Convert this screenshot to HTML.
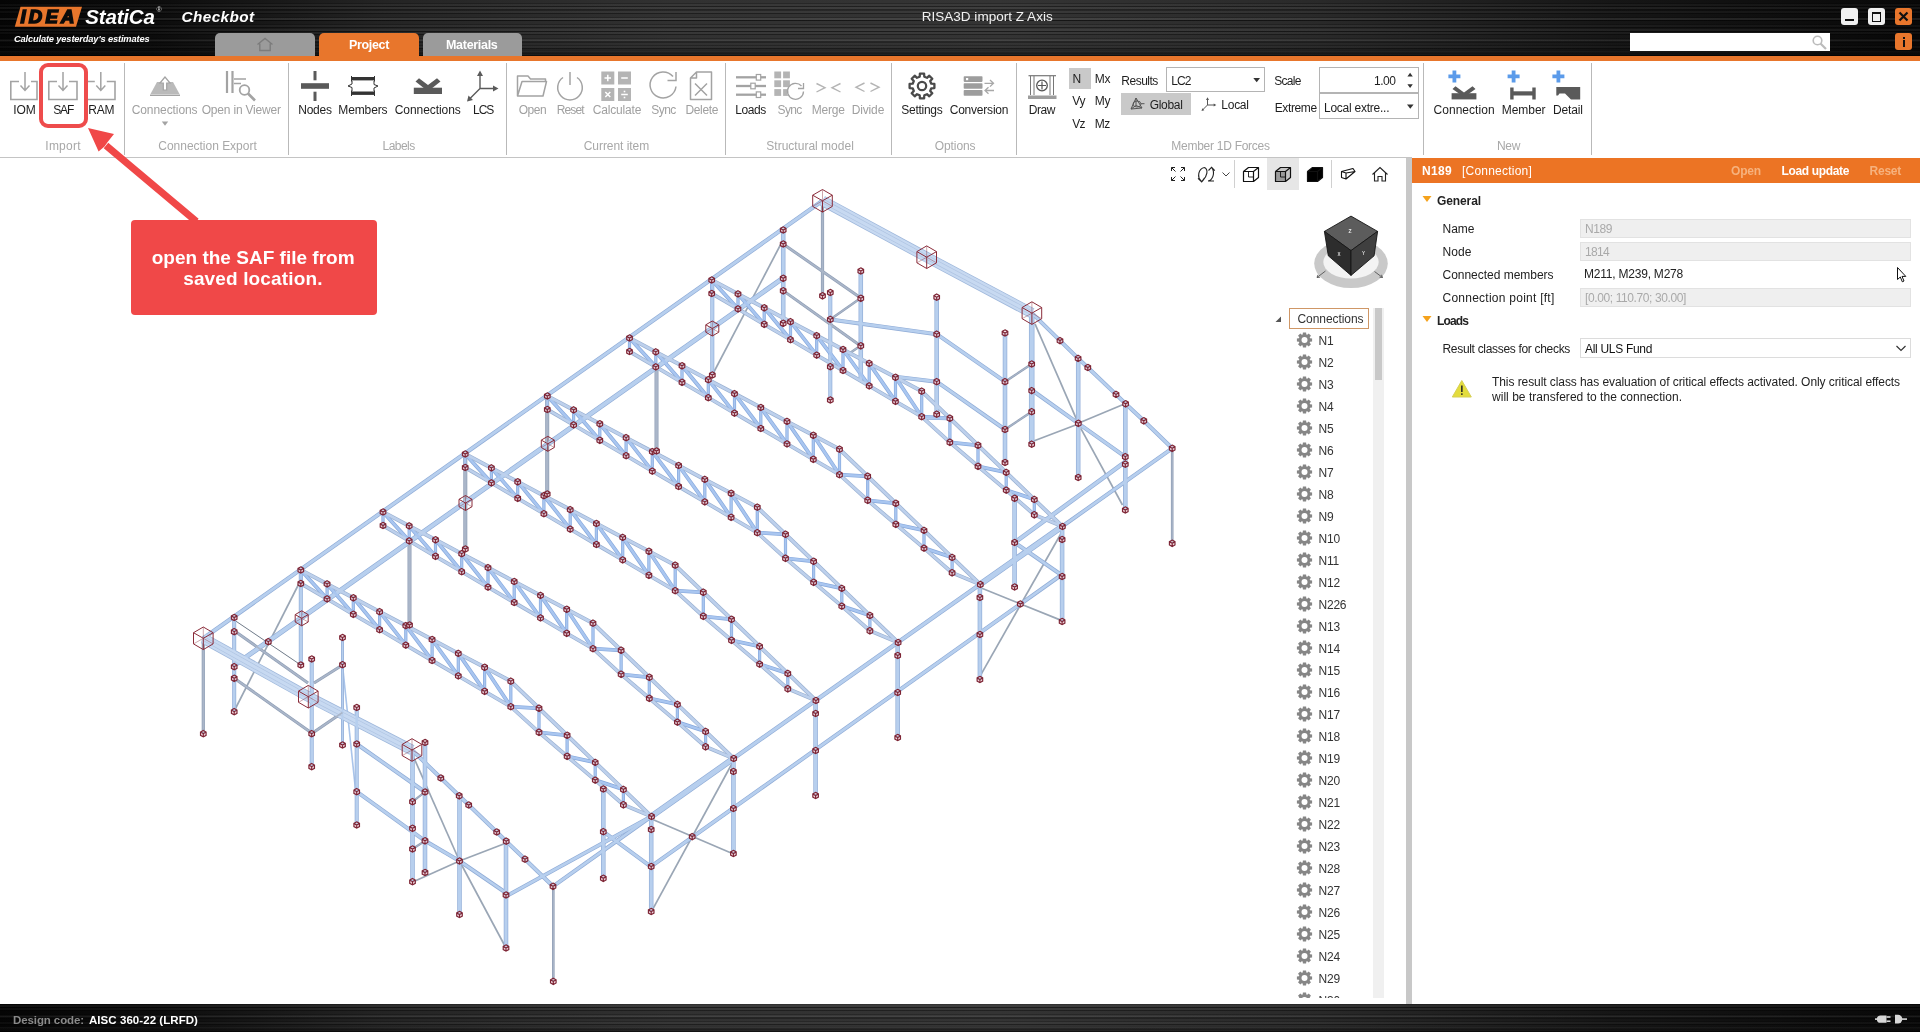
<!DOCTYPE html><html><head><meta charset="utf-8"><title>IDEA StatiCa Checkbot</title>
<style>
html,body{margin:0;padding:0;background:#fff;}
body{width:1920px;height:1032px;position:relative;overflow:hidden;font-family:"Liberation Sans",sans-serif;}
.t{position:absolute;white-space:nowrap;}
.a{position:absolute;}
.brushed{background:
 linear-gradient(180deg, rgba(0,0,0,0) 0%, rgba(0,0,0,0) 78%, rgba(0,0,0,0.45) 100%),
 repeating-linear-gradient(0deg, rgba(0,0,0,0.38) 0px, rgba(0,0,0,0.38) 1px, rgba(255,255,255,0.03) 1px, rgba(255,255,255,0.03) 3px, rgba(0,0,0,0.22) 3px, rgba(0,0,0,0.22) 4px, rgba(255,255,255,0.0) 4px, rgba(255,255,255,0.0) 7px),
 repeating-linear-gradient(0deg, rgba(0,0,0,0.0) 0px, rgba(0,0,0,0.0) 2px, rgba(0,0,0,0.3) 2px, rgba(0,0,0,0.3) 3px, rgba(255,255,255,0.05) 3px, rgba(255,255,255,0.05) 5px, rgba(0,0,0,0) 5px, rgba(0,0,0,0) 11px),
 linear-gradient(90deg,#050505 0%,#0c0c0c 8%,#242424 20%,#313131 35%,#343434 52%,#2a2a2a 68%,#161616 84%,#080808 100%);}
.sep{position:absolute;width:1px;background:#b9b9b9;top:63px;height:92px;}
svg{position:absolute;overflow:visible;}
</style>
</head><body><div id="app" style="position:absolute;left:0;top:0;width:1920px;height:1032px;will-change:transform;">
<svg style="left:0;top:0" width="1920" height="1032" viewBox="0 0 1920 1032"><g stroke-linecap="butt"><line x1="300.8" y1="580.0" x2="234.2" y2="711.0" stroke="#9aa6b5" stroke-width="1.7"/><line x1="234.2" y1="620.0" x2="300.8" y2="665.0" stroke="#6f7a88" stroke-width="1"/><line x1="783.0" y1="240.0" x2="712.3" y2="375.0" stroke="#9aa6b5" stroke-width="1.7"/><line x1="342.5" y1="665.0" x2="355.5" y2="790.0" stroke="#a9c4ea" stroke-width="1.6"/><line x1="414.0" y1="758.0" x2="459.5" y2="861.0" stroke="#9aa6b5" stroke-width="1.7"/><line x1="459.5" y1="861.0" x2="506.2" y2="843.0" stroke="#9aa6b5" stroke-width="1.7"/><line x1="413.3" y1="881.7" x2="459.5" y2="861.0" stroke="#9aa6b5" stroke-width="1.7"/><line x1="459.5" y1="861.0" x2="506.0" y2="948.0" stroke="#9aa6b5" stroke-width="1.7"/><line x1="651.0" y1="818.8" x2="732.3" y2="853.5" stroke="#9aa6b5" stroke-width="1.7"/><line x1="732.3" y1="763.0" x2="651.0" y2="912.4" stroke="#9aa6b5" stroke-width="1.7"/><line x1="978.8" y1="587.0" x2="1061.3" y2="620.4" stroke="#9aa6b5" stroke-width="1.7"/><line x1="1061.3" y1="533.0" x2="978.8" y2="678.3" stroke="#9aa6b5" stroke-width="1.7"/><line x1="1035.0" y1="323.8" x2="1078.3" y2="423.3" stroke="#9aa6b5" stroke-width="1.7"/><line x1="1078.3" y1="423.3" x2="1125.0" y2="403.8" stroke="#9aa6b5" stroke-width="1.7"/><line x1="1031.7" y1="441.7" x2="1078.3" y2="424.0" stroke="#9aa6b5" stroke-width="1.7"/><line x1="1080.8" y1="428.3" x2="1122.5" y2="505.0" stroke="#9aa6b5" stroke-width="1.7"/><line x1="300.8" y1="570.0" x2="300.8" y2="665.0" stroke="#8fabd6" stroke-width="4"/><line x1="465.3" y1="452.8" x2="465.3" y2="549.0" stroke="#8e9db4" stroke-width="4"/><line x1="547.2" y1="395.0" x2="547.2" y2="494.0" stroke="#8e9db4" stroke-width="4"/><line x1="712.3" y1="280.0" x2="712.3" y2="375.0" stroke="#8fabd6" stroke-width="4"/><line x1="409.5" y1="540.0" x2="409.5" y2="625.0" stroke="#8e9db4" stroke-width="4"/><line x1="656.5" y1="364.0" x2="656.5" y2="451.0" stroke="#8e9db4" stroke-width="4"/><line x1="234.2" y1="617.5" x2="234.2" y2="711.7" stroke="#8fabd6" stroke-width="4"/><line x1="783.2" y1="230.0" x2="783.2" y2="323.3" stroke="#8fabd6" stroke-width="4.5"/><line x1="203.3" y1="640.0" x2="203.3" y2="733.7" stroke="#8e9db4" stroke-width="3.2"/><line x1="822.5" y1="203.0" x2="822.5" y2="295.8" stroke="#8e9db4" stroke-width="3.2"/><line x1="1172.2" y1="449.0" x2="1172.2" y2="543.3" stroke="#8e9db4" stroke-width="2.6"/><line x1="553.3" y1="887.0" x2="553.3" y2="981.4" stroke="#8e9db4" stroke-width="2.6"/><line x1="234.7" y1="665.0" x2="783.1" y2="278.0" stroke="#8fabd6" stroke-width="5"/><line x1="203.3" y1="638.3" x2="822.5" y2="200.8" stroke="#8fabd6" stroke-width="4.2"/><line x1="203.3" y1="638.3" x2="308.3" y2="696.7" stroke="#9db6da" stroke-width="10.5"/><line x1="308.3" y1="696.7" x2="412.0" y2="750.0" stroke="#9db6da" stroke-width="10.5"/><line x1="311.7" y1="659.0" x2="311.7" y2="766.7" stroke="#8fabd6" stroke-width="4"/><line x1="342.5" y1="637.5" x2="342.5" y2="745.0" stroke="#8fabd6" stroke-width="3"/><line x1="356.7" y1="707.5" x2="356.7" y2="825.0" stroke="#8fabd6" stroke-width="4"/><line x1="412.5" y1="750.0" x2="412.5" y2="881.7" stroke="#8fabd6" stroke-width="4.5"/><line x1="425.0" y1="742.5" x2="425.0" y2="872.5" stroke="#8fabd6" stroke-width="4.5"/><line x1="459.5" y1="796.0" x2="459.5" y2="914.5" stroke="#8fabd6" stroke-width="4.5"/><line x1="506.0" y1="841.0" x2="506.0" y2="948.0" stroke="#8fabd6" stroke-width="4.5"/><line x1="412.0" y1="750.0" x2="440.8" y2="778.0" stroke="#8fabd6" stroke-width="4"/><line x1="440.8" y1="778.0" x2="459.2" y2="795.8" stroke="#8fabd6" stroke-width="4"/><line x1="459.2" y1="795.8" x2="468.7" y2="805.0" stroke="#8fabd6" stroke-width="4"/><line x1="468.7" y1="805.0" x2="496.7" y2="832.0" stroke="#8fabd6" stroke-width="4"/><line x1="496.7" y1="832.0" x2="506.2" y2="841.2" stroke="#8fabd6" stroke-width="4"/><line x1="506.2" y1="841.2" x2="525.0" y2="859.2" stroke="#8fabd6" stroke-width="4"/><line x1="525.0" y1="859.2" x2="553.0" y2="886.3" stroke="#8fabd6" stroke-width="4"/><line x1="236.0" y1="632.0" x2="308.0" y2="683.0" stroke="#8e9db4" stroke-width="3"/><line x1="236.0" y1="679.5" x2="311.7" y2="733.0" stroke="#8e9db4" stroke-width="3"/><line x1="342.5" y1="665.0" x2="314.0" y2="683.0" stroke="#8e9db4" stroke-width="3"/><line x1="342.5" y1="712.5" x2="314.0" y2="732.0" stroke="#8e9db4" stroke-width="3"/><line x1="356.7" y1="744.0" x2="425.0" y2="792.0" stroke="#8fabd6" stroke-width="4"/><line x1="356.7" y1="791.7" x2="425.0" y2="840.8" stroke="#8fabd6" stroke-width="4"/><line x1="425.0" y1="840.8" x2="459.5" y2="861.0" stroke="#8fabd6" stroke-width="4"/><line x1="459.5" y1="861.0" x2="506.2" y2="893.0" stroke="#8fabd6" stroke-width="4"/><line x1="412.5" y1="801.7" x2="425.0" y2="792.0" stroke="#8e9db4" stroke-width="2.2"/><line x1="412.5" y1="849.0" x2="425.0" y2="840.8" stroke="#8e9db4" stroke-width="2.2"/><line x1="553.0" y1="886.3" x2="651.2" y2="816.5" stroke="#8fabd6" stroke-width="4"/><line x1="505.3" y1="896.7" x2="651.2" y2="816.5" stroke="#8fabd6" stroke-width="4"/><line x1="651.2" y1="816.5" x2="733.4" y2="758.5" stroke="#8fabd6" stroke-width="6"/><line x1="733.4" y1="758.5" x2="815.6" y2="700.5" stroke="#8fabd6" stroke-width="4.4"/><line x1="815.6" y1="700.5" x2="897.7" y2="642.5" stroke="#8fabd6" stroke-width="4.4"/><line x1="897.7" y1="642.5" x2="979.9" y2="584.5" stroke="#8fabd6" stroke-width="4.4"/><line x1="979.9" y1="584.5" x2="1062.1" y2="526.5" stroke="#8fabd6" stroke-width="6"/><line x1="1062.1" y1="526.5" x2="1172.2" y2="448.3" stroke="#8fabd6" stroke-width="4"/><line x1="651.2" y1="816.5" x2="651.2" y2="911.5" stroke="#8fabd6" stroke-width="4.5"/><line x1="733.4" y1="758.5" x2="733.4" y2="853.5" stroke="#8fabd6" stroke-width="4.5"/><line x1="815.6" y1="700.5" x2="815.6" y2="795.5" stroke="#8fabd6" stroke-width="4.5"/><line x1="897.7" y1="642.5" x2="897.7" y2="737.5" stroke="#8fabd6" stroke-width="4.5"/><line x1="979.9" y1="584.5" x2="979.9" y2="679.5" stroke="#8fabd6" stroke-width="4.5"/><line x1="1062.1" y1="526.5" x2="1062.1" y2="621.5" stroke="#8fabd6" stroke-width="4.5"/><line x1="603.3" y1="831.7" x2="650.8" y2="866.7" stroke="#8fabd6" stroke-width="4"/><line x1="650.8" y1="866.7" x2="1061.3" y2="575.0" stroke="#8fabd6" stroke-width="4"/><line x1="603.3" y1="789.0" x2="603.3" y2="878.3" stroke="#8fabd6" stroke-width="4.5"/><line x1="1014.6" y1="498.3" x2="1014.6" y2="587.0" stroke="#8fabd6" stroke-width="4.5"/><line x1="1014.7" y1="542.5" x2="1125.0" y2="462.0" stroke="#8fabd6" stroke-width="4.5"/><line x1="1014.6" y1="542.5" x2="1061.5" y2="575.0" stroke="#8fabd6" stroke-width="4"/><line x1="822.5" y1="200.8" x2="926.7" y2="257.2" stroke="#9db6da" stroke-width="10.5"/><line x1="926.7" y1="257.2" x2="1031.9" y2="313.1" stroke="#9db6da" stroke-width="10.5"/><line x1="1031.9" y1="313.1" x2="1060.0" y2="340.6" stroke="#8fabd6" stroke-width="4"/><line x1="1060.0" y1="340.6" x2="1078.1" y2="358.4" stroke="#8fabd6" stroke-width="4"/><line x1="1078.1" y1="358.4" x2="1087.8" y2="367.5" stroke="#8fabd6" stroke-width="4"/><line x1="1087.8" y1="367.5" x2="1116.0" y2="394.4" stroke="#8fabd6" stroke-width="4"/><line x1="1116.0" y1="394.4" x2="1125.6" y2="403.8" stroke="#8fabd6" stroke-width="4"/><line x1="1125.6" y1="403.8" x2="1143.8" y2="420.8" stroke="#8fabd6" stroke-width="4"/><line x1="1143.8" y1="420.8" x2="1172.2" y2="448.3" stroke="#8fabd6" stroke-width="4"/><line x1="1031.7" y1="313.0" x2="1031.7" y2="444.2" stroke="#8fabd6" stroke-width="5.5"/><line x1="1078.2" y1="358.4" x2="1078.2" y2="477.5" stroke="#8fabd6" stroke-width="4.5"/><line x1="1125.3" y1="403.8" x2="1125.3" y2="510.0" stroke="#8fabd6" stroke-width="4.5"/><line x1="830.3" y1="292.5" x2="830.3" y2="400.0" stroke="#8fabd6" stroke-width="4"/><line x1="860.8" y1="271.0" x2="860.8" y2="380.0" stroke="#8fabd6" stroke-width="4.5"/><line x1="936.7" y1="297.2" x2="936.7" y2="414.2" stroke="#8fabd6" stroke-width="4.5"/><line x1="1005.0" y1="333.0" x2="1005.0" y2="462.5" stroke="#8fabd6" stroke-width="4.5"/><line x1="783.1" y1="244.0" x2="860.8" y2="298.0" stroke="#8e9db4" stroke-width="3"/><line x1="783.1" y1="290.6" x2="860.8" y2="346.0" stroke="#8e9db4" stroke-width="3"/><line x1="830.3" y1="319.4" x2="936.7" y2="334.2" stroke="#8fabd6" stroke-width="4"/><line x1="936.7" y1="334.2" x2="1005.0" y2="381.7" stroke="#8fabd6" stroke-width="4"/><line x1="895.0" y1="376.7" x2="936.7" y2="381.7" stroke="#8fabd6" stroke-width="4"/><line x1="936.7" y1="381.7" x2="1005.0" y2="429.5" stroke="#8fabd6" stroke-width="4"/><line x1="1031.7" y1="390.0" x2="1078.3" y2="423.3" stroke="#8fabd6" stroke-width="4"/><line x1="1078.3" y1="423.3" x2="1125.0" y2="456.7" stroke="#8fabd6" stroke-width="4"/><line x1="920.0" y1="417.5" x2="948.3" y2="418.3" stroke="#8fabd6" stroke-width="4"/><line x1="833.0" y1="317.5" x2="858.0" y2="300.0" stroke="#8e9db4" stroke-width="2.4"/><line x1="848.8" y1="353.8" x2="858.0" y2="347.5" stroke="#8e9db4" stroke-width="2.4"/><line x1="1005.0" y1="381.7" x2="1031.7" y2="364.0" stroke="#8e9db4" stroke-width="2.4"/><line x1="1005.0" y1="429.5" x2="1031.7" y2="411.7" stroke="#8e9db4" stroke-width="2.4"/><line x1="300.8" y1="570.0" x2="300.8" y2="583.5" stroke="#86a8dc" stroke-width="3.2"/><line x1="327.1" y1="583.9" x2="327.1" y2="598.9" stroke="#86a8dc" stroke-width="3.2"/><line x1="353.3" y1="597.8" x2="353.3" y2="614.3" stroke="#86a8dc" stroke-width="3.2"/><line x1="379.6" y1="611.7" x2="379.6" y2="629.7" stroke="#86a8dc" stroke-width="3.2"/><line x1="405.8" y1="625.6" x2="405.8" y2="645.1" stroke="#86a8dc" stroke-width="3.2"/><line x1="432.1" y1="639.5" x2="432.1" y2="660.5" stroke="#86a8dc" stroke-width="3.2"/><line x1="458.3" y1="653.4" x2="458.3" y2="675.9" stroke="#86a8dc" stroke-width="3.2"/><line x1="484.6" y1="667.3" x2="484.6" y2="691.3" stroke="#86a8dc" stroke-width="3.2"/><line x1="510.8" y1="681.2" x2="510.8" y2="706.7" stroke="#86a8dc" stroke-width="3.2"/><line x1="539.0" y1="708.3" x2="539.0" y2="732.3" stroke="#86a8dc" stroke-width="3.2"/><line x1="567.1" y1="735.3" x2="567.1" y2="756.3" stroke="#86a8dc" stroke-width="3.2"/><line x1="595.2" y1="762.4" x2="595.2" y2="780.1" stroke="#86a8dc" stroke-width="3.2"/><line x1="623.4" y1="789.4" x2="623.4" y2="804.7" stroke="#86a8dc" stroke-width="3.2"/><line x1="300.8" y1="570.0" x2="327.1" y2="598.9" stroke="#86a8dc" stroke-width="3.8"/><line x1="327.1" y1="583.9" x2="353.3" y2="614.3" stroke="#86a8dc" stroke-width="3.8"/><line x1="353.3" y1="597.8" x2="379.6" y2="629.7" stroke="#86a8dc" stroke-width="3.8"/><line x1="379.6" y1="611.7" x2="405.8" y2="645.1" stroke="#86a8dc" stroke-width="3.8"/><line x1="405.8" y1="625.6" x2="432.1" y2="660.5" stroke="#86a8dc" stroke-width="3.8"/><line x1="432.1" y1="639.5" x2="458.3" y2="675.9" stroke="#86a8dc" stroke-width="3.8"/><line x1="458.3" y1="653.4" x2="484.6" y2="691.3" stroke="#86a8dc" stroke-width="3.8"/><line x1="484.6" y1="667.3" x2="510.8" y2="706.7" stroke="#86a8dc" stroke-width="3.8"/><line x1="510.8" y1="706.7" x2="539.0" y2="708.3" stroke="#86a8dc" stroke-width="3.8"/><line x1="539.0" y1="732.3" x2="567.1" y2="735.3" stroke="#86a8dc" stroke-width="3.8"/><line x1="567.1" y1="756.3" x2="595.2" y2="762.4" stroke="#86a8dc" stroke-width="3.8"/><line x1="595.2" y1="780.1" x2="623.4" y2="789.4" stroke="#86a8dc" stroke-width="3.8"/><line x1="300.8" y1="570.0" x2="327.1" y2="583.9" stroke="#98afd0" stroke-width="4.0"/><line x1="327.1" y1="583.9" x2="353.3" y2="597.8" stroke="#98afd0" stroke-width="4.0"/><line x1="353.3" y1="597.8" x2="379.6" y2="611.7" stroke="#98afd0" stroke-width="4.0"/><line x1="379.6" y1="611.7" x2="405.8" y2="625.6" stroke="#98afd0" stroke-width="4.0"/><line x1="405.8" y1="625.6" x2="432.1" y2="639.5" stroke="#98afd0" stroke-width="4.0"/><line x1="432.1" y1="639.5" x2="458.3" y2="653.4" stroke="#98afd0" stroke-width="4.0"/><line x1="458.3" y1="653.4" x2="484.6" y2="667.3" stroke="#98afd0" stroke-width="4.0"/><line x1="484.6" y1="667.3" x2="510.8" y2="681.2" stroke="#98afd0" stroke-width="4.0"/><line x1="510.8" y1="681.2" x2="539.0" y2="708.3" stroke="#98afd0" stroke-width="4.0"/><line x1="539.0" y1="708.3" x2="567.1" y2="735.3" stroke="#98afd0" stroke-width="4.0"/><line x1="567.1" y1="735.3" x2="595.2" y2="762.4" stroke="#98afd0" stroke-width="4.0"/><line x1="595.2" y1="762.4" x2="623.4" y2="789.4" stroke="#98afd0" stroke-width="4.0"/><line x1="623.4" y1="789.4" x2="651.5" y2="816.5" stroke="#98afd0" stroke-width="4.0"/><line x1="300.8" y1="583.5" x2="327.1" y2="598.9" stroke="#98afd0" stroke-width="3.8"/><line x1="327.1" y1="598.9" x2="353.3" y2="614.3" stroke="#98afd0" stroke-width="3.8"/><line x1="353.3" y1="614.3" x2="379.6" y2="629.7" stroke="#98afd0" stroke-width="3.8"/><line x1="379.6" y1="629.7" x2="405.8" y2="645.1" stroke="#98afd0" stroke-width="3.8"/><line x1="405.8" y1="645.1" x2="432.1" y2="660.5" stroke="#98afd0" stroke-width="3.8"/><line x1="432.1" y1="660.5" x2="458.3" y2="675.9" stroke="#98afd0" stroke-width="3.8"/><line x1="458.3" y1="675.9" x2="484.6" y2="691.3" stroke="#98afd0" stroke-width="3.8"/><line x1="484.6" y1="691.3" x2="510.8" y2="706.7" stroke="#98afd0" stroke-width="3.8"/><line x1="510.8" y1="706.7" x2="539.0" y2="732.3" stroke="#98afd0" stroke-width="3.8"/><line x1="539.0" y1="732.3" x2="567.1" y2="756.3" stroke="#98afd0" stroke-width="3.8"/><line x1="567.1" y1="756.3" x2="595.2" y2="780.1" stroke="#98afd0" stroke-width="3.8"/><line x1="595.2" y1="780.1" x2="623.4" y2="804.7" stroke="#98afd0" stroke-width="3.8"/><line x1="623.4" y1="804.7" x2="651.5" y2="816.5" stroke="#98afd0" stroke-width="3.8"/><line x1="383.0" y1="512.0" x2="383.0" y2="525.5" stroke="#86a8dc" stroke-width="3.2"/><line x1="409.2" y1="525.9" x2="409.2" y2="540.9" stroke="#86a8dc" stroke-width="3.2"/><line x1="435.5" y1="539.8" x2="435.5" y2="556.3" stroke="#86a8dc" stroke-width="3.2"/><line x1="461.7" y1="553.7" x2="461.7" y2="571.7" stroke="#86a8dc" stroke-width="3.2"/><line x1="488.0" y1="567.6" x2="488.0" y2="587.1" stroke="#86a8dc" stroke-width="3.2"/><line x1="514.2" y1="581.5" x2="514.2" y2="602.5" stroke="#86a8dc" stroke-width="3.2"/><line x1="540.5" y1="595.4" x2="540.5" y2="617.9" stroke="#86a8dc" stroke-width="3.2"/><line x1="566.7" y1="609.3" x2="566.7" y2="633.3" stroke="#86a8dc" stroke-width="3.2"/><line x1="593.0" y1="623.2" x2="593.0" y2="648.7" stroke="#86a8dc" stroke-width="3.2"/><line x1="621.1" y1="650.3" x2="621.1" y2="674.3" stroke="#86a8dc" stroke-width="3.2"/><line x1="649.3" y1="677.3" x2="649.3" y2="698.3" stroke="#86a8dc" stroke-width="3.2"/><line x1="677.4" y1="704.4" x2="677.4" y2="722.1" stroke="#86a8dc" stroke-width="3.2"/><line x1="705.6" y1="731.4" x2="705.6" y2="746.7" stroke="#86a8dc" stroke-width="3.2"/><line x1="383.0" y1="512.0" x2="409.2" y2="540.9" stroke="#86a8dc" stroke-width="3.8"/><line x1="409.2" y1="525.9" x2="435.5" y2="556.3" stroke="#86a8dc" stroke-width="3.8"/><line x1="435.5" y1="539.8" x2="461.7" y2="571.7" stroke="#86a8dc" stroke-width="3.8"/><line x1="461.7" y1="553.7" x2="488.0" y2="587.1" stroke="#86a8dc" stroke-width="3.8"/><line x1="488.0" y1="567.6" x2="514.2" y2="602.5" stroke="#86a8dc" stroke-width="3.8"/><line x1="514.2" y1="581.5" x2="540.5" y2="617.9" stroke="#86a8dc" stroke-width="3.8"/><line x1="540.5" y1="595.4" x2="566.7" y2="633.3" stroke="#86a8dc" stroke-width="3.8"/><line x1="566.7" y1="609.3" x2="593.0" y2="648.7" stroke="#86a8dc" stroke-width="3.8"/><line x1="593.0" y1="648.7" x2="621.1" y2="650.3" stroke="#86a8dc" stroke-width="3.8"/><line x1="621.1" y1="674.3" x2="649.3" y2="677.3" stroke="#86a8dc" stroke-width="3.8"/><line x1="649.3" y1="698.3" x2="677.4" y2="704.4" stroke="#86a8dc" stroke-width="3.8"/><line x1="677.4" y1="722.1" x2="705.6" y2="731.4" stroke="#86a8dc" stroke-width="3.8"/><line x1="383.0" y1="512.0" x2="409.2" y2="525.9" stroke="#98afd0" stroke-width="4.0"/><line x1="409.2" y1="525.9" x2="435.5" y2="539.8" stroke="#98afd0" stroke-width="4.0"/><line x1="435.5" y1="539.8" x2="461.7" y2="553.7" stroke="#98afd0" stroke-width="4.0"/><line x1="461.7" y1="553.7" x2="488.0" y2="567.6" stroke="#98afd0" stroke-width="4.0"/><line x1="488.0" y1="567.6" x2="514.2" y2="581.5" stroke="#98afd0" stroke-width="4.0"/><line x1="514.2" y1="581.5" x2="540.5" y2="595.4" stroke="#98afd0" stroke-width="4.0"/><line x1="540.5" y1="595.4" x2="566.7" y2="609.3" stroke="#98afd0" stroke-width="4.0"/><line x1="566.7" y1="609.3" x2="593.0" y2="623.2" stroke="#98afd0" stroke-width="4.0"/><line x1="593.0" y1="623.2" x2="621.1" y2="650.3" stroke="#98afd0" stroke-width="4.0"/><line x1="621.1" y1="650.3" x2="649.3" y2="677.3" stroke="#98afd0" stroke-width="4.0"/><line x1="649.3" y1="677.3" x2="677.4" y2="704.4" stroke="#98afd0" stroke-width="4.0"/><line x1="677.4" y1="704.4" x2="705.6" y2="731.4" stroke="#98afd0" stroke-width="4.0"/><line x1="705.6" y1="731.4" x2="733.7" y2="758.5" stroke="#98afd0" stroke-width="4.0"/><line x1="383.0" y1="525.5" x2="409.2" y2="540.9" stroke="#98afd0" stroke-width="3.8"/><line x1="409.2" y1="540.9" x2="435.5" y2="556.3" stroke="#98afd0" stroke-width="3.8"/><line x1="435.5" y1="556.3" x2="461.7" y2="571.7" stroke="#98afd0" stroke-width="3.8"/><line x1="461.7" y1="571.7" x2="488.0" y2="587.1" stroke="#98afd0" stroke-width="3.8"/><line x1="488.0" y1="587.1" x2="514.2" y2="602.5" stroke="#98afd0" stroke-width="3.8"/><line x1="514.2" y1="602.5" x2="540.5" y2="617.9" stroke="#98afd0" stroke-width="3.8"/><line x1="540.5" y1="617.9" x2="566.7" y2="633.3" stroke="#98afd0" stroke-width="3.8"/><line x1="566.7" y1="633.3" x2="593.0" y2="648.7" stroke="#98afd0" stroke-width="3.8"/><line x1="593.0" y1="648.7" x2="621.1" y2="674.3" stroke="#98afd0" stroke-width="3.8"/><line x1="621.1" y1="674.3" x2="649.3" y2="698.3" stroke="#98afd0" stroke-width="3.8"/><line x1="649.3" y1="698.3" x2="677.4" y2="722.1" stroke="#98afd0" stroke-width="3.8"/><line x1="677.4" y1="722.1" x2="705.6" y2="746.7" stroke="#98afd0" stroke-width="3.8"/><line x1="705.6" y1="746.7" x2="733.7" y2="758.5" stroke="#98afd0" stroke-width="3.8"/><line x1="465.2" y1="454.0" x2="465.2" y2="467.5" stroke="#86a8dc" stroke-width="3.2"/><line x1="491.4" y1="467.9" x2="491.4" y2="482.9" stroke="#86a8dc" stroke-width="3.2"/><line x1="517.7" y1="481.8" x2="517.7" y2="498.3" stroke="#86a8dc" stroke-width="3.2"/><line x1="543.9" y1="495.7" x2="543.9" y2="513.7" stroke="#86a8dc" stroke-width="3.2"/><line x1="570.2" y1="509.6" x2="570.2" y2="529.1" stroke="#86a8dc" stroke-width="3.2"/><line x1="596.4" y1="523.5" x2="596.4" y2="544.5" stroke="#86a8dc" stroke-width="3.2"/><line x1="622.7" y1="537.4" x2="622.7" y2="559.9" stroke="#86a8dc" stroke-width="3.2"/><line x1="648.9" y1="551.3" x2="648.9" y2="575.3" stroke="#86a8dc" stroke-width="3.2"/><line x1="675.2" y1="565.2" x2="675.2" y2="590.7" stroke="#86a8dc" stroke-width="3.2"/><line x1="703.3" y1="592.3" x2="703.3" y2="616.3" stroke="#86a8dc" stroke-width="3.2"/><line x1="731.5" y1="619.3" x2="731.5" y2="640.3" stroke="#86a8dc" stroke-width="3.2"/><line x1="759.6" y1="646.4" x2="759.6" y2="664.1" stroke="#86a8dc" stroke-width="3.2"/><line x1="787.8" y1="673.4" x2="787.8" y2="688.7" stroke="#86a8dc" stroke-width="3.2"/><line x1="465.2" y1="454.0" x2="491.4" y2="482.9" stroke="#86a8dc" stroke-width="3.8"/><line x1="491.4" y1="467.9" x2="517.7" y2="498.3" stroke="#86a8dc" stroke-width="3.8"/><line x1="517.7" y1="481.8" x2="543.9" y2="513.7" stroke="#86a8dc" stroke-width="3.8"/><line x1="543.9" y1="495.7" x2="570.2" y2="529.1" stroke="#86a8dc" stroke-width="3.8"/><line x1="570.2" y1="509.6" x2="596.4" y2="544.5" stroke="#86a8dc" stroke-width="3.8"/><line x1="596.4" y1="523.5" x2="622.7" y2="559.9" stroke="#86a8dc" stroke-width="3.8"/><line x1="622.7" y1="537.4" x2="648.9" y2="575.3" stroke="#86a8dc" stroke-width="3.8"/><line x1="648.9" y1="551.3" x2="675.2" y2="590.7" stroke="#86a8dc" stroke-width="3.8"/><line x1="675.2" y1="590.7" x2="703.3" y2="592.3" stroke="#86a8dc" stroke-width="3.8"/><line x1="703.3" y1="616.3" x2="731.5" y2="619.3" stroke="#86a8dc" stroke-width="3.8"/><line x1="731.5" y1="640.3" x2="759.6" y2="646.4" stroke="#86a8dc" stroke-width="3.8"/><line x1="759.6" y1="664.1" x2="787.8" y2="673.4" stroke="#86a8dc" stroke-width="3.8"/><line x1="465.2" y1="454.0" x2="491.4" y2="467.9" stroke="#98afd0" stroke-width="4.0"/><line x1="491.4" y1="467.9" x2="517.7" y2="481.8" stroke="#98afd0" stroke-width="4.0"/><line x1="517.7" y1="481.8" x2="543.9" y2="495.7" stroke="#98afd0" stroke-width="4.0"/><line x1="543.9" y1="495.7" x2="570.2" y2="509.6" stroke="#98afd0" stroke-width="4.0"/><line x1="570.2" y1="509.6" x2="596.4" y2="523.5" stroke="#98afd0" stroke-width="4.0"/><line x1="596.4" y1="523.5" x2="622.7" y2="537.4" stroke="#98afd0" stroke-width="4.0"/><line x1="622.7" y1="537.4" x2="648.9" y2="551.3" stroke="#98afd0" stroke-width="4.0"/><line x1="648.9" y1="551.3" x2="675.2" y2="565.2" stroke="#98afd0" stroke-width="4.0"/><line x1="675.2" y1="565.2" x2="703.3" y2="592.3" stroke="#98afd0" stroke-width="4.0"/><line x1="703.3" y1="592.3" x2="731.5" y2="619.3" stroke="#98afd0" stroke-width="4.0"/><line x1="731.5" y1="619.3" x2="759.6" y2="646.4" stroke="#98afd0" stroke-width="4.0"/><line x1="759.6" y1="646.4" x2="787.8" y2="673.4" stroke="#98afd0" stroke-width="4.0"/><line x1="787.8" y1="673.4" x2="815.9" y2="700.5" stroke="#98afd0" stroke-width="4.0"/><line x1="465.2" y1="467.5" x2="491.4" y2="482.9" stroke="#98afd0" stroke-width="3.8"/><line x1="491.4" y1="482.9" x2="517.7" y2="498.3" stroke="#98afd0" stroke-width="3.8"/><line x1="517.7" y1="498.3" x2="543.9" y2="513.7" stroke="#98afd0" stroke-width="3.8"/><line x1="543.9" y1="513.7" x2="570.2" y2="529.1" stroke="#98afd0" stroke-width="3.8"/><line x1="570.2" y1="529.1" x2="596.4" y2="544.5" stroke="#98afd0" stroke-width="3.8"/><line x1="596.4" y1="544.5" x2="622.7" y2="559.9" stroke="#98afd0" stroke-width="3.8"/><line x1="622.7" y1="559.9" x2="648.9" y2="575.3" stroke="#98afd0" stroke-width="3.8"/><line x1="648.9" y1="575.3" x2="675.2" y2="590.7" stroke="#98afd0" stroke-width="3.8"/><line x1="675.2" y1="590.7" x2="703.3" y2="616.3" stroke="#98afd0" stroke-width="3.8"/><line x1="703.3" y1="616.3" x2="731.5" y2="640.3" stroke="#98afd0" stroke-width="3.8"/><line x1="731.5" y1="640.3" x2="759.6" y2="664.1" stroke="#98afd0" stroke-width="3.8"/><line x1="759.6" y1="664.1" x2="787.8" y2="688.7" stroke="#98afd0" stroke-width="3.8"/><line x1="787.8" y1="688.7" x2="815.9" y2="700.5" stroke="#98afd0" stroke-width="3.8"/><line x1="547.3" y1="396.0" x2="547.3" y2="409.5" stroke="#86a8dc" stroke-width="3.2"/><line x1="573.6" y1="409.9" x2="573.6" y2="424.9" stroke="#86a8dc" stroke-width="3.2"/><line x1="599.8" y1="423.8" x2="599.8" y2="440.3" stroke="#86a8dc" stroke-width="3.2"/><line x1="626.1" y1="437.7" x2="626.1" y2="455.7" stroke="#86a8dc" stroke-width="3.2"/><line x1="652.3" y1="451.6" x2="652.3" y2="471.1" stroke="#86a8dc" stroke-width="3.2"/><line x1="678.6" y1="465.5" x2="678.6" y2="486.5" stroke="#86a8dc" stroke-width="3.2"/><line x1="704.8" y1="479.4" x2="704.8" y2="501.9" stroke="#86a8dc" stroke-width="3.2"/><line x1="731.1" y1="493.3" x2="731.1" y2="517.3" stroke="#86a8dc" stroke-width="3.2"/><line x1="757.3" y1="507.2" x2="757.3" y2="532.7" stroke="#86a8dc" stroke-width="3.2"/><line x1="785.5" y1="534.3" x2="785.5" y2="558.3" stroke="#86a8dc" stroke-width="3.2"/><line x1="813.6" y1="561.3" x2="813.6" y2="582.3" stroke="#86a8dc" stroke-width="3.2"/><line x1="841.8" y1="588.4" x2="841.8" y2="606.1" stroke="#86a8dc" stroke-width="3.2"/><line x1="869.9" y1="615.4" x2="869.9" y2="630.7" stroke="#86a8dc" stroke-width="3.2"/><line x1="547.3" y1="396.0" x2="573.6" y2="424.9" stroke="#86a8dc" stroke-width="3.8"/><line x1="573.6" y1="409.9" x2="599.8" y2="440.3" stroke="#86a8dc" stroke-width="3.8"/><line x1="599.8" y1="423.8" x2="626.1" y2="455.7" stroke="#86a8dc" stroke-width="3.8"/><line x1="626.1" y1="437.7" x2="652.3" y2="471.1" stroke="#86a8dc" stroke-width="3.8"/><line x1="652.3" y1="451.6" x2="678.6" y2="486.5" stroke="#86a8dc" stroke-width="3.8"/><line x1="678.6" y1="465.5" x2="704.8" y2="501.9" stroke="#86a8dc" stroke-width="3.8"/><line x1="704.8" y1="479.4" x2="731.1" y2="517.3" stroke="#86a8dc" stroke-width="3.8"/><line x1="731.1" y1="493.3" x2="757.3" y2="532.7" stroke="#86a8dc" stroke-width="3.8"/><line x1="757.3" y1="532.7" x2="785.5" y2="534.3" stroke="#86a8dc" stroke-width="3.8"/><line x1="785.5" y1="558.3" x2="813.6" y2="561.3" stroke="#86a8dc" stroke-width="3.8"/><line x1="813.6" y1="582.3" x2="841.8" y2="588.4" stroke="#86a8dc" stroke-width="3.8"/><line x1="841.8" y1="606.1" x2="869.9" y2="615.4" stroke="#86a8dc" stroke-width="3.8"/><line x1="547.3" y1="396.0" x2="573.6" y2="409.9" stroke="#98afd0" stroke-width="4.0"/><line x1="573.6" y1="409.9" x2="599.8" y2="423.8" stroke="#98afd0" stroke-width="4.0"/><line x1="599.8" y1="423.8" x2="626.1" y2="437.7" stroke="#98afd0" stroke-width="4.0"/><line x1="626.1" y1="437.7" x2="652.3" y2="451.6" stroke="#98afd0" stroke-width="4.0"/><line x1="652.3" y1="451.6" x2="678.6" y2="465.5" stroke="#98afd0" stroke-width="4.0"/><line x1="678.6" y1="465.5" x2="704.8" y2="479.4" stroke="#98afd0" stroke-width="4.0"/><line x1="704.8" y1="479.4" x2="731.1" y2="493.3" stroke="#98afd0" stroke-width="4.0"/><line x1="731.1" y1="493.3" x2="757.3" y2="507.2" stroke="#98afd0" stroke-width="4.0"/><line x1="757.3" y1="507.2" x2="785.5" y2="534.3" stroke="#98afd0" stroke-width="4.0"/><line x1="785.5" y1="534.3" x2="813.6" y2="561.3" stroke="#98afd0" stroke-width="4.0"/><line x1="813.6" y1="561.3" x2="841.8" y2="588.4" stroke="#98afd0" stroke-width="4.0"/><line x1="841.8" y1="588.4" x2="869.9" y2="615.4" stroke="#98afd0" stroke-width="4.0"/><line x1="869.9" y1="615.4" x2="898.1" y2="642.5" stroke="#98afd0" stroke-width="4.0"/><line x1="547.3" y1="409.5" x2="573.6" y2="424.9" stroke="#98afd0" stroke-width="3.8"/><line x1="573.6" y1="424.9" x2="599.8" y2="440.3" stroke="#98afd0" stroke-width="3.8"/><line x1="599.8" y1="440.3" x2="626.1" y2="455.7" stroke="#98afd0" stroke-width="3.8"/><line x1="626.1" y1="455.7" x2="652.3" y2="471.1" stroke="#98afd0" stroke-width="3.8"/><line x1="652.3" y1="471.1" x2="678.6" y2="486.5" stroke="#98afd0" stroke-width="3.8"/><line x1="678.6" y1="486.5" x2="704.8" y2="501.9" stroke="#98afd0" stroke-width="3.8"/><line x1="704.8" y1="501.9" x2="731.1" y2="517.3" stroke="#98afd0" stroke-width="3.8"/><line x1="731.1" y1="517.3" x2="757.3" y2="532.7" stroke="#98afd0" stroke-width="3.8"/><line x1="757.3" y1="532.7" x2="785.5" y2="558.3" stroke="#98afd0" stroke-width="3.8"/><line x1="785.5" y1="558.3" x2="813.6" y2="582.3" stroke="#98afd0" stroke-width="3.8"/><line x1="813.6" y1="582.3" x2="841.8" y2="606.1" stroke="#98afd0" stroke-width="3.8"/><line x1="841.8" y1="606.1" x2="869.9" y2="630.7" stroke="#98afd0" stroke-width="3.8"/><line x1="869.9" y1="630.7" x2="898.1" y2="642.5" stroke="#98afd0" stroke-width="3.8"/><line x1="629.5" y1="338.0" x2="629.5" y2="351.5" stroke="#86a8dc" stroke-width="3.2"/><line x1="655.8" y1="351.9" x2="655.8" y2="366.9" stroke="#86a8dc" stroke-width="3.2"/><line x1="682.0" y1="365.8" x2="682.0" y2="382.3" stroke="#86a8dc" stroke-width="3.2"/><line x1="708.3" y1="379.7" x2="708.3" y2="397.7" stroke="#86a8dc" stroke-width="3.2"/><line x1="734.5" y1="393.6" x2="734.5" y2="413.1" stroke="#86a8dc" stroke-width="3.2"/><line x1="760.8" y1="407.5" x2="760.8" y2="428.5" stroke="#86a8dc" stroke-width="3.2"/><line x1="787.0" y1="421.4" x2="787.0" y2="443.9" stroke="#86a8dc" stroke-width="3.2"/><line x1="813.3" y1="435.3" x2="813.3" y2="459.3" stroke="#86a8dc" stroke-width="3.2"/><line x1="839.5" y1="449.2" x2="839.5" y2="474.7" stroke="#86a8dc" stroke-width="3.2"/><line x1="867.7" y1="476.3" x2="867.7" y2="500.3" stroke="#86a8dc" stroke-width="3.2"/><line x1="895.8" y1="503.3" x2="895.8" y2="524.3" stroke="#86a8dc" stroke-width="3.2"/><line x1="924.0" y1="530.4" x2="924.0" y2="548.1" stroke="#86a8dc" stroke-width="3.2"/><line x1="952.1" y1="557.4" x2="952.1" y2="572.7" stroke="#86a8dc" stroke-width="3.2"/><line x1="629.5" y1="338.0" x2="655.8" y2="366.9" stroke="#86a8dc" stroke-width="3.8"/><line x1="655.8" y1="351.9" x2="682.0" y2="382.3" stroke="#86a8dc" stroke-width="3.8"/><line x1="682.0" y1="365.8" x2="708.3" y2="397.7" stroke="#86a8dc" stroke-width="3.8"/><line x1="708.3" y1="379.7" x2="734.5" y2="413.1" stroke="#86a8dc" stroke-width="3.8"/><line x1="734.5" y1="393.6" x2="760.8" y2="428.5" stroke="#86a8dc" stroke-width="3.8"/><line x1="760.8" y1="407.5" x2="787.0" y2="443.9" stroke="#86a8dc" stroke-width="3.8"/><line x1="787.0" y1="421.4" x2="813.3" y2="459.3" stroke="#86a8dc" stroke-width="3.8"/><line x1="813.3" y1="435.3" x2="839.5" y2="474.7" stroke="#86a8dc" stroke-width="3.8"/><line x1="839.5" y1="474.7" x2="867.7" y2="476.3" stroke="#86a8dc" stroke-width="3.8"/><line x1="867.7" y1="500.3" x2="895.8" y2="503.3" stroke="#86a8dc" stroke-width="3.8"/><line x1="895.8" y1="524.3" x2="924.0" y2="530.4" stroke="#86a8dc" stroke-width="3.8"/><line x1="924.0" y1="548.1" x2="952.1" y2="557.4" stroke="#86a8dc" stroke-width="3.8"/><line x1="629.5" y1="338.0" x2="655.8" y2="351.9" stroke="#98afd0" stroke-width="4.0"/><line x1="655.8" y1="351.9" x2="682.0" y2="365.8" stroke="#98afd0" stroke-width="4.0"/><line x1="682.0" y1="365.8" x2="708.3" y2="379.7" stroke="#98afd0" stroke-width="4.0"/><line x1="708.3" y1="379.7" x2="734.5" y2="393.6" stroke="#98afd0" stroke-width="4.0"/><line x1="734.5" y1="393.6" x2="760.8" y2="407.5" stroke="#98afd0" stroke-width="4.0"/><line x1="760.8" y1="407.5" x2="787.0" y2="421.4" stroke="#98afd0" stroke-width="4.0"/><line x1="787.0" y1="421.4" x2="813.3" y2="435.3" stroke="#98afd0" stroke-width="4.0"/><line x1="813.3" y1="435.3" x2="839.5" y2="449.2" stroke="#98afd0" stroke-width="4.0"/><line x1="839.5" y1="449.2" x2="867.7" y2="476.3" stroke="#98afd0" stroke-width="4.0"/><line x1="867.7" y1="476.3" x2="895.8" y2="503.3" stroke="#98afd0" stroke-width="4.0"/><line x1="895.8" y1="503.3" x2="924.0" y2="530.4" stroke="#98afd0" stroke-width="4.0"/><line x1="924.0" y1="530.4" x2="952.1" y2="557.4" stroke="#98afd0" stroke-width="4.0"/><line x1="952.1" y1="557.4" x2="980.3" y2="584.5" stroke="#98afd0" stroke-width="4.0"/><line x1="629.5" y1="351.5" x2="655.8" y2="366.9" stroke="#98afd0" stroke-width="3.8"/><line x1="655.8" y1="366.9" x2="682.0" y2="382.3" stroke="#98afd0" stroke-width="3.8"/><line x1="682.0" y1="382.3" x2="708.3" y2="397.7" stroke="#98afd0" stroke-width="3.8"/><line x1="708.3" y1="397.7" x2="734.5" y2="413.1" stroke="#98afd0" stroke-width="3.8"/><line x1="734.5" y1="413.1" x2="760.8" y2="428.5" stroke="#98afd0" stroke-width="3.8"/><line x1="760.8" y1="428.5" x2="787.0" y2="443.9" stroke="#98afd0" stroke-width="3.8"/><line x1="787.0" y1="443.9" x2="813.3" y2="459.3" stroke="#98afd0" stroke-width="3.8"/><line x1="813.3" y1="459.3" x2="839.5" y2="474.7" stroke="#98afd0" stroke-width="3.8"/><line x1="839.5" y1="474.7" x2="867.7" y2="500.3" stroke="#98afd0" stroke-width="3.8"/><line x1="867.7" y1="500.3" x2="895.8" y2="524.3" stroke="#98afd0" stroke-width="3.8"/><line x1="895.8" y1="524.3" x2="924.0" y2="548.1" stroke="#98afd0" stroke-width="3.8"/><line x1="924.0" y1="548.1" x2="952.1" y2="572.7" stroke="#98afd0" stroke-width="3.8"/><line x1="952.1" y1="572.7" x2="980.3" y2="584.5" stroke="#98afd0" stroke-width="3.8"/><line x1="711.7" y1="280.0" x2="711.7" y2="293.5" stroke="#86a8dc" stroke-width="3.2"/><line x1="738.0" y1="293.9" x2="738.0" y2="308.9" stroke="#86a8dc" stroke-width="3.2"/><line x1="764.2" y1="307.8" x2="764.2" y2="324.3" stroke="#86a8dc" stroke-width="3.2"/><line x1="790.5" y1="321.7" x2="790.5" y2="339.7" stroke="#86a8dc" stroke-width="3.2"/><line x1="816.7" y1="335.6" x2="816.7" y2="355.1" stroke="#86a8dc" stroke-width="3.2"/><line x1="843.0" y1="349.5" x2="843.0" y2="370.5" stroke="#86a8dc" stroke-width="3.2"/><line x1="869.2" y1="363.4" x2="869.2" y2="385.9" stroke="#86a8dc" stroke-width="3.2"/><line x1="895.5" y1="377.3" x2="895.5" y2="401.3" stroke="#86a8dc" stroke-width="3.2"/><line x1="921.7" y1="391.2" x2="921.7" y2="416.7" stroke="#86a8dc" stroke-width="3.2"/><line x1="949.9" y1="418.3" x2="949.9" y2="442.3" stroke="#86a8dc" stroke-width="3.2"/><line x1="978.0" y1="445.3" x2="978.0" y2="466.3" stroke="#86a8dc" stroke-width="3.2"/><line x1="1006.2" y1="472.4" x2="1006.2" y2="490.1" stroke="#86a8dc" stroke-width="3.2"/><line x1="1034.3" y1="499.4" x2="1034.3" y2="514.7" stroke="#86a8dc" stroke-width="3.2"/><line x1="711.7" y1="280.0" x2="738.0" y2="308.9" stroke="#86a8dc" stroke-width="3.8"/><line x1="738.0" y1="293.9" x2="764.2" y2="324.3" stroke="#86a8dc" stroke-width="3.8"/><line x1="764.2" y1="307.8" x2="790.5" y2="339.7" stroke="#86a8dc" stroke-width="3.8"/><line x1="790.5" y1="321.7" x2="816.7" y2="355.1" stroke="#86a8dc" stroke-width="3.8"/><line x1="816.7" y1="335.6" x2="843.0" y2="370.5" stroke="#86a8dc" stroke-width="3.8"/><line x1="843.0" y1="349.5" x2="869.2" y2="385.9" stroke="#86a8dc" stroke-width="3.8"/><line x1="869.2" y1="363.4" x2="895.5" y2="401.3" stroke="#86a8dc" stroke-width="3.8"/><line x1="895.5" y1="377.3" x2="921.7" y2="416.7" stroke="#86a8dc" stroke-width="3.8"/><line x1="921.7" y1="416.7" x2="949.9" y2="418.3" stroke="#86a8dc" stroke-width="3.8"/><line x1="949.9" y1="442.3" x2="978.0" y2="445.3" stroke="#86a8dc" stroke-width="3.8"/><line x1="978.0" y1="466.3" x2="1006.2" y2="472.4" stroke="#86a8dc" stroke-width="3.8"/><line x1="1006.2" y1="490.1" x2="1034.3" y2="499.4" stroke="#86a8dc" stroke-width="3.8"/><line x1="711.7" y1="280.0" x2="738.0" y2="293.9" stroke="#98afd0" stroke-width="4.0"/><line x1="738.0" y1="293.9" x2="764.2" y2="307.8" stroke="#98afd0" stroke-width="4.0"/><line x1="764.2" y1="307.8" x2="790.5" y2="321.7" stroke="#98afd0" stroke-width="4.0"/><line x1="790.5" y1="321.7" x2="816.7" y2="335.6" stroke="#98afd0" stroke-width="4.0"/><line x1="816.7" y1="335.6" x2="843.0" y2="349.5" stroke="#98afd0" stroke-width="4.0"/><line x1="843.0" y1="349.5" x2="869.2" y2="363.4" stroke="#98afd0" stroke-width="4.0"/><line x1="869.2" y1="363.4" x2="895.5" y2="377.3" stroke="#98afd0" stroke-width="4.0"/><line x1="895.5" y1="377.3" x2="921.7" y2="391.2" stroke="#98afd0" stroke-width="4.0"/><line x1="921.7" y1="391.2" x2="949.9" y2="418.3" stroke="#98afd0" stroke-width="4.0"/><line x1="949.9" y1="418.3" x2="978.0" y2="445.3" stroke="#98afd0" stroke-width="4.0"/><line x1="978.0" y1="445.3" x2="1006.2" y2="472.4" stroke="#98afd0" stroke-width="4.0"/><line x1="1006.2" y1="472.4" x2="1034.3" y2="499.4" stroke="#98afd0" stroke-width="4.0"/><line x1="1034.3" y1="499.4" x2="1062.5" y2="526.5" stroke="#98afd0" stroke-width="4.0"/><line x1="711.7" y1="293.5" x2="738.0" y2="308.9" stroke="#98afd0" stroke-width="3.8"/><line x1="738.0" y1="308.9" x2="764.2" y2="324.3" stroke="#98afd0" stroke-width="3.8"/><line x1="764.2" y1="324.3" x2="790.5" y2="339.7" stroke="#98afd0" stroke-width="3.8"/><line x1="790.5" y1="339.7" x2="816.7" y2="355.1" stroke="#98afd0" stroke-width="3.8"/><line x1="816.7" y1="355.1" x2="843.0" y2="370.5" stroke="#98afd0" stroke-width="3.8"/><line x1="843.0" y1="370.5" x2="869.2" y2="385.9" stroke="#98afd0" stroke-width="3.8"/><line x1="869.2" y1="385.9" x2="895.5" y2="401.3" stroke="#98afd0" stroke-width="3.8"/><line x1="895.5" y1="401.3" x2="921.7" y2="416.7" stroke="#98afd0" stroke-width="3.8"/><line x1="921.7" y1="416.7" x2="949.9" y2="442.3" stroke="#98afd0" stroke-width="3.8"/><line x1="949.9" y1="442.3" x2="978.0" y2="466.3" stroke="#98afd0" stroke-width="3.8"/><line x1="978.0" y1="466.3" x2="1006.2" y2="490.1" stroke="#98afd0" stroke-width="3.8"/><line x1="1006.2" y1="490.1" x2="1034.3" y2="514.7" stroke="#98afd0" stroke-width="3.8"/><line x1="1034.3" y1="514.7" x2="1062.5" y2="526.5" stroke="#98afd0" stroke-width="3.8"/><line x1="300.8" y1="570.0" x2="300.8" y2="665.0" stroke="#b7cfee" stroke-width="2.7"/><line x1="465.3" y1="452.8" x2="465.3" y2="549.0" stroke="#aab6c9" stroke-width="2.7"/><line x1="547.2" y1="395.0" x2="547.2" y2="494.0" stroke="#aab6c9" stroke-width="2.7"/><line x1="712.3" y1="280.0" x2="712.3" y2="375.0" stroke="#b7cfee" stroke-width="2.7"/><line x1="409.5" y1="540.0" x2="409.5" y2="625.0" stroke="#aab6c9" stroke-width="2.7"/><line x1="656.5" y1="364.0" x2="656.5" y2="451.0" stroke="#aab6c9" stroke-width="2.7"/><line x1="234.2" y1="617.5" x2="234.2" y2="711.7" stroke="#b7cfee" stroke-width="2.7"/><line x1="783.2" y1="230.0" x2="783.2" y2="323.3" stroke="#b7cfee" stroke-width="3.2"/><line x1="203.3" y1="640.0" x2="203.3" y2="733.7" stroke="#aab6c9" stroke-width="1.9"/><line x1="822.5" y1="203.0" x2="822.5" y2="295.8" stroke="#aab6c9" stroke-width="1.9"/><line x1="1172.2" y1="449.0" x2="1172.2" y2="543.3" stroke="#aab6c9" stroke-width="1.3"/><line x1="553.3" y1="887.0" x2="553.3" y2="981.4" stroke="#aab6c9" stroke-width="1.3"/><line x1="234.7" y1="665.0" x2="783.1" y2="278.0" stroke="#b7cfee" stroke-width="3.7"/><line x1="203.3" y1="638.3" x2="822.5" y2="200.8" stroke="#b7cfee" stroke-width="2.9"/><line x1="203.3" y1="638.3" x2="308.3" y2="696.7" stroke="#c7d9f1" stroke-width="9.1"/><line x1="203.3" y1="638.3" x2="308.3" y2="696.7" stroke="#afc4e2" stroke-width="4.4"/><line x1="203.3" y1="638.3" x2="308.3" y2="696.7" stroke="#c7d9f1" stroke-width="3.2"/><line x1="308.3" y1="696.7" x2="412.0" y2="750.0" stroke="#c7d9f1" stroke-width="9.1"/><line x1="308.3" y1="696.7" x2="412.0" y2="750.0" stroke="#afc4e2" stroke-width="4.4"/><line x1="308.3" y1="696.7" x2="412.0" y2="750.0" stroke="#c7d9f1" stroke-width="3.2"/><line x1="311.7" y1="659.0" x2="311.7" y2="766.7" stroke="#b7cfee" stroke-width="2.7"/><line x1="342.5" y1="637.5" x2="342.5" y2="745.0" stroke="#b7cfee" stroke-width="1.7"/><line x1="356.7" y1="707.5" x2="356.7" y2="825.0" stroke="#b7cfee" stroke-width="2.7"/><line x1="412.5" y1="750.0" x2="412.5" y2="881.7" stroke="#b7cfee" stroke-width="3.2"/><line x1="425.0" y1="742.5" x2="425.0" y2="872.5" stroke="#b7cfee" stroke-width="3.2"/><line x1="459.5" y1="796.0" x2="459.5" y2="914.5" stroke="#b7cfee" stroke-width="3.2"/><line x1="506.0" y1="841.0" x2="506.0" y2="948.0" stroke="#b7cfee" stroke-width="3.2"/><line x1="412.0" y1="750.0" x2="440.8" y2="778.0" stroke="#b7cfee" stroke-width="2.7"/><line x1="440.8" y1="778.0" x2="459.2" y2="795.8" stroke="#b7cfee" stroke-width="2.7"/><line x1="459.2" y1="795.8" x2="468.7" y2="805.0" stroke="#b7cfee" stroke-width="2.7"/><line x1="468.7" y1="805.0" x2="496.7" y2="832.0" stroke="#b7cfee" stroke-width="2.7"/><line x1="496.7" y1="832.0" x2="506.2" y2="841.2" stroke="#b7cfee" stroke-width="2.7"/><line x1="506.2" y1="841.2" x2="525.0" y2="859.2" stroke="#b7cfee" stroke-width="2.7"/><line x1="525.0" y1="859.2" x2="553.0" y2="886.3" stroke="#b7cfee" stroke-width="2.7"/><line x1="236.0" y1="632.0" x2="308.0" y2="683.0" stroke="#aab6c9" stroke-width="1.7"/><line x1="236.0" y1="679.5" x2="311.7" y2="733.0" stroke="#aab6c9" stroke-width="1.7"/><line x1="342.5" y1="665.0" x2="314.0" y2="683.0" stroke="#aab6c9" stroke-width="1.7"/><line x1="342.5" y1="712.5" x2="314.0" y2="732.0" stroke="#aab6c9" stroke-width="1.7"/><line x1="356.7" y1="744.0" x2="425.0" y2="792.0" stroke="#b7cfee" stroke-width="2.7"/><line x1="356.7" y1="791.7" x2="425.0" y2="840.8" stroke="#b7cfee" stroke-width="2.7"/><line x1="425.0" y1="840.8" x2="459.5" y2="861.0" stroke="#b7cfee" stroke-width="2.7"/><line x1="459.5" y1="861.0" x2="506.2" y2="893.0" stroke="#b7cfee" stroke-width="2.7"/><line x1="412.5" y1="801.7" x2="425.0" y2="792.0" stroke="#aab6c9" stroke-width="0.9"/><line x1="412.5" y1="849.0" x2="425.0" y2="840.8" stroke="#aab6c9" stroke-width="0.9"/><line x1="553.0" y1="886.3" x2="651.2" y2="816.5" stroke="#b7cfee" stroke-width="2.7"/><line x1="505.3" y1="896.7" x2="651.2" y2="816.5" stroke="#b7cfee" stroke-width="2.7"/><line x1="651.2" y1="816.5" x2="733.4" y2="758.5" stroke="#b7cfee" stroke-width="4.7"/><line x1="733.4" y1="758.5" x2="815.6" y2="700.5" stroke="#b7cfee" stroke-width="3.1"/><line x1="815.6" y1="700.5" x2="897.7" y2="642.5" stroke="#b7cfee" stroke-width="3.1"/><line x1="897.7" y1="642.5" x2="979.9" y2="584.5" stroke="#b7cfee" stroke-width="3.1"/><line x1="979.9" y1="584.5" x2="1062.1" y2="526.5" stroke="#b7cfee" stroke-width="4.7"/><line x1="1062.1" y1="526.5" x2="1172.2" y2="448.3" stroke="#b7cfee" stroke-width="2.7"/><line x1="651.2" y1="816.5" x2="651.2" y2="911.5" stroke="#b7cfee" stroke-width="3.2"/><line x1="733.4" y1="758.5" x2="733.4" y2="853.5" stroke="#b7cfee" stroke-width="3.2"/><line x1="815.6" y1="700.5" x2="815.6" y2="795.5" stroke="#b7cfee" stroke-width="3.2"/><line x1="897.7" y1="642.5" x2="897.7" y2="737.5" stroke="#b7cfee" stroke-width="3.2"/><line x1="979.9" y1="584.5" x2="979.9" y2="679.5" stroke="#b7cfee" stroke-width="3.2"/><line x1="1062.1" y1="526.5" x2="1062.1" y2="621.5" stroke="#b7cfee" stroke-width="3.2"/><line x1="603.3" y1="831.7" x2="650.8" y2="866.7" stroke="#b7cfee" stroke-width="2.7"/><line x1="650.8" y1="866.7" x2="1061.3" y2="575.0" stroke="#b7cfee" stroke-width="2.7"/><line x1="603.3" y1="789.0" x2="603.3" y2="878.3" stroke="#b7cfee" stroke-width="3.2"/><line x1="1014.6" y1="498.3" x2="1014.6" y2="587.0" stroke="#b7cfee" stroke-width="3.2"/><line x1="1014.7" y1="542.5" x2="1125.0" y2="462.0" stroke="#b7cfee" stroke-width="3.2"/><line x1="1014.6" y1="542.5" x2="1061.5" y2="575.0" stroke="#b7cfee" stroke-width="2.7"/><line x1="822.5" y1="200.8" x2="926.7" y2="257.2" stroke="#c7d9f1" stroke-width="9.1"/><line x1="822.5" y1="200.8" x2="926.7" y2="257.2" stroke="#afc4e2" stroke-width="4.4"/><line x1="822.5" y1="200.8" x2="926.7" y2="257.2" stroke="#c7d9f1" stroke-width="3.2"/><line x1="926.7" y1="257.2" x2="1031.9" y2="313.1" stroke="#c7d9f1" stroke-width="9.1"/><line x1="926.7" y1="257.2" x2="1031.9" y2="313.1" stroke="#afc4e2" stroke-width="4.4"/><line x1="926.7" y1="257.2" x2="1031.9" y2="313.1" stroke="#c7d9f1" stroke-width="3.2"/><line x1="1031.9" y1="313.1" x2="1060.0" y2="340.6" stroke="#b7cfee" stroke-width="2.7"/><line x1="1060.0" y1="340.6" x2="1078.1" y2="358.4" stroke="#b7cfee" stroke-width="2.7"/><line x1="1078.1" y1="358.4" x2="1087.8" y2="367.5" stroke="#b7cfee" stroke-width="2.7"/><line x1="1087.8" y1="367.5" x2="1116.0" y2="394.4" stroke="#b7cfee" stroke-width="2.7"/><line x1="1116.0" y1="394.4" x2="1125.6" y2="403.8" stroke="#b7cfee" stroke-width="2.7"/><line x1="1125.6" y1="403.8" x2="1143.8" y2="420.8" stroke="#b7cfee" stroke-width="2.7"/><line x1="1143.8" y1="420.8" x2="1172.2" y2="448.3" stroke="#b7cfee" stroke-width="2.7"/><line x1="1031.7" y1="313.0" x2="1031.7" y2="444.2" stroke="#b7cfee" stroke-width="4.2"/><line x1="1078.2" y1="358.4" x2="1078.2" y2="477.5" stroke="#b7cfee" stroke-width="3.2"/><line x1="1125.3" y1="403.8" x2="1125.3" y2="510.0" stroke="#b7cfee" stroke-width="3.2"/><line x1="830.3" y1="292.5" x2="830.3" y2="400.0" stroke="#b7cfee" stroke-width="2.7"/><line x1="860.8" y1="271.0" x2="860.8" y2="380.0" stroke="#b7cfee" stroke-width="3.2"/><line x1="936.7" y1="297.2" x2="936.7" y2="414.2" stroke="#b7cfee" stroke-width="3.2"/><line x1="1005.0" y1="333.0" x2="1005.0" y2="462.5" stroke="#b7cfee" stroke-width="3.2"/><line x1="783.1" y1="244.0" x2="860.8" y2="298.0" stroke="#aab6c9" stroke-width="1.7"/><line x1="783.1" y1="290.6" x2="860.8" y2="346.0" stroke="#aab6c9" stroke-width="1.7"/><line x1="830.3" y1="319.4" x2="936.7" y2="334.2" stroke="#b7cfee" stroke-width="2.7"/><line x1="936.7" y1="334.2" x2="1005.0" y2="381.7" stroke="#b7cfee" stroke-width="2.7"/><line x1="895.0" y1="376.7" x2="936.7" y2="381.7" stroke="#b7cfee" stroke-width="2.7"/><line x1="936.7" y1="381.7" x2="1005.0" y2="429.5" stroke="#b7cfee" stroke-width="2.7"/><line x1="1031.7" y1="390.0" x2="1078.3" y2="423.3" stroke="#b7cfee" stroke-width="2.7"/><line x1="1078.3" y1="423.3" x2="1125.0" y2="456.7" stroke="#b7cfee" stroke-width="2.7"/><line x1="920.0" y1="417.5" x2="948.3" y2="418.3" stroke="#b7cfee" stroke-width="2.7"/><line x1="833.0" y1="317.5" x2="858.0" y2="300.0" stroke="#aab6c9" stroke-width="1.1"/><line x1="848.8" y1="353.8" x2="858.0" y2="347.5" stroke="#aab6c9" stroke-width="1.1"/><line x1="1005.0" y1="381.7" x2="1031.7" y2="364.0" stroke="#aab6c9" stroke-width="1.1"/><line x1="1005.0" y1="429.5" x2="1031.7" y2="411.7" stroke="#aab6c9" stroke-width="1.1"/><line x1="300.8" y1="570.0" x2="300.8" y2="583.5" stroke="#a9c6f0" stroke-width="1.9"/><line x1="327.1" y1="583.9" x2="327.1" y2="598.9" stroke="#a9c6f0" stroke-width="1.9"/><line x1="353.3" y1="597.8" x2="353.3" y2="614.3" stroke="#a9c6f0" stroke-width="1.9"/><line x1="379.6" y1="611.7" x2="379.6" y2="629.7" stroke="#a9c6f0" stroke-width="1.9"/><line x1="405.8" y1="625.6" x2="405.8" y2="645.1" stroke="#a9c6f0" stroke-width="1.9"/><line x1="432.1" y1="639.5" x2="432.1" y2="660.5" stroke="#a9c6f0" stroke-width="1.9"/><line x1="458.3" y1="653.4" x2="458.3" y2="675.9" stroke="#a9c6f0" stroke-width="1.9"/><line x1="484.6" y1="667.3" x2="484.6" y2="691.3" stroke="#a9c6f0" stroke-width="1.9"/><line x1="510.8" y1="681.2" x2="510.8" y2="706.7" stroke="#a9c6f0" stroke-width="1.9"/><line x1="539.0" y1="708.3" x2="539.0" y2="732.3" stroke="#a9c6f0" stroke-width="1.9"/><line x1="567.1" y1="735.3" x2="567.1" y2="756.3" stroke="#a9c6f0" stroke-width="1.9"/><line x1="595.2" y1="762.4" x2="595.2" y2="780.1" stroke="#a9c6f0" stroke-width="1.9"/><line x1="623.4" y1="789.4" x2="623.4" y2="804.7" stroke="#a9c6f0" stroke-width="1.9"/><line x1="300.8" y1="570.0" x2="327.1" y2="598.9" stroke="#a9c6f0" stroke-width="2.5"/><line x1="327.1" y1="583.9" x2="353.3" y2="614.3" stroke="#a9c6f0" stroke-width="2.5"/><line x1="353.3" y1="597.8" x2="379.6" y2="629.7" stroke="#a9c6f0" stroke-width="2.5"/><line x1="379.6" y1="611.7" x2="405.8" y2="645.1" stroke="#a9c6f0" stroke-width="2.5"/><line x1="405.8" y1="625.6" x2="432.1" y2="660.5" stroke="#a9c6f0" stroke-width="2.5"/><line x1="432.1" y1="639.5" x2="458.3" y2="675.9" stroke="#a9c6f0" stroke-width="2.5"/><line x1="458.3" y1="653.4" x2="484.6" y2="691.3" stroke="#a9c6f0" stroke-width="2.5"/><line x1="484.6" y1="667.3" x2="510.8" y2="706.7" stroke="#a9c6f0" stroke-width="2.5"/><line x1="510.8" y1="706.7" x2="539.0" y2="708.3" stroke="#a9c6f0" stroke-width="2.5"/><line x1="539.0" y1="732.3" x2="567.1" y2="735.3" stroke="#a9c6f0" stroke-width="2.5"/><line x1="567.1" y1="756.3" x2="595.2" y2="762.4" stroke="#a9c6f0" stroke-width="2.5"/><line x1="595.2" y1="780.1" x2="623.4" y2="789.4" stroke="#a9c6f0" stroke-width="2.5"/><line x1="300.8" y1="570.0" x2="327.1" y2="583.9" stroke="#bdd0ec" stroke-width="2.7"/><line x1="327.1" y1="583.9" x2="353.3" y2="597.8" stroke="#bdd0ec" stroke-width="2.7"/><line x1="353.3" y1="597.8" x2="379.6" y2="611.7" stroke="#bdd0ec" stroke-width="2.7"/><line x1="379.6" y1="611.7" x2="405.8" y2="625.6" stroke="#bdd0ec" stroke-width="2.7"/><line x1="405.8" y1="625.6" x2="432.1" y2="639.5" stroke="#bdd0ec" stroke-width="2.7"/><line x1="432.1" y1="639.5" x2="458.3" y2="653.4" stroke="#bdd0ec" stroke-width="2.7"/><line x1="458.3" y1="653.4" x2="484.6" y2="667.3" stroke="#bdd0ec" stroke-width="2.7"/><line x1="484.6" y1="667.3" x2="510.8" y2="681.2" stroke="#bdd0ec" stroke-width="2.7"/><line x1="510.8" y1="681.2" x2="539.0" y2="708.3" stroke="#bdd0ec" stroke-width="2.7"/><line x1="539.0" y1="708.3" x2="567.1" y2="735.3" stroke="#bdd0ec" stroke-width="2.7"/><line x1="567.1" y1="735.3" x2="595.2" y2="762.4" stroke="#bdd0ec" stroke-width="2.7"/><line x1="595.2" y1="762.4" x2="623.4" y2="789.4" stroke="#bdd0ec" stroke-width="2.7"/><line x1="623.4" y1="789.4" x2="651.5" y2="816.5" stroke="#bdd0ec" stroke-width="2.7"/><line x1="300.8" y1="583.5" x2="327.1" y2="598.9" stroke="#bdd0ec" stroke-width="2.5"/><line x1="327.1" y1="598.9" x2="353.3" y2="614.3" stroke="#bdd0ec" stroke-width="2.5"/><line x1="353.3" y1="614.3" x2="379.6" y2="629.7" stroke="#bdd0ec" stroke-width="2.5"/><line x1="379.6" y1="629.7" x2="405.8" y2="645.1" stroke="#bdd0ec" stroke-width="2.5"/><line x1="405.8" y1="645.1" x2="432.1" y2="660.5" stroke="#bdd0ec" stroke-width="2.5"/><line x1="432.1" y1="660.5" x2="458.3" y2="675.9" stroke="#bdd0ec" stroke-width="2.5"/><line x1="458.3" y1="675.9" x2="484.6" y2="691.3" stroke="#bdd0ec" stroke-width="2.5"/><line x1="484.6" y1="691.3" x2="510.8" y2="706.7" stroke="#bdd0ec" stroke-width="2.5"/><line x1="510.8" y1="706.7" x2="539.0" y2="732.3" stroke="#bdd0ec" stroke-width="2.5"/><line x1="539.0" y1="732.3" x2="567.1" y2="756.3" stroke="#bdd0ec" stroke-width="2.5"/><line x1="567.1" y1="756.3" x2="595.2" y2="780.1" stroke="#bdd0ec" stroke-width="2.5"/><line x1="595.2" y1="780.1" x2="623.4" y2="804.7" stroke="#bdd0ec" stroke-width="2.5"/><line x1="623.4" y1="804.7" x2="651.5" y2="816.5" stroke="#bdd0ec" stroke-width="2.5"/><line x1="383.0" y1="512.0" x2="383.0" y2="525.5" stroke="#a9c6f0" stroke-width="1.9"/><line x1="409.2" y1="525.9" x2="409.2" y2="540.9" stroke="#a9c6f0" stroke-width="1.9"/><line x1="435.5" y1="539.8" x2="435.5" y2="556.3" stroke="#a9c6f0" stroke-width="1.9"/><line x1="461.7" y1="553.7" x2="461.7" y2="571.7" stroke="#a9c6f0" stroke-width="1.9"/><line x1="488.0" y1="567.6" x2="488.0" y2="587.1" stroke="#a9c6f0" stroke-width="1.9"/><line x1="514.2" y1="581.5" x2="514.2" y2="602.5" stroke="#a9c6f0" stroke-width="1.9"/><line x1="540.5" y1="595.4" x2="540.5" y2="617.9" stroke="#a9c6f0" stroke-width="1.9"/><line x1="566.7" y1="609.3" x2="566.7" y2="633.3" stroke="#a9c6f0" stroke-width="1.9"/><line x1="593.0" y1="623.2" x2="593.0" y2="648.7" stroke="#a9c6f0" stroke-width="1.9"/><line x1="621.1" y1="650.3" x2="621.1" y2="674.3" stroke="#a9c6f0" stroke-width="1.9"/><line x1="649.3" y1="677.3" x2="649.3" y2="698.3" stroke="#a9c6f0" stroke-width="1.9"/><line x1="677.4" y1="704.4" x2="677.4" y2="722.1" stroke="#a9c6f0" stroke-width="1.9"/><line x1="705.6" y1="731.4" x2="705.6" y2="746.7" stroke="#a9c6f0" stroke-width="1.9"/><line x1="383.0" y1="512.0" x2="409.2" y2="540.9" stroke="#a9c6f0" stroke-width="2.5"/><line x1="409.2" y1="525.9" x2="435.5" y2="556.3" stroke="#a9c6f0" stroke-width="2.5"/><line x1="435.5" y1="539.8" x2="461.7" y2="571.7" stroke="#a9c6f0" stroke-width="2.5"/><line x1="461.7" y1="553.7" x2="488.0" y2="587.1" stroke="#a9c6f0" stroke-width="2.5"/><line x1="488.0" y1="567.6" x2="514.2" y2="602.5" stroke="#a9c6f0" stroke-width="2.5"/><line x1="514.2" y1="581.5" x2="540.5" y2="617.9" stroke="#a9c6f0" stroke-width="2.5"/><line x1="540.5" y1="595.4" x2="566.7" y2="633.3" stroke="#a9c6f0" stroke-width="2.5"/><line x1="566.7" y1="609.3" x2="593.0" y2="648.7" stroke="#a9c6f0" stroke-width="2.5"/><line x1="593.0" y1="648.7" x2="621.1" y2="650.3" stroke="#a9c6f0" stroke-width="2.5"/><line x1="621.1" y1="674.3" x2="649.3" y2="677.3" stroke="#a9c6f0" stroke-width="2.5"/><line x1="649.3" y1="698.3" x2="677.4" y2="704.4" stroke="#a9c6f0" stroke-width="2.5"/><line x1="677.4" y1="722.1" x2="705.6" y2="731.4" stroke="#a9c6f0" stroke-width="2.5"/><line x1="383.0" y1="512.0" x2="409.2" y2="525.9" stroke="#bdd0ec" stroke-width="2.7"/><line x1="409.2" y1="525.9" x2="435.5" y2="539.8" stroke="#bdd0ec" stroke-width="2.7"/><line x1="435.5" y1="539.8" x2="461.7" y2="553.7" stroke="#bdd0ec" stroke-width="2.7"/><line x1="461.7" y1="553.7" x2="488.0" y2="567.6" stroke="#bdd0ec" stroke-width="2.7"/><line x1="488.0" y1="567.6" x2="514.2" y2="581.5" stroke="#bdd0ec" stroke-width="2.7"/><line x1="514.2" y1="581.5" x2="540.5" y2="595.4" stroke="#bdd0ec" stroke-width="2.7"/><line x1="540.5" y1="595.4" x2="566.7" y2="609.3" stroke="#bdd0ec" stroke-width="2.7"/><line x1="566.7" y1="609.3" x2="593.0" y2="623.2" stroke="#bdd0ec" stroke-width="2.7"/><line x1="593.0" y1="623.2" x2="621.1" y2="650.3" stroke="#bdd0ec" stroke-width="2.7"/><line x1="621.1" y1="650.3" x2="649.3" y2="677.3" stroke="#bdd0ec" stroke-width="2.7"/><line x1="649.3" y1="677.3" x2="677.4" y2="704.4" stroke="#bdd0ec" stroke-width="2.7"/><line x1="677.4" y1="704.4" x2="705.6" y2="731.4" stroke="#bdd0ec" stroke-width="2.7"/><line x1="705.6" y1="731.4" x2="733.7" y2="758.5" stroke="#bdd0ec" stroke-width="2.7"/><line x1="383.0" y1="525.5" x2="409.2" y2="540.9" stroke="#bdd0ec" stroke-width="2.5"/><line x1="409.2" y1="540.9" x2="435.5" y2="556.3" stroke="#bdd0ec" stroke-width="2.5"/><line x1="435.5" y1="556.3" x2="461.7" y2="571.7" stroke="#bdd0ec" stroke-width="2.5"/><line x1="461.7" y1="571.7" x2="488.0" y2="587.1" stroke="#bdd0ec" stroke-width="2.5"/><line x1="488.0" y1="587.1" x2="514.2" y2="602.5" stroke="#bdd0ec" stroke-width="2.5"/><line x1="514.2" y1="602.5" x2="540.5" y2="617.9" stroke="#bdd0ec" stroke-width="2.5"/><line x1="540.5" y1="617.9" x2="566.7" y2="633.3" stroke="#bdd0ec" stroke-width="2.5"/><line x1="566.7" y1="633.3" x2="593.0" y2="648.7" stroke="#bdd0ec" stroke-width="2.5"/><line x1="593.0" y1="648.7" x2="621.1" y2="674.3" stroke="#bdd0ec" stroke-width="2.5"/><line x1="621.1" y1="674.3" x2="649.3" y2="698.3" stroke="#bdd0ec" stroke-width="2.5"/><line x1="649.3" y1="698.3" x2="677.4" y2="722.1" stroke="#bdd0ec" stroke-width="2.5"/><line x1="677.4" y1="722.1" x2="705.6" y2="746.7" stroke="#bdd0ec" stroke-width="2.5"/><line x1="705.6" y1="746.7" x2="733.7" y2="758.5" stroke="#bdd0ec" stroke-width="2.5"/><line x1="465.2" y1="454.0" x2="465.2" y2="467.5" stroke="#a9c6f0" stroke-width="1.9"/><line x1="491.4" y1="467.9" x2="491.4" y2="482.9" stroke="#a9c6f0" stroke-width="1.9"/><line x1="517.7" y1="481.8" x2="517.7" y2="498.3" stroke="#a9c6f0" stroke-width="1.9"/><line x1="543.9" y1="495.7" x2="543.9" y2="513.7" stroke="#a9c6f0" stroke-width="1.9"/><line x1="570.2" y1="509.6" x2="570.2" y2="529.1" stroke="#a9c6f0" stroke-width="1.9"/><line x1="596.4" y1="523.5" x2="596.4" y2="544.5" stroke="#a9c6f0" stroke-width="1.9"/><line x1="622.7" y1="537.4" x2="622.7" y2="559.9" stroke="#a9c6f0" stroke-width="1.9"/><line x1="648.9" y1="551.3" x2="648.9" y2="575.3" stroke="#a9c6f0" stroke-width="1.9"/><line x1="675.2" y1="565.2" x2="675.2" y2="590.7" stroke="#a9c6f0" stroke-width="1.9"/><line x1="703.3" y1="592.3" x2="703.3" y2="616.3" stroke="#a9c6f0" stroke-width="1.9"/><line x1="731.5" y1="619.3" x2="731.5" y2="640.3" stroke="#a9c6f0" stroke-width="1.9"/><line x1="759.6" y1="646.4" x2="759.6" y2="664.1" stroke="#a9c6f0" stroke-width="1.9"/><line x1="787.8" y1="673.4" x2="787.8" y2="688.7" stroke="#a9c6f0" stroke-width="1.9"/><line x1="465.2" y1="454.0" x2="491.4" y2="482.9" stroke="#a9c6f0" stroke-width="2.5"/><line x1="491.4" y1="467.9" x2="517.7" y2="498.3" stroke="#a9c6f0" stroke-width="2.5"/><line x1="517.7" y1="481.8" x2="543.9" y2="513.7" stroke="#a9c6f0" stroke-width="2.5"/><line x1="543.9" y1="495.7" x2="570.2" y2="529.1" stroke="#a9c6f0" stroke-width="2.5"/><line x1="570.2" y1="509.6" x2="596.4" y2="544.5" stroke="#a9c6f0" stroke-width="2.5"/><line x1="596.4" y1="523.5" x2="622.7" y2="559.9" stroke="#a9c6f0" stroke-width="2.5"/><line x1="622.7" y1="537.4" x2="648.9" y2="575.3" stroke="#a9c6f0" stroke-width="2.5"/><line x1="648.9" y1="551.3" x2="675.2" y2="590.7" stroke="#a9c6f0" stroke-width="2.5"/><line x1="675.2" y1="590.7" x2="703.3" y2="592.3" stroke="#a9c6f0" stroke-width="2.5"/><line x1="703.3" y1="616.3" x2="731.5" y2="619.3" stroke="#a9c6f0" stroke-width="2.5"/><line x1="731.5" y1="640.3" x2="759.6" y2="646.4" stroke="#a9c6f0" stroke-width="2.5"/><line x1="759.6" y1="664.1" x2="787.8" y2="673.4" stroke="#a9c6f0" stroke-width="2.5"/><line x1="465.2" y1="454.0" x2="491.4" y2="467.9" stroke="#bdd0ec" stroke-width="2.7"/><line x1="491.4" y1="467.9" x2="517.7" y2="481.8" stroke="#bdd0ec" stroke-width="2.7"/><line x1="517.7" y1="481.8" x2="543.9" y2="495.7" stroke="#bdd0ec" stroke-width="2.7"/><line x1="543.9" y1="495.7" x2="570.2" y2="509.6" stroke="#bdd0ec" stroke-width="2.7"/><line x1="570.2" y1="509.6" x2="596.4" y2="523.5" stroke="#bdd0ec" stroke-width="2.7"/><line x1="596.4" y1="523.5" x2="622.7" y2="537.4" stroke="#bdd0ec" stroke-width="2.7"/><line x1="622.7" y1="537.4" x2="648.9" y2="551.3" stroke="#bdd0ec" stroke-width="2.7"/><line x1="648.9" y1="551.3" x2="675.2" y2="565.2" stroke="#bdd0ec" stroke-width="2.7"/><line x1="675.2" y1="565.2" x2="703.3" y2="592.3" stroke="#bdd0ec" stroke-width="2.7"/><line x1="703.3" y1="592.3" x2="731.5" y2="619.3" stroke="#bdd0ec" stroke-width="2.7"/><line x1="731.5" y1="619.3" x2="759.6" y2="646.4" stroke="#bdd0ec" stroke-width="2.7"/><line x1="759.6" y1="646.4" x2="787.8" y2="673.4" stroke="#bdd0ec" stroke-width="2.7"/><line x1="787.8" y1="673.4" x2="815.9" y2="700.5" stroke="#bdd0ec" stroke-width="2.7"/><line x1="465.2" y1="467.5" x2="491.4" y2="482.9" stroke="#bdd0ec" stroke-width="2.5"/><line x1="491.4" y1="482.9" x2="517.7" y2="498.3" stroke="#bdd0ec" stroke-width="2.5"/><line x1="517.7" y1="498.3" x2="543.9" y2="513.7" stroke="#bdd0ec" stroke-width="2.5"/><line x1="543.9" y1="513.7" x2="570.2" y2="529.1" stroke="#bdd0ec" stroke-width="2.5"/><line x1="570.2" y1="529.1" x2="596.4" y2="544.5" stroke="#bdd0ec" stroke-width="2.5"/><line x1="596.4" y1="544.5" x2="622.7" y2="559.9" stroke="#bdd0ec" stroke-width="2.5"/><line x1="622.7" y1="559.9" x2="648.9" y2="575.3" stroke="#bdd0ec" stroke-width="2.5"/><line x1="648.9" y1="575.3" x2="675.2" y2="590.7" stroke="#bdd0ec" stroke-width="2.5"/><line x1="675.2" y1="590.7" x2="703.3" y2="616.3" stroke="#bdd0ec" stroke-width="2.5"/><line x1="703.3" y1="616.3" x2="731.5" y2="640.3" stroke="#bdd0ec" stroke-width="2.5"/><line x1="731.5" y1="640.3" x2="759.6" y2="664.1" stroke="#bdd0ec" stroke-width="2.5"/><line x1="759.6" y1="664.1" x2="787.8" y2="688.7" stroke="#bdd0ec" stroke-width="2.5"/><line x1="787.8" y1="688.7" x2="815.9" y2="700.5" stroke="#bdd0ec" stroke-width="2.5"/><line x1="547.3" y1="396.0" x2="547.3" y2="409.5" stroke="#a9c6f0" stroke-width="1.9"/><line x1="573.6" y1="409.9" x2="573.6" y2="424.9" stroke="#a9c6f0" stroke-width="1.9"/><line x1="599.8" y1="423.8" x2="599.8" y2="440.3" stroke="#a9c6f0" stroke-width="1.9"/><line x1="626.1" y1="437.7" x2="626.1" y2="455.7" stroke="#a9c6f0" stroke-width="1.9"/><line x1="652.3" y1="451.6" x2="652.3" y2="471.1" stroke="#a9c6f0" stroke-width="1.9"/><line x1="678.6" y1="465.5" x2="678.6" y2="486.5" stroke="#a9c6f0" stroke-width="1.9"/><line x1="704.8" y1="479.4" x2="704.8" y2="501.9" stroke="#a9c6f0" stroke-width="1.9"/><line x1="731.1" y1="493.3" x2="731.1" y2="517.3" stroke="#a9c6f0" stroke-width="1.9"/><line x1="757.3" y1="507.2" x2="757.3" y2="532.7" stroke="#a9c6f0" stroke-width="1.9"/><line x1="785.5" y1="534.3" x2="785.5" y2="558.3" stroke="#a9c6f0" stroke-width="1.9"/><line x1="813.6" y1="561.3" x2="813.6" y2="582.3" stroke="#a9c6f0" stroke-width="1.9"/><line x1="841.8" y1="588.4" x2="841.8" y2="606.1" stroke="#a9c6f0" stroke-width="1.9"/><line x1="869.9" y1="615.4" x2="869.9" y2="630.7" stroke="#a9c6f0" stroke-width="1.9"/><line x1="547.3" y1="396.0" x2="573.6" y2="424.9" stroke="#a9c6f0" stroke-width="2.5"/><line x1="573.6" y1="409.9" x2="599.8" y2="440.3" stroke="#a9c6f0" stroke-width="2.5"/><line x1="599.8" y1="423.8" x2="626.1" y2="455.7" stroke="#a9c6f0" stroke-width="2.5"/><line x1="626.1" y1="437.7" x2="652.3" y2="471.1" stroke="#a9c6f0" stroke-width="2.5"/><line x1="652.3" y1="451.6" x2="678.6" y2="486.5" stroke="#a9c6f0" stroke-width="2.5"/><line x1="678.6" y1="465.5" x2="704.8" y2="501.9" stroke="#a9c6f0" stroke-width="2.5"/><line x1="704.8" y1="479.4" x2="731.1" y2="517.3" stroke="#a9c6f0" stroke-width="2.5"/><line x1="731.1" y1="493.3" x2="757.3" y2="532.7" stroke="#a9c6f0" stroke-width="2.5"/><line x1="757.3" y1="532.7" x2="785.5" y2="534.3" stroke="#a9c6f0" stroke-width="2.5"/><line x1="785.5" y1="558.3" x2="813.6" y2="561.3" stroke="#a9c6f0" stroke-width="2.5"/><line x1="813.6" y1="582.3" x2="841.8" y2="588.4" stroke="#a9c6f0" stroke-width="2.5"/><line x1="841.8" y1="606.1" x2="869.9" y2="615.4" stroke="#a9c6f0" stroke-width="2.5"/><line x1="547.3" y1="396.0" x2="573.6" y2="409.9" stroke="#bdd0ec" stroke-width="2.7"/><line x1="573.6" y1="409.9" x2="599.8" y2="423.8" stroke="#bdd0ec" stroke-width="2.7"/><line x1="599.8" y1="423.8" x2="626.1" y2="437.7" stroke="#bdd0ec" stroke-width="2.7"/><line x1="626.1" y1="437.7" x2="652.3" y2="451.6" stroke="#bdd0ec" stroke-width="2.7"/><line x1="652.3" y1="451.6" x2="678.6" y2="465.5" stroke="#bdd0ec" stroke-width="2.7"/><line x1="678.6" y1="465.5" x2="704.8" y2="479.4" stroke="#bdd0ec" stroke-width="2.7"/><line x1="704.8" y1="479.4" x2="731.1" y2="493.3" stroke="#bdd0ec" stroke-width="2.7"/><line x1="731.1" y1="493.3" x2="757.3" y2="507.2" stroke="#bdd0ec" stroke-width="2.7"/><line x1="757.3" y1="507.2" x2="785.5" y2="534.3" stroke="#bdd0ec" stroke-width="2.7"/><line x1="785.5" y1="534.3" x2="813.6" y2="561.3" stroke="#bdd0ec" stroke-width="2.7"/><line x1="813.6" y1="561.3" x2="841.8" y2="588.4" stroke="#bdd0ec" stroke-width="2.7"/><line x1="841.8" y1="588.4" x2="869.9" y2="615.4" stroke="#bdd0ec" stroke-width="2.7"/><line x1="869.9" y1="615.4" x2="898.1" y2="642.5" stroke="#bdd0ec" stroke-width="2.7"/><line x1="547.3" y1="409.5" x2="573.6" y2="424.9" stroke="#bdd0ec" stroke-width="2.5"/><line x1="573.6" y1="424.9" x2="599.8" y2="440.3" stroke="#bdd0ec" stroke-width="2.5"/><line x1="599.8" y1="440.3" x2="626.1" y2="455.7" stroke="#bdd0ec" stroke-width="2.5"/><line x1="626.1" y1="455.7" x2="652.3" y2="471.1" stroke="#bdd0ec" stroke-width="2.5"/><line x1="652.3" y1="471.1" x2="678.6" y2="486.5" stroke="#bdd0ec" stroke-width="2.5"/><line x1="678.6" y1="486.5" x2="704.8" y2="501.9" stroke="#bdd0ec" stroke-width="2.5"/><line x1="704.8" y1="501.9" x2="731.1" y2="517.3" stroke="#bdd0ec" stroke-width="2.5"/><line x1="731.1" y1="517.3" x2="757.3" y2="532.7" stroke="#bdd0ec" stroke-width="2.5"/><line x1="757.3" y1="532.7" x2="785.5" y2="558.3" stroke="#bdd0ec" stroke-width="2.5"/><line x1="785.5" y1="558.3" x2="813.6" y2="582.3" stroke="#bdd0ec" stroke-width="2.5"/><line x1="813.6" y1="582.3" x2="841.8" y2="606.1" stroke="#bdd0ec" stroke-width="2.5"/><line x1="841.8" y1="606.1" x2="869.9" y2="630.7" stroke="#bdd0ec" stroke-width="2.5"/><line x1="869.9" y1="630.7" x2="898.1" y2="642.5" stroke="#bdd0ec" stroke-width="2.5"/><line x1="629.5" y1="338.0" x2="629.5" y2="351.5" stroke="#a9c6f0" stroke-width="1.9"/><line x1="655.8" y1="351.9" x2="655.8" y2="366.9" stroke="#a9c6f0" stroke-width="1.9"/><line x1="682.0" y1="365.8" x2="682.0" y2="382.3" stroke="#a9c6f0" stroke-width="1.9"/><line x1="708.3" y1="379.7" x2="708.3" y2="397.7" stroke="#a9c6f0" stroke-width="1.9"/><line x1="734.5" y1="393.6" x2="734.5" y2="413.1" stroke="#a9c6f0" stroke-width="1.9"/><line x1="760.8" y1="407.5" x2="760.8" y2="428.5" stroke="#a9c6f0" stroke-width="1.9"/><line x1="787.0" y1="421.4" x2="787.0" y2="443.9" stroke="#a9c6f0" stroke-width="1.9"/><line x1="813.3" y1="435.3" x2="813.3" y2="459.3" stroke="#a9c6f0" stroke-width="1.9"/><line x1="839.5" y1="449.2" x2="839.5" y2="474.7" stroke="#a9c6f0" stroke-width="1.9"/><line x1="867.7" y1="476.3" x2="867.7" y2="500.3" stroke="#a9c6f0" stroke-width="1.9"/><line x1="895.8" y1="503.3" x2="895.8" y2="524.3" stroke="#a9c6f0" stroke-width="1.9"/><line x1="924.0" y1="530.4" x2="924.0" y2="548.1" stroke="#a9c6f0" stroke-width="1.9"/><line x1="952.1" y1="557.4" x2="952.1" y2="572.7" stroke="#a9c6f0" stroke-width="1.9"/><line x1="629.5" y1="338.0" x2="655.8" y2="366.9" stroke="#a9c6f0" stroke-width="2.5"/><line x1="655.8" y1="351.9" x2="682.0" y2="382.3" stroke="#a9c6f0" stroke-width="2.5"/><line x1="682.0" y1="365.8" x2="708.3" y2="397.7" stroke="#a9c6f0" stroke-width="2.5"/><line x1="708.3" y1="379.7" x2="734.5" y2="413.1" stroke="#a9c6f0" stroke-width="2.5"/><line x1="734.5" y1="393.6" x2="760.8" y2="428.5" stroke="#a9c6f0" stroke-width="2.5"/><line x1="760.8" y1="407.5" x2="787.0" y2="443.9" stroke="#a9c6f0" stroke-width="2.5"/><line x1="787.0" y1="421.4" x2="813.3" y2="459.3" stroke="#a9c6f0" stroke-width="2.5"/><line x1="813.3" y1="435.3" x2="839.5" y2="474.7" stroke="#a9c6f0" stroke-width="2.5"/><line x1="839.5" y1="474.7" x2="867.7" y2="476.3" stroke="#a9c6f0" stroke-width="2.5"/><line x1="867.7" y1="500.3" x2="895.8" y2="503.3" stroke="#a9c6f0" stroke-width="2.5"/><line x1="895.8" y1="524.3" x2="924.0" y2="530.4" stroke="#a9c6f0" stroke-width="2.5"/><line x1="924.0" y1="548.1" x2="952.1" y2="557.4" stroke="#a9c6f0" stroke-width="2.5"/><line x1="629.5" y1="338.0" x2="655.8" y2="351.9" stroke="#bdd0ec" stroke-width="2.7"/><line x1="655.8" y1="351.9" x2="682.0" y2="365.8" stroke="#bdd0ec" stroke-width="2.7"/><line x1="682.0" y1="365.8" x2="708.3" y2="379.7" stroke="#bdd0ec" stroke-width="2.7"/><line x1="708.3" y1="379.7" x2="734.5" y2="393.6" stroke="#bdd0ec" stroke-width="2.7"/><line x1="734.5" y1="393.6" x2="760.8" y2="407.5" stroke="#bdd0ec" stroke-width="2.7"/><line x1="760.8" y1="407.5" x2="787.0" y2="421.4" stroke="#bdd0ec" stroke-width="2.7"/><line x1="787.0" y1="421.4" x2="813.3" y2="435.3" stroke="#bdd0ec" stroke-width="2.7"/><line x1="813.3" y1="435.3" x2="839.5" y2="449.2" stroke="#bdd0ec" stroke-width="2.7"/><line x1="839.5" y1="449.2" x2="867.7" y2="476.3" stroke="#bdd0ec" stroke-width="2.7"/><line x1="867.7" y1="476.3" x2="895.8" y2="503.3" stroke="#bdd0ec" stroke-width="2.7"/><line x1="895.8" y1="503.3" x2="924.0" y2="530.4" stroke="#bdd0ec" stroke-width="2.7"/><line x1="924.0" y1="530.4" x2="952.1" y2="557.4" stroke="#bdd0ec" stroke-width="2.7"/><line x1="952.1" y1="557.4" x2="980.3" y2="584.5" stroke="#bdd0ec" stroke-width="2.7"/><line x1="629.5" y1="351.5" x2="655.8" y2="366.9" stroke="#bdd0ec" stroke-width="2.5"/><line x1="655.8" y1="366.9" x2="682.0" y2="382.3" stroke="#bdd0ec" stroke-width="2.5"/><line x1="682.0" y1="382.3" x2="708.3" y2="397.7" stroke="#bdd0ec" stroke-width="2.5"/><line x1="708.3" y1="397.7" x2="734.5" y2="413.1" stroke="#bdd0ec" stroke-width="2.5"/><line x1="734.5" y1="413.1" x2="760.8" y2="428.5" stroke="#bdd0ec" stroke-width="2.5"/><line x1="760.8" y1="428.5" x2="787.0" y2="443.9" stroke="#bdd0ec" stroke-width="2.5"/><line x1="787.0" y1="443.9" x2="813.3" y2="459.3" stroke="#bdd0ec" stroke-width="2.5"/><line x1="813.3" y1="459.3" x2="839.5" y2="474.7" stroke="#bdd0ec" stroke-width="2.5"/><line x1="839.5" y1="474.7" x2="867.7" y2="500.3" stroke="#bdd0ec" stroke-width="2.5"/><line x1="867.7" y1="500.3" x2="895.8" y2="524.3" stroke="#bdd0ec" stroke-width="2.5"/><line x1="895.8" y1="524.3" x2="924.0" y2="548.1" stroke="#bdd0ec" stroke-width="2.5"/><line x1="924.0" y1="548.1" x2="952.1" y2="572.7" stroke="#bdd0ec" stroke-width="2.5"/><line x1="952.1" y1="572.7" x2="980.3" y2="584.5" stroke="#bdd0ec" stroke-width="2.5"/><line x1="711.7" y1="280.0" x2="711.7" y2="293.5" stroke="#a9c6f0" stroke-width="1.9"/><line x1="738.0" y1="293.9" x2="738.0" y2="308.9" stroke="#a9c6f0" stroke-width="1.9"/><line x1="764.2" y1="307.8" x2="764.2" y2="324.3" stroke="#a9c6f0" stroke-width="1.9"/><line x1="790.5" y1="321.7" x2="790.5" y2="339.7" stroke="#a9c6f0" stroke-width="1.9"/><line x1="816.7" y1="335.6" x2="816.7" y2="355.1" stroke="#a9c6f0" stroke-width="1.9"/><line x1="843.0" y1="349.5" x2="843.0" y2="370.5" stroke="#a9c6f0" stroke-width="1.9"/><line x1="869.2" y1="363.4" x2="869.2" y2="385.9" stroke="#a9c6f0" stroke-width="1.9"/><line x1="895.5" y1="377.3" x2="895.5" y2="401.3" stroke="#a9c6f0" stroke-width="1.9"/><line x1="921.7" y1="391.2" x2="921.7" y2="416.7" stroke="#a9c6f0" stroke-width="1.9"/><line x1="949.9" y1="418.3" x2="949.9" y2="442.3" stroke="#a9c6f0" stroke-width="1.9"/><line x1="978.0" y1="445.3" x2="978.0" y2="466.3" stroke="#a9c6f0" stroke-width="1.9"/><line x1="1006.2" y1="472.4" x2="1006.2" y2="490.1" stroke="#a9c6f0" stroke-width="1.9"/><line x1="1034.3" y1="499.4" x2="1034.3" y2="514.7" stroke="#a9c6f0" stroke-width="1.9"/><line x1="711.7" y1="280.0" x2="738.0" y2="308.9" stroke="#a9c6f0" stroke-width="2.5"/><line x1="738.0" y1="293.9" x2="764.2" y2="324.3" stroke="#a9c6f0" stroke-width="2.5"/><line x1="764.2" y1="307.8" x2="790.5" y2="339.7" stroke="#a9c6f0" stroke-width="2.5"/><line x1="790.5" y1="321.7" x2="816.7" y2="355.1" stroke="#a9c6f0" stroke-width="2.5"/><line x1="816.7" y1="335.6" x2="843.0" y2="370.5" stroke="#a9c6f0" stroke-width="2.5"/><line x1="843.0" y1="349.5" x2="869.2" y2="385.9" stroke="#a9c6f0" stroke-width="2.5"/><line x1="869.2" y1="363.4" x2="895.5" y2="401.3" stroke="#a9c6f0" stroke-width="2.5"/><line x1="895.5" y1="377.3" x2="921.7" y2="416.7" stroke="#a9c6f0" stroke-width="2.5"/><line x1="921.7" y1="416.7" x2="949.9" y2="418.3" stroke="#a9c6f0" stroke-width="2.5"/><line x1="949.9" y1="442.3" x2="978.0" y2="445.3" stroke="#a9c6f0" stroke-width="2.5"/><line x1="978.0" y1="466.3" x2="1006.2" y2="472.4" stroke="#a9c6f0" stroke-width="2.5"/><line x1="1006.2" y1="490.1" x2="1034.3" y2="499.4" stroke="#a9c6f0" stroke-width="2.5"/><line x1="711.7" y1="280.0" x2="738.0" y2="293.9" stroke="#bdd0ec" stroke-width="2.7"/><line x1="738.0" y1="293.9" x2="764.2" y2="307.8" stroke="#bdd0ec" stroke-width="2.7"/><line x1="764.2" y1="307.8" x2="790.5" y2="321.7" stroke="#bdd0ec" stroke-width="2.7"/><line x1="790.5" y1="321.7" x2="816.7" y2="335.6" stroke="#bdd0ec" stroke-width="2.7"/><line x1="816.7" y1="335.6" x2="843.0" y2="349.5" stroke="#bdd0ec" stroke-width="2.7"/><line x1="843.0" y1="349.5" x2="869.2" y2="363.4" stroke="#bdd0ec" stroke-width="2.7"/><line x1="869.2" y1="363.4" x2="895.5" y2="377.3" stroke="#bdd0ec" stroke-width="2.7"/><line x1="895.5" y1="377.3" x2="921.7" y2="391.2" stroke="#bdd0ec" stroke-width="2.7"/><line x1="921.7" y1="391.2" x2="949.9" y2="418.3" stroke="#bdd0ec" stroke-width="2.7"/><line x1="949.9" y1="418.3" x2="978.0" y2="445.3" stroke="#bdd0ec" stroke-width="2.7"/><line x1="978.0" y1="445.3" x2="1006.2" y2="472.4" stroke="#bdd0ec" stroke-width="2.7"/><line x1="1006.2" y1="472.4" x2="1034.3" y2="499.4" stroke="#bdd0ec" stroke-width="2.7"/><line x1="1034.3" y1="499.4" x2="1062.5" y2="526.5" stroke="#bdd0ec" stroke-width="2.7"/><line x1="711.7" y1="293.5" x2="738.0" y2="308.9" stroke="#bdd0ec" stroke-width="2.5"/><line x1="738.0" y1="308.9" x2="764.2" y2="324.3" stroke="#bdd0ec" stroke-width="2.5"/><line x1="764.2" y1="324.3" x2="790.5" y2="339.7" stroke="#bdd0ec" stroke-width="2.5"/><line x1="790.5" y1="339.7" x2="816.7" y2="355.1" stroke="#bdd0ec" stroke-width="2.5"/><line x1="816.7" y1="355.1" x2="843.0" y2="370.5" stroke="#bdd0ec" stroke-width="2.5"/><line x1="843.0" y1="370.5" x2="869.2" y2="385.9" stroke="#bdd0ec" stroke-width="2.5"/><line x1="869.2" y1="385.9" x2="895.5" y2="401.3" stroke="#bdd0ec" stroke-width="2.5"/><line x1="895.5" y1="401.3" x2="921.7" y2="416.7" stroke="#bdd0ec" stroke-width="2.5"/><line x1="921.7" y1="416.7" x2="949.9" y2="442.3" stroke="#bdd0ec" stroke-width="2.5"/><line x1="949.9" y1="442.3" x2="978.0" y2="466.3" stroke="#bdd0ec" stroke-width="2.5"/><line x1="978.0" y1="466.3" x2="1006.2" y2="490.1" stroke="#bdd0ec" stroke-width="2.5"/><line x1="1006.2" y1="490.1" x2="1034.3" y2="514.7" stroke="#bdd0ec" stroke-width="2.5"/><line x1="1034.3" y1="514.7" x2="1062.5" y2="526.5" stroke="#bdd0ec" stroke-width="2.5"/></g><g><path d="M300.8 566.8 L303.6 568.4 V571.6 L300.8 573.2 L298.0 571.6 V568.4 Z M298.0 568.4 L300.8 570.0 L303.6 568.4 M300.8 570.0 V573.2" fill="#ecc9d2" fill-opacity="0.8" stroke="#7d2434" stroke-width="1.15"/><path d="M300.8 580.3 L303.6 581.9 V585.1 L300.8 586.7 L298.0 585.1 V581.9 Z M298.0 581.9 L300.8 583.5 L303.6 581.9 M300.8 583.5 V586.7" fill="#ecc9d2" fill-opacity="0.8" stroke="#7d2434" stroke-width="1.15"/><path d="M327.1 580.7 L329.9 582.3 V585.5 L327.1 587.1 L324.2 585.5 V582.3 Z M324.2 582.3 L327.1 583.9 L329.9 582.3 M327.1 583.9 V587.1" fill="#ecc9d2" fill-opacity="0.8" stroke="#7d2434" stroke-width="1.15"/><path d="M327.1 595.7 L329.9 597.3 V600.5 L327.1 602.1 L324.2 600.5 V597.3 Z M324.2 597.3 L327.1 598.9 L329.9 597.3 M327.1 598.9 V602.1" fill="#ecc9d2" fill-opacity="0.8" stroke="#7d2434" stroke-width="1.15"/><path d="M353.3 594.6 L356.1 596.2 V599.4 L353.3 601.0 L350.5 599.4 V596.2 Z M350.5 596.2 L353.3 597.8 L356.1 596.2 M353.3 597.8 V601.0" fill="#ecc9d2" fill-opacity="0.8" stroke="#7d2434" stroke-width="1.15"/><path d="M353.3 611.1 L356.1 612.7 V615.9 L353.3 617.5 L350.5 615.9 V612.7 Z M350.5 612.7 L353.3 614.3 L356.1 612.7 M353.3 614.3 V617.5" fill="#ecc9d2" fill-opacity="0.8" stroke="#7d2434" stroke-width="1.15"/><path d="M379.6 608.5 L382.4 610.1 V613.3 L379.6 614.9 L376.8 613.3 V610.1 Z M376.8 610.1 L379.6 611.7 L382.4 610.1 M379.6 611.7 V614.9" fill="#ecc9d2" fill-opacity="0.8" stroke="#7d2434" stroke-width="1.15"/><path d="M379.6 626.5 L382.4 628.1 V631.3 L379.6 632.9 L376.8 631.3 V628.1 Z M376.8 628.1 L379.6 629.7 L382.4 628.1 M379.6 629.7 V632.9" fill="#ecc9d2" fill-opacity="0.8" stroke="#7d2434" stroke-width="1.15"/><path d="M405.8 622.4 L408.6 624.0 V627.2 L405.8 628.8 L403.0 627.2 V624.0 Z M403.0 624.0 L405.8 625.6 L408.6 624.0 M405.8 625.6 V628.8" fill="#ecc9d2" fill-opacity="0.8" stroke="#7d2434" stroke-width="1.15"/><path d="M405.8 641.9 L408.6 643.5 V646.7 L405.8 648.3 L403.0 646.7 V643.5 Z M403.0 643.5 L405.8 645.1 L408.6 643.5 M405.8 645.1 V648.3" fill="#ecc9d2" fill-opacity="0.8" stroke="#7d2434" stroke-width="1.15"/><path d="M432.1 636.3 L434.9 637.9 V641.1 L432.1 642.7 L429.2 641.1 V637.9 Z M429.2 637.9 L432.1 639.5 L434.9 637.9 M432.1 639.5 V642.7" fill="#ecc9d2" fill-opacity="0.8" stroke="#7d2434" stroke-width="1.15"/><path d="M432.1 657.3 L434.9 658.9 V662.1 L432.1 663.7 L429.2 662.1 V658.9 Z M429.2 658.9 L432.1 660.5 L434.9 658.9 M432.1 660.5 V663.7" fill="#ecc9d2" fill-opacity="0.8" stroke="#7d2434" stroke-width="1.15"/><path d="M458.3 650.2 L461.1 651.8 V655.0 L458.3 656.6 L455.5 655.0 V651.8 Z M455.5 651.8 L458.3 653.4 L461.1 651.8 M458.3 653.4 V656.6" fill="#ecc9d2" fill-opacity="0.8" stroke="#7d2434" stroke-width="1.15"/><path d="M458.3 672.7 L461.1 674.3 V677.5 L458.3 679.1 L455.5 677.5 V674.3 Z M455.5 674.3 L458.3 675.9 L461.1 674.3 M458.3 675.9 V679.1" fill="#ecc9d2" fill-opacity="0.8" stroke="#7d2434" stroke-width="1.15"/><path d="M484.6 664.1 L487.4 665.7 V668.9 L484.6 670.5 L481.8 668.9 V665.7 Z M481.8 665.7 L484.6 667.3 L487.4 665.7 M484.6 667.3 V670.5" fill="#ecc9d2" fill-opacity="0.8" stroke="#7d2434" stroke-width="1.15"/><path d="M484.6 688.1 L487.4 689.7 V692.9 L484.6 694.5 L481.8 692.9 V689.7 Z M481.8 689.7 L484.6 691.3 L487.4 689.7 M484.6 691.3 V694.5" fill="#ecc9d2" fill-opacity="0.8" stroke="#7d2434" stroke-width="1.15"/><path d="M510.8 678.0 L513.6 679.6 V682.8 L510.8 684.4 L508.0 682.8 V679.6 Z M508.0 679.6 L510.8 681.2 L513.6 679.6 M510.8 681.2 V684.4" fill="#ecc9d2" fill-opacity="0.8" stroke="#7d2434" stroke-width="1.15"/><path d="M510.8 703.5 L513.6 705.1 V708.3 L510.8 709.9 L508.0 708.3 V705.1 Z M508.0 705.1 L510.8 706.7 L513.6 705.1 M510.8 706.7 V709.9" fill="#ecc9d2" fill-opacity="0.8" stroke="#7d2434" stroke-width="1.15"/><path d="M539.0 705.0 L541.8 706.6 V709.9 L539.0 711.5 L536.2 709.9 V706.6 Z M536.2 706.6 L539.0 708.3 L541.8 706.6 M539.0 708.3 V711.5" fill="#ecc9d2" fill-opacity="0.8" stroke="#7d2434" stroke-width="1.15"/><path d="M539.0 729.0 L541.8 730.6 V733.9 L539.0 735.5 L536.2 733.9 V730.6 Z M536.2 730.6 L539.0 732.3 L541.8 730.6 M539.0 732.3 V735.5" fill="#ecc9d2" fill-opacity="0.8" stroke="#7d2434" stroke-width="1.15"/><path d="M567.1 732.1 L569.9 733.7 V736.9 L567.1 738.5 L564.3 736.9 V733.7 Z M564.3 733.7 L567.1 735.3 L569.9 733.7 M567.1 735.3 V738.5" fill="#ecc9d2" fill-opacity="0.8" stroke="#7d2434" stroke-width="1.15"/><path d="M567.1 753.1 L569.9 754.7 V757.9 L567.1 759.5 L564.3 757.9 V754.7 Z M564.3 754.7 L567.1 756.3 L569.9 754.7 M567.1 756.3 V759.5" fill="#ecc9d2" fill-opacity="0.8" stroke="#7d2434" stroke-width="1.15"/><path d="M595.2 759.2 L598.0 760.8 V764.0 L595.2 765.6 L592.5 764.0 V760.8 Z M592.5 760.8 L595.2 762.4 L598.0 760.8 M595.2 762.4 V765.6" fill="#ecc9d2" fill-opacity="0.8" stroke="#7d2434" stroke-width="1.15"/><path d="M595.2 776.9 L598.0 778.5 V781.7 L595.2 783.3 L592.5 781.7 V778.5 Z M592.5 778.5 L595.2 780.1 L598.0 778.5 M595.2 780.1 V783.3" fill="#ecc9d2" fill-opacity="0.8" stroke="#7d2434" stroke-width="1.15"/><path d="M623.4 786.2 L626.2 787.8 V791.1 L623.4 792.7 L620.6 791.1 V787.8 Z M620.6 787.8 L623.4 789.4 L626.2 787.8 M623.4 789.4 V792.7" fill="#ecc9d2" fill-opacity="0.8" stroke="#7d2434" stroke-width="1.15"/><path d="M623.4 801.5 L626.2 803.1 V806.4 L623.4 808.0 L620.6 806.4 V803.1 Z M620.6 803.1 L623.4 804.7 L626.2 803.1 M623.4 804.7 V808.0" fill="#ecc9d2" fill-opacity="0.8" stroke="#7d2434" stroke-width="1.15"/><path d="M651.5 813.3 L654.3 814.9 V818.1 L651.5 819.7 L648.8 818.1 V814.9 Z M648.8 814.9 L651.5 816.5 L654.3 814.9 M651.5 816.5 V819.7" fill="#ecc9d2" fill-opacity="0.8" stroke="#7d2434" stroke-width="1.15"/><path d="M383.0 508.8 L385.8 510.4 V513.6 L383.0 515.2 L380.2 513.6 V510.4 Z M380.2 510.4 L383.0 512.0 L385.8 510.4 M383.0 512.0 V515.2" fill="#ecc9d2" fill-opacity="0.8" stroke="#7d2434" stroke-width="1.15"/><path d="M383.0 522.3 L385.8 523.9 V527.1 L383.0 528.7 L380.2 527.1 V523.9 Z M380.2 523.9 L383.0 525.5 L385.8 523.9 M383.0 525.5 V528.7" fill="#ecc9d2" fill-opacity="0.8" stroke="#7d2434" stroke-width="1.15"/><path d="M409.2 522.7 L412.0 524.3 V527.5 L409.2 529.1 L406.4 527.5 V524.3 Z M406.4 524.3 L409.2 525.9 L412.0 524.3 M409.2 525.9 V529.1" fill="#ecc9d2" fill-opacity="0.8" stroke="#7d2434" stroke-width="1.15"/><path d="M409.2 537.7 L412.0 539.3 V542.5 L409.2 544.1 L406.4 542.5 V539.3 Z M406.4 539.3 L409.2 540.9 L412.0 539.3 M409.2 540.9 V544.1" fill="#ecc9d2" fill-opacity="0.8" stroke="#7d2434" stroke-width="1.15"/><path d="M435.5 536.6 L438.3 538.2 V541.4 L435.5 543.0 L432.7 541.4 V538.2 Z M432.7 538.2 L435.5 539.8 L438.3 538.2 M435.5 539.8 V543.0" fill="#ecc9d2" fill-opacity="0.8" stroke="#7d2434" stroke-width="1.15"/><path d="M435.5 553.1 L438.3 554.7 V557.9 L435.5 559.5 L432.7 557.9 V554.7 Z M432.7 554.7 L435.5 556.3 L438.3 554.7 M435.5 556.3 V559.5" fill="#ecc9d2" fill-opacity="0.8" stroke="#7d2434" stroke-width="1.15"/><path d="M461.7 550.5 L464.5 552.1 V555.3 L461.7 556.9 L458.9 555.3 V552.1 Z M458.9 552.1 L461.7 553.7 L464.5 552.1 M461.7 553.7 V556.9" fill="#ecc9d2" fill-opacity="0.8" stroke="#7d2434" stroke-width="1.15"/><path d="M461.7 568.5 L464.5 570.1 V573.3 L461.7 574.9 L458.9 573.3 V570.1 Z M458.9 570.1 L461.7 571.7 L464.5 570.1 M461.7 571.7 V574.9" fill="#ecc9d2" fill-opacity="0.8" stroke="#7d2434" stroke-width="1.15"/><path d="M488.0 564.4 L490.8 566.0 V569.2 L488.0 570.8 L485.2 569.2 V566.0 Z M485.2 566.0 L488.0 567.6 L490.8 566.0 M488.0 567.6 V570.8" fill="#ecc9d2" fill-opacity="0.8" stroke="#7d2434" stroke-width="1.15"/><path d="M488.0 583.9 L490.8 585.5 V588.7 L488.0 590.3 L485.2 588.7 V585.5 Z M485.2 585.5 L488.0 587.1 L490.8 585.5 M488.0 587.1 V590.3" fill="#ecc9d2" fill-opacity="0.8" stroke="#7d2434" stroke-width="1.15"/><path d="M514.2 578.3 L517.0 579.9 V583.1 L514.2 584.7 L511.4 583.1 V579.9 Z M511.4 579.9 L514.2 581.5 L517.0 579.9 M514.2 581.5 V584.7" fill="#ecc9d2" fill-opacity="0.8" stroke="#7d2434" stroke-width="1.15"/><path d="M514.2 599.3 L517.0 600.9 V604.1 L514.2 605.7 L511.4 604.1 V600.9 Z M511.4 600.9 L514.2 602.5 L517.0 600.9 M514.2 602.5 V605.7" fill="#ecc9d2" fill-opacity="0.8" stroke="#7d2434" stroke-width="1.15"/><path d="M540.5 592.2 L543.3 593.8 V597.0 L540.5 598.6 L537.7 597.0 V593.8 Z M537.7 593.8 L540.5 595.4 L543.3 593.8 M540.5 595.4 V598.6" fill="#ecc9d2" fill-opacity="0.8" stroke="#7d2434" stroke-width="1.15"/><path d="M540.5 614.7 L543.3 616.3 V619.5 L540.5 621.1 L537.7 619.5 V616.3 Z M537.7 616.3 L540.5 617.9 L543.3 616.3 M540.5 617.9 V621.1" fill="#ecc9d2" fill-opacity="0.8" stroke="#7d2434" stroke-width="1.15"/><path d="M566.7 606.1 L569.5 607.7 V610.9 L566.7 612.5 L563.9 610.9 V607.7 Z M563.9 607.7 L566.7 609.3 L569.5 607.7 M566.7 609.3 V612.5" fill="#ecc9d2" fill-opacity="0.8" stroke="#7d2434" stroke-width="1.15"/><path d="M566.7 630.1 L569.5 631.7 V634.9 L566.7 636.5 L563.9 634.9 V631.7 Z M563.9 631.7 L566.7 633.3 L569.5 631.7 M566.7 633.3 V636.5" fill="#ecc9d2" fill-opacity="0.8" stroke="#7d2434" stroke-width="1.15"/><path d="M593.0 620.0 L595.8 621.6 V624.8 L593.0 626.4 L590.2 624.8 V621.6 Z M590.2 621.6 L593.0 623.2 L595.8 621.6 M593.0 623.2 V626.4" fill="#ecc9d2" fill-opacity="0.8" stroke="#7d2434" stroke-width="1.15"/><path d="M593.0 645.5 L595.8 647.1 V650.3 L593.0 651.9 L590.2 650.3 V647.1 Z M590.2 647.1 L593.0 648.7 L595.8 647.1 M593.0 648.7 V651.9" fill="#ecc9d2" fill-opacity="0.8" stroke="#7d2434" stroke-width="1.15"/><path d="M621.1 647.0 L623.9 648.6 V651.9 L621.1 653.5 L618.3 651.9 V648.6 Z M618.3 648.6 L621.1 650.3 L623.9 648.6 M621.1 650.3 V653.5" fill="#ecc9d2" fill-opacity="0.8" stroke="#7d2434" stroke-width="1.15"/><path d="M621.1 671.0 L623.9 672.6 V675.9 L621.1 677.5 L618.3 675.9 V672.6 Z M618.3 672.6 L621.1 674.3 L623.9 672.6 M621.1 674.3 V677.5" fill="#ecc9d2" fill-opacity="0.8" stroke="#7d2434" stroke-width="1.15"/><path d="M649.3 674.1 L652.1 675.7 V678.9 L649.3 680.5 L646.5 678.9 V675.7 Z M646.5 675.7 L649.3 677.3 L652.1 675.7 M649.3 677.3 V680.5" fill="#ecc9d2" fill-opacity="0.8" stroke="#7d2434" stroke-width="1.15"/><path d="M649.3 695.1 L652.1 696.7 V699.9 L649.3 701.5 L646.5 699.9 V696.7 Z M646.5 696.7 L649.3 698.3 L652.1 696.7 M649.3 698.3 V701.5" fill="#ecc9d2" fill-opacity="0.8" stroke="#7d2434" stroke-width="1.15"/><path d="M677.4 701.2 L680.2 702.8 V706.0 L677.4 707.6 L674.6 706.0 V702.8 Z M674.6 702.8 L677.4 704.4 L680.2 702.8 M677.4 704.4 V707.6" fill="#ecc9d2" fill-opacity="0.8" stroke="#7d2434" stroke-width="1.15"/><path d="M677.4 718.9 L680.2 720.5 V723.7 L677.4 725.3 L674.6 723.7 V720.5 Z M674.6 720.5 L677.4 722.1 L680.2 720.5 M677.4 722.1 V725.3" fill="#ecc9d2" fill-opacity="0.8" stroke="#7d2434" stroke-width="1.15"/><path d="M705.6 728.2 L708.4 729.8 V733.1 L705.6 734.7 L702.8 733.1 V729.8 Z M702.8 729.8 L705.6 731.4 L708.4 729.8 M705.6 731.4 V734.7" fill="#ecc9d2" fill-opacity="0.8" stroke="#7d2434" stroke-width="1.15"/><path d="M705.6 743.5 L708.4 745.1 V748.4 L705.6 750.0 L702.8 748.4 V745.1 Z M702.8 745.1 L705.6 746.7 L708.4 745.1 M705.6 746.7 V750.0" fill="#ecc9d2" fill-opacity="0.8" stroke="#7d2434" stroke-width="1.15"/><path d="M733.7 755.3 L736.5 756.9 V760.1 L733.7 761.7 L730.9 760.1 V756.9 Z M730.9 756.9 L733.7 758.5 L736.5 756.9 M733.7 758.5 V761.7" fill="#ecc9d2" fill-opacity="0.8" stroke="#7d2434" stroke-width="1.15"/><path d="M465.2 450.8 L468.0 452.4 V455.6 L465.2 457.2 L462.4 455.6 V452.4 Z M462.4 452.4 L465.2 454.0 L468.0 452.4 M465.2 454.0 V457.2" fill="#ecc9d2" fill-opacity="0.8" stroke="#7d2434" stroke-width="1.15"/><path d="M465.2 464.3 L468.0 465.9 V469.1 L465.2 470.7 L462.4 469.1 V465.9 Z M462.4 465.9 L465.2 467.5 L468.0 465.9 M465.2 467.5 V470.7" fill="#ecc9d2" fill-opacity="0.8" stroke="#7d2434" stroke-width="1.15"/><path d="M491.4 464.7 L494.2 466.3 V469.5 L491.4 471.1 L488.6 469.5 V466.3 Z M488.6 466.3 L491.4 467.9 L494.2 466.3 M491.4 467.9 V471.1" fill="#ecc9d2" fill-opacity="0.8" stroke="#7d2434" stroke-width="1.15"/><path d="M491.4 479.7 L494.2 481.3 V484.5 L491.4 486.1 L488.6 484.5 V481.3 Z M488.6 481.3 L491.4 482.9 L494.2 481.3 M491.4 482.9 V486.1" fill="#ecc9d2" fill-opacity="0.8" stroke="#7d2434" stroke-width="1.15"/><path d="M517.7 478.6 L520.5 480.2 V483.4 L517.7 485.0 L514.9 483.4 V480.2 Z M514.9 480.2 L517.7 481.8 L520.5 480.2 M517.7 481.8 V485.0" fill="#ecc9d2" fill-opacity="0.8" stroke="#7d2434" stroke-width="1.15"/><path d="M517.7 495.1 L520.5 496.7 V499.9 L517.7 501.5 L514.9 499.9 V496.7 Z M514.9 496.7 L517.7 498.3 L520.5 496.7 M517.7 498.3 V501.5" fill="#ecc9d2" fill-opacity="0.8" stroke="#7d2434" stroke-width="1.15"/><path d="M543.9 492.5 L546.7 494.1 V497.3 L543.9 498.9 L541.1 497.3 V494.1 Z M541.1 494.1 L543.9 495.7 L546.7 494.1 M543.9 495.7 V498.9" fill="#ecc9d2" fill-opacity="0.8" stroke="#7d2434" stroke-width="1.15"/><path d="M543.9 510.5 L546.7 512.1 V515.3 L543.9 516.9 L541.1 515.3 V512.1 Z M541.1 512.1 L543.9 513.7 L546.7 512.1 M543.9 513.7 V516.9" fill="#ecc9d2" fill-opacity="0.8" stroke="#7d2434" stroke-width="1.15"/><path d="M570.2 506.4 L573.0 508.0 V511.2 L570.2 512.8 L567.4 511.2 V508.0 Z M567.4 508.0 L570.2 509.6 L573.0 508.0 M570.2 509.6 V512.8" fill="#ecc9d2" fill-opacity="0.8" stroke="#7d2434" stroke-width="1.15"/><path d="M570.2 525.9 L573.0 527.5 V530.7 L570.2 532.3 L567.4 530.7 V527.5 Z M567.4 527.5 L570.2 529.1 L573.0 527.5 M570.2 529.1 V532.3" fill="#ecc9d2" fill-opacity="0.8" stroke="#7d2434" stroke-width="1.15"/><path d="M596.4 520.3 L599.2 521.9 V525.1 L596.4 526.7 L593.6 525.1 V521.9 Z M593.6 521.9 L596.4 523.5 L599.2 521.9 M596.4 523.5 V526.7" fill="#ecc9d2" fill-opacity="0.8" stroke="#7d2434" stroke-width="1.15"/><path d="M596.4 541.3 L599.2 542.9 V546.1 L596.4 547.7 L593.6 546.1 V542.9 Z M593.6 542.9 L596.4 544.5 L599.2 542.9 M596.4 544.5 V547.7" fill="#ecc9d2" fill-opacity="0.8" stroke="#7d2434" stroke-width="1.15"/><path d="M622.7 534.2 L625.5 535.8 V539.0 L622.7 540.6 L619.9 539.0 V535.8 Z M619.9 535.8 L622.7 537.4 L625.5 535.8 M622.7 537.4 V540.6" fill="#ecc9d2" fill-opacity="0.8" stroke="#7d2434" stroke-width="1.15"/><path d="M622.7 556.7 L625.5 558.3 V561.5 L622.7 563.1 L619.9 561.5 V558.3 Z M619.9 558.3 L622.7 559.9 L625.5 558.3 M622.7 559.9 V563.1" fill="#ecc9d2" fill-opacity="0.8" stroke="#7d2434" stroke-width="1.15"/><path d="M648.9 548.1 L651.7 549.7 V552.9 L648.9 554.5 L646.1 552.9 V549.7 Z M646.1 549.7 L648.9 551.3 L651.7 549.7 M648.9 551.3 V554.5" fill="#ecc9d2" fill-opacity="0.8" stroke="#7d2434" stroke-width="1.15"/><path d="M648.9 572.1 L651.7 573.7 V576.9 L648.9 578.5 L646.1 576.9 V573.7 Z M646.1 573.7 L648.9 575.3 L651.7 573.7 M648.9 575.3 V578.5" fill="#ecc9d2" fill-opacity="0.8" stroke="#7d2434" stroke-width="1.15"/><path d="M675.2 562.0 L678.0 563.6 V566.8 L675.2 568.4 L672.4 566.8 V563.6 Z M672.4 563.6 L675.2 565.2 L678.0 563.6 M675.2 565.2 V568.4" fill="#ecc9d2" fill-opacity="0.8" stroke="#7d2434" stroke-width="1.15"/><path d="M675.2 587.5 L678.0 589.1 V592.3 L675.2 593.9 L672.4 592.3 V589.1 Z M672.4 589.1 L675.2 590.7 L678.0 589.1 M675.2 590.7 V593.9" fill="#ecc9d2" fill-opacity="0.8" stroke="#7d2434" stroke-width="1.15"/><path d="M703.3 589.0 L706.1 590.6 V593.9 L703.3 595.5 L700.5 593.9 V590.6 Z M700.5 590.6 L703.3 592.3 L706.1 590.6 M703.3 592.3 V595.5" fill="#ecc9d2" fill-opacity="0.8" stroke="#7d2434" stroke-width="1.15"/><path d="M703.3 613.0 L706.1 614.6 V617.9 L703.3 619.5 L700.5 617.9 V614.6 Z M700.5 614.6 L703.3 616.3 L706.1 614.6 M703.3 616.3 V619.5" fill="#ecc9d2" fill-opacity="0.8" stroke="#7d2434" stroke-width="1.15"/><path d="M731.5 616.1 L734.3 617.7 V620.9 L731.5 622.5 L728.7 620.9 V617.7 Z M728.7 617.7 L731.5 619.3 L734.3 617.7 M731.5 619.3 V622.5" fill="#ecc9d2" fill-opacity="0.8" stroke="#7d2434" stroke-width="1.15"/><path d="M731.5 637.1 L734.3 638.7 V641.9 L731.5 643.5 L728.7 641.9 V638.7 Z M728.7 638.7 L731.5 640.3 L734.3 638.7 M731.5 640.3 V643.5" fill="#ecc9d2" fill-opacity="0.8" stroke="#7d2434" stroke-width="1.15"/><path d="M759.6 643.2 L762.4 644.8 V648.0 L759.6 649.6 L756.8 648.0 V644.8 Z M756.8 644.8 L759.6 646.4 L762.4 644.8 M759.6 646.4 V649.6" fill="#ecc9d2" fill-opacity="0.8" stroke="#7d2434" stroke-width="1.15"/><path d="M759.6 660.9 L762.4 662.5 V665.7 L759.6 667.3 L756.8 665.7 V662.5 Z M756.8 662.5 L759.6 664.1 L762.4 662.5 M759.6 664.1 V667.3" fill="#ecc9d2" fill-opacity="0.8" stroke="#7d2434" stroke-width="1.15"/><path d="M787.8 670.2 L790.6 671.8 V675.1 L787.8 676.7 L785.0 675.1 V671.8 Z M785.0 671.8 L787.8 673.4 L790.6 671.8 M787.8 673.4 V676.7" fill="#ecc9d2" fill-opacity="0.8" stroke="#7d2434" stroke-width="1.15"/><path d="M787.8 685.5 L790.6 687.1 V690.4 L787.8 692.0 L785.0 690.4 V687.1 Z M785.0 687.1 L787.8 688.7 L790.6 687.1 M787.8 688.7 V692.0" fill="#ecc9d2" fill-opacity="0.8" stroke="#7d2434" stroke-width="1.15"/><path d="M815.9 697.3 L818.7 698.9 V702.1 L815.9 703.7 L813.1 702.1 V698.9 Z M813.1 698.9 L815.9 700.5 L818.7 698.9 M815.9 700.5 V703.7" fill="#ecc9d2" fill-opacity="0.8" stroke="#7d2434" stroke-width="1.15"/><path d="M547.3 392.8 L550.1 394.4 V397.6 L547.3 399.2 L544.5 397.6 V394.4 Z M544.5 394.4 L547.3 396.0 L550.1 394.4 M547.3 396.0 V399.2" fill="#ecc9d2" fill-opacity="0.8" stroke="#7d2434" stroke-width="1.15"/><path d="M547.3 406.3 L550.1 407.9 V411.1 L547.3 412.7 L544.5 411.1 V407.9 Z M544.5 407.9 L547.3 409.5 L550.1 407.9 M547.3 409.5 V412.7" fill="#ecc9d2" fill-opacity="0.8" stroke="#7d2434" stroke-width="1.15"/><path d="M573.6 406.7 L576.4 408.3 V411.5 L573.6 413.1 L570.8 411.5 V408.3 Z M570.8 408.3 L573.6 409.9 L576.4 408.3 M573.6 409.9 V413.1" fill="#ecc9d2" fill-opacity="0.8" stroke="#7d2434" stroke-width="1.15"/><path d="M573.6 421.7 L576.4 423.3 V426.5 L573.6 428.1 L570.8 426.5 V423.3 Z M570.8 423.3 L573.6 424.9 L576.4 423.3 M573.6 424.9 V428.1" fill="#ecc9d2" fill-opacity="0.8" stroke="#7d2434" stroke-width="1.15"/><path d="M599.8 420.6 L602.6 422.2 V425.4 L599.8 427.0 L597.0 425.4 V422.2 Z M597.0 422.2 L599.8 423.8 L602.6 422.2 M599.8 423.8 V427.0" fill="#ecc9d2" fill-opacity="0.8" stroke="#7d2434" stroke-width="1.15"/><path d="M599.8 437.1 L602.6 438.7 V441.9 L599.8 443.5 L597.0 441.9 V438.7 Z M597.0 438.7 L599.8 440.3 L602.6 438.7 M599.8 440.3 V443.5" fill="#ecc9d2" fill-opacity="0.8" stroke="#7d2434" stroke-width="1.15"/><path d="M626.1 434.5 L628.9 436.1 V439.3 L626.1 440.9 L623.3 439.3 V436.1 Z M623.3 436.1 L626.1 437.7 L628.9 436.1 M626.1 437.7 V440.9" fill="#ecc9d2" fill-opacity="0.8" stroke="#7d2434" stroke-width="1.15"/><path d="M626.1 452.5 L628.9 454.1 V457.3 L626.1 458.9 L623.3 457.3 V454.1 Z M623.3 454.1 L626.1 455.7 L628.9 454.1 M626.1 455.7 V458.9" fill="#ecc9d2" fill-opacity="0.8" stroke="#7d2434" stroke-width="1.15"/><path d="M652.3 448.4 L655.1 450.0 V453.2 L652.3 454.8 L649.5 453.2 V450.0 Z M649.5 450.0 L652.3 451.6 L655.1 450.0 M652.3 451.6 V454.8" fill="#ecc9d2" fill-opacity="0.8" stroke="#7d2434" stroke-width="1.15"/><path d="M652.3 467.9 L655.1 469.5 V472.7 L652.3 474.3 L649.5 472.7 V469.5 Z M649.5 469.5 L652.3 471.1 L655.1 469.5 M652.3 471.1 V474.3" fill="#ecc9d2" fill-opacity="0.8" stroke="#7d2434" stroke-width="1.15"/><path d="M678.6 462.3 L681.4 463.9 V467.1 L678.6 468.7 L675.8 467.1 V463.9 Z M675.8 463.9 L678.6 465.5 L681.4 463.9 M678.6 465.5 V468.7" fill="#ecc9d2" fill-opacity="0.8" stroke="#7d2434" stroke-width="1.15"/><path d="M678.6 483.3 L681.4 484.9 V488.1 L678.6 489.7 L675.8 488.1 V484.9 Z M675.8 484.9 L678.6 486.5 L681.4 484.9 M678.6 486.5 V489.7" fill="#ecc9d2" fill-opacity="0.8" stroke="#7d2434" stroke-width="1.15"/><path d="M704.8 476.2 L707.6 477.8 V481.0 L704.8 482.6 L702.0 481.0 V477.8 Z M702.0 477.8 L704.8 479.4 L707.6 477.8 M704.8 479.4 V482.6" fill="#ecc9d2" fill-opacity="0.8" stroke="#7d2434" stroke-width="1.15"/><path d="M704.8 498.7 L707.6 500.3 V503.5 L704.8 505.1 L702.0 503.5 V500.3 Z M702.0 500.3 L704.8 501.9 L707.6 500.3 M704.8 501.9 V505.1" fill="#ecc9d2" fill-opacity="0.8" stroke="#7d2434" stroke-width="1.15"/><path d="M731.1 490.1 L733.9 491.7 V494.9 L731.1 496.5 L728.3 494.9 V491.7 Z M728.3 491.7 L731.1 493.3 L733.9 491.7 M731.1 493.3 V496.5" fill="#ecc9d2" fill-opacity="0.8" stroke="#7d2434" stroke-width="1.15"/><path d="M731.1 514.1 L733.9 515.7 V518.9 L731.1 520.5 L728.3 518.9 V515.7 Z M728.3 515.7 L731.1 517.3 L733.9 515.7 M731.1 517.3 V520.5" fill="#ecc9d2" fill-opacity="0.8" stroke="#7d2434" stroke-width="1.15"/><path d="M757.3 504.0 L760.1 505.6 V508.8 L757.3 510.4 L754.5 508.8 V505.6 Z M754.5 505.6 L757.3 507.2 L760.1 505.6 M757.3 507.2 V510.4" fill="#ecc9d2" fill-opacity="0.8" stroke="#7d2434" stroke-width="1.15"/><path d="M757.3 529.5 L760.1 531.1 V534.3 L757.3 535.9 L754.5 534.3 V531.1 Z M754.5 531.1 L757.3 532.7 L760.1 531.1 M757.3 532.7 V535.9" fill="#ecc9d2" fill-opacity="0.8" stroke="#7d2434" stroke-width="1.15"/><path d="M785.5 531.0 L788.3 532.6 V535.9 L785.5 537.5 L782.7 535.9 V532.6 Z M782.7 532.6 L785.5 534.3 L788.3 532.6 M785.5 534.3 V537.5" fill="#ecc9d2" fill-opacity="0.8" stroke="#7d2434" stroke-width="1.15"/><path d="M785.5 555.0 L788.3 556.6 V559.9 L785.5 561.5 L782.7 559.9 V556.6 Z M782.7 556.6 L785.5 558.3 L788.3 556.6 M785.5 558.3 V561.5" fill="#ecc9d2" fill-opacity="0.8" stroke="#7d2434" stroke-width="1.15"/><path d="M813.6 558.1 L816.4 559.7 V562.9 L813.6 564.5 L810.8 562.9 V559.7 Z M810.8 559.7 L813.6 561.3 L816.4 559.7 M813.6 561.3 V564.5" fill="#ecc9d2" fill-opacity="0.8" stroke="#7d2434" stroke-width="1.15"/><path d="M813.6 579.1 L816.4 580.7 V583.9 L813.6 585.5 L810.8 583.9 V580.7 Z M810.8 580.7 L813.6 582.3 L816.4 580.7 M813.6 582.3 V585.5" fill="#ecc9d2" fill-opacity="0.8" stroke="#7d2434" stroke-width="1.15"/><path d="M841.8 585.2 L844.6 586.8 V590.0 L841.8 591.6 L839.0 590.0 V586.8 Z M839.0 586.8 L841.8 588.4 L844.6 586.8 M841.8 588.4 V591.6" fill="#ecc9d2" fill-opacity="0.8" stroke="#7d2434" stroke-width="1.15"/><path d="M841.8 602.9 L844.6 604.5 V607.7 L841.8 609.3 L839.0 607.7 V604.5 Z M839.0 604.5 L841.8 606.1 L844.6 604.5 M841.8 606.1 V609.3" fill="#ecc9d2" fill-opacity="0.8" stroke="#7d2434" stroke-width="1.15"/><path d="M869.9 612.2 L872.7 613.8 V617.1 L869.9 618.7 L867.1 617.1 V613.8 Z M867.1 613.8 L869.9 615.4 L872.7 613.8 M869.9 615.4 V618.7" fill="#ecc9d2" fill-opacity="0.8" stroke="#7d2434" stroke-width="1.15"/><path d="M869.9 627.5 L872.7 629.1 V632.4 L869.9 634.0 L867.1 632.4 V629.1 Z M867.1 629.1 L869.9 630.7 L872.7 629.1 M869.9 630.7 V634.0" fill="#ecc9d2" fill-opacity="0.8" stroke="#7d2434" stroke-width="1.15"/><path d="M898.1 639.3 L900.9 640.9 V644.1 L898.1 645.7 L895.3 644.1 V640.9 Z M895.3 640.9 L898.1 642.5 L900.9 640.9 M898.1 642.5 V645.7" fill="#ecc9d2" fill-opacity="0.8" stroke="#7d2434" stroke-width="1.15"/><path d="M629.5 334.8 L632.3 336.4 V339.6 L629.5 341.2 L626.7 339.6 V336.4 Z M626.7 336.4 L629.5 338.0 L632.3 336.4 M629.5 338.0 V341.2" fill="#ecc9d2" fill-opacity="0.8" stroke="#7d2434" stroke-width="1.15"/><path d="M629.5 348.3 L632.3 349.9 V353.1 L629.5 354.7 L626.7 353.1 V349.9 Z M626.7 349.9 L629.5 351.5 L632.3 349.9 M629.5 351.5 V354.7" fill="#ecc9d2" fill-opacity="0.8" stroke="#7d2434" stroke-width="1.15"/><path d="M655.8 348.7 L658.6 350.3 V353.5 L655.8 355.1 L653.0 353.5 V350.3 Z M653.0 350.3 L655.8 351.9 L658.6 350.3 M655.8 351.9 V355.1" fill="#ecc9d2" fill-opacity="0.8" stroke="#7d2434" stroke-width="1.15"/><path d="M655.8 363.7 L658.6 365.3 V368.5 L655.8 370.1 L653.0 368.5 V365.3 Z M653.0 365.3 L655.8 366.9 L658.6 365.3 M655.8 366.9 V370.1" fill="#ecc9d2" fill-opacity="0.8" stroke="#7d2434" stroke-width="1.15"/><path d="M682.0 362.6 L684.8 364.2 V367.4 L682.0 369.0 L679.2 367.4 V364.2 Z M679.2 364.2 L682.0 365.8 L684.8 364.2 M682.0 365.8 V369.0" fill="#ecc9d2" fill-opacity="0.8" stroke="#7d2434" stroke-width="1.15"/><path d="M682.0 379.1 L684.8 380.7 V383.9 L682.0 385.5 L679.2 383.9 V380.7 Z M679.2 380.7 L682.0 382.3 L684.8 380.7 M682.0 382.3 V385.5" fill="#ecc9d2" fill-opacity="0.8" stroke="#7d2434" stroke-width="1.15"/><path d="M708.3 376.5 L711.1 378.1 V381.3 L708.3 382.9 L705.5 381.3 V378.1 Z M705.5 378.1 L708.3 379.7 L711.1 378.1 M708.3 379.7 V382.9" fill="#ecc9d2" fill-opacity="0.8" stroke="#7d2434" stroke-width="1.15"/><path d="M708.3 394.5 L711.1 396.1 V399.3 L708.3 400.9 L705.5 399.3 V396.1 Z M705.5 396.1 L708.3 397.7 L711.1 396.1 M708.3 397.7 V400.9" fill="#ecc9d2" fill-opacity="0.8" stroke="#7d2434" stroke-width="1.15"/><path d="M734.5 390.4 L737.3 392.0 V395.2 L734.5 396.8 L731.7 395.2 V392.0 Z M731.7 392.0 L734.5 393.6 L737.3 392.0 M734.5 393.6 V396.8" fill="#ecc9d2" fill-opacity="0.8" stroke="#7d2434" stroke-width="1.15"/><path d="M734.5 409.9 L737.3 411.5 V414.7 L734.5 416.3 L731.7 414.7 V411.5 Z M731.7 411.5 L734.5 413.1 L737.3 411.5 M734.5 413.1 V416.3" fill="#ecc9d2" fill-opacity="0.8" stroke="#7d2434" stroke-width="1.15"/><path d="M760.8 404.3 L763.6 405.9 V409.1 L760.8 410.7 L758.0 409.1 V405.9 Z M758.0 405.9 L760.8 407.5 L763.6 405.9 M760.8 407.5 V410.7" fill="#ecc9d2" fill-opacity="0.8" stroke="#7d2434" stroke-width="1.15"/><path d="M760.8 425.3 L763.6 426.9 V430.1 L760.8 431.7 L758.0 430.1 V426.9 Z M758.0 426.9 L760.8 428.5 L763.6 426.9 M760.8 428.5 V431.7" fill="#ecc9d2" fill-opacity="0.8" stroke="#7d2434" stroke-width="1.15"/><path d="M787.0 418.2 L789.8 419.8 V423.0 L787.0 424.6 L784.2 423.0 V419.8 Z M784.2 419.8 L787.0 421.4 L789.8 419.8 M787.0 421.4 V424.6" fill="#ecc9d2" fill-opacity="0.8" stroke="#7d2434" stroke-width="1.15"/><path d="M787.0 440.7 L789.8 442.3 V445.5 L787.0 447.1 L784.2 445.5 V442.3 Z M784.2 442.3 L787.0 443.9 L789.8 442.3 M787.0 443.9 V447.1" fill="#ecc9d2" fill-opacity="0.8" stroke="#7d2434" stroke-width="1.15"/><path d="M813.3 432.1 L816.1 433.7 V436.9 L813.3 438.5 L810.5 436.9 V433.7 Z M810.5 433.7 L813.3 435.3 L816.1 433.7 M813.3 435.3 V438.5" fill="#ecc9d2" fill-opacity="0.8" stroke="#7d2434" stroke-width="1.15"/><path d="M813.3 456.1 L816.1 457.7 V460.9 L813.3 462.5 L810.5 460.9 V457.7 Z M810.5 457.7 L813.3 459.3 L816.1 457.7 M813.3 459.3 V462.5" fill="#ecc9d2" fill-opacity="0.8" stroke="#7d2434" stroke-width="1.15"/><path d="M839.5 446.0 L842.3 447.6 V450.8 L839.5 452.4 L836.7 450.8 V447.6 Z M836.7 447.6 L839.5 449.2 L842.3 447.6 M839.5 449.2 V452.4" fill="#ecc9d2" fill-opacity="0.8" stroke="#7d2434" stroke-width="1.15"/><path d="M839.5 471.5 L842.3 473.1 V476.3 L839.5 477.9 L836.7 476.3 V473.1 Z M836.7 473.1 L839.5 474.7 L842.3 473.1 M839.5 474.7 V477.9" fill="#ecc9d2" fill-opacity="0.8" stroke="#7d2434" stroke-width="1.15"/><path d="M867.7 473.0 L870.5 474.6 V477.9 L867.7 479.5 L864.9 477.9 V474.6 Z M864.9 474.6 L867.7 476.3 L870.5 474.6 M867.7 476.3 V479.5" fill="#ecc9d2" fill-opacity="0.8" stroke="#7d2434" stroke-width="1.15"/><path d="M867.7 497.0 L870.5 498.6 V501.9 L867.7 503.5 L864.9 501.9 V498.6 Z M864.9 498.6 L867.7 500.3 L870.5 498.6 M867.7 500.3 V503.5" fill="#ecc9d2" fill-opacity="0.8" stroke="#7d2434" stroke-width="1.15"/><path d="M895.8 500.1 L898.6 501.7 V504.9 L895.8 506.5 L893.0 504.9 V501.7 Z M893.0 501.7 L895.8 503.3 L898.6 501.7 M895.8 503.3 V506.5" fill="#ecc9d2" fill-opacity="0.8" stroke="#7d2434" stroke-width="1.15"/><path d="M895.8 521.1 L898.6 522.7 V525.9 L895.8 527.5 L893.0 525.9 V522.7 Z M893.0 522.7 L895.8 524.3 L898.6 522.7 M895.8 524.3 V527.5" fill="#ecc9d2" fill-opacity="0.8" stroke="#7d2434" stroke-width="1.15"/><path d="M924.0 527.2 L926.8 528.8 V532.0 L924.0 533.6 L921.2 532.0 V528.8 Z M921.2 528.8 L924.0 530.4 L926.8 528.8 M924.0 530.4 V533.6" fill="#ecc9d2" fill-opacity="0.8" stroke="#7d2434" stroke-width="1.15"/><path d="M924.0 544.9 L926.8 546.5 V549.7 L924.0 551.3 L921.2 549.7 V546.5 Z M921.2 546.5 L924.0 548.1 L926.8 546.5 M924.0 548.1 V551.3" fill="#ecc9d2" fill-opacity="0.8" stroke="#7d2434" stroke-width="1.15"/><path d="M952.1 554.2 L954.9 555.8 V559.1 L952.1 560.7 L949.3 559.1 V555.8 Z M949.3 555.8 L952.1 557.4 L954.9 555.8 M952.1 557.4 V560.7" fill="#ecc9d2" fill-opacity="0.8" stroke="#7d2434" stroke-width="1.15"/><path d="M952.1 569.5 L954.9 571.1 V574.4 L952.1 576.0 L949.3 574.4 V571.1 Z M949.3 571.1 L952.1 572.7 L954.9 571.1 M952.1 572.7 V576.0" fill="#ecc9d2" fill-opacity="0.8" stroke="#7d2434" stroke-width="1.15"/><path d="M980.3 581.3 L983.1 582.9 V586.1 L980.3 587.7 L977.5 586.1 V582.9 Z M977.5 582.9 L980.3 584.5 L983.1 582.9 M980.3 584.5 V587.7" fill="#ecc9d2" fill-opacity="0.8" stroke="#7d2434" stroke-width="1.15"/><path d="M711.7 276.8 L714.5 278.4 V281.6 L711.7 283.2 L708.9 281.6 V278.4 Z M708.9 278.4 L711.7 280.0 L714.5 278.4 M711.7 280.0 V283.2" fill="#ecc9d2" fill-opacity="0.8" stroke="#7d2434" stroke-width="1.15"/><path d="M711.7 290.3 L714.5 291.9 V295.1 L711.7 296.7 L708.9 295.1 V291.9 Z M708.9 291.9 L711.7 293.5 L714.5 291.9 M711.7 293.5 V296.7" fill="#ecc9d2" fill-opacity="0.8" stroke="#7d2434" stroke-width="1.15"/><path d="M738.0 290.7 L740.8 292.3 V295.5 L738.0 297.1 L735.2 295.5 V292.3 Z M735.2 292.3 L738.0 293.9 L740.8 292.3 M738.0 293.9 V297.1" fill="#ecc9d2" fill-opacity="0.8" stroke="#7d2434" stroke-width="1.15"/><path d="M738.0 305.7 L740.8 307.3 V310.5 L738.0 312.1 L735.2 310.5 V307.3 Z M735.2 307.3 L738.0 308.9 L740.8 307.3 M738.0 308.9 V312.1" fill="#ecc9d2" fill-opacity="0.8" stroke="#7d2434" stroke-width="1.15"/><path d="M764.2 304.6 L767.0 306.2 V309.4 L764.2 311.0 L761.4 309.4 V306.2 Z M761.4 306.2 L764.2 307.8 L767.0 306.2 M764.2 307.8 V311.0" fill="#ecc9d2" fill-opacity="0.8" stroke="#7d2434" stroke-width="1.15"/><path d="M764.2 321.1 L767.0 322.7 V325.9 L764.2 327.5 L761.4 325.9 V322.7 Z M761.4 322.7 L764.2 324.3 L767.0 322.7 M764.2 324.3 V327.5" fill="#ecc9d2" fill-opacity="0.8" stroke="#7d2434" stroke-width="1.15"/><path d="M790.5 318.5 L793.2 320.1 V323.3 L790.5 324.9 L787.7 323.3 V320.1 Z M787.7 320.1 L790.5 321.7 L793.2 320.1 M790.5 321.7 V324.9" fill="#ecc9d2" fill-opacity="0.8" stroke="#7d2434" stroke-width="1.15"/><path d="M790.5 336.5 L793.2 338.1 V341.3 L790.5 342.9 L787.7 341.3 V338.1 Z M787.7 338.1 L790.5 339.7 L793.2 338.1 M790.5 339.7 V342.9" fill="#ecc9d2" fill-opacity="0.8" stroke="#7d2434" stroke-width="1.15"/><path d="M816.7 332.4 L819.5 334.0 V337.2 L816.7 338.8 L813.9 337.2 V334.0 Z M813.9 334.0 L816.7 335.6 L819.5 334.0 M816.7 335.6 V338.8" fill="#ecc9d2" fill-opacity="0.8" stroke="#7d2434" stroke-width="1.15"/><path d="M816.7 351.9 L819.5 353.5 V356.7 L816.7 358.3 L813.9 356.7 V353.5 Z M813.9 353.5 L816.7 355.1 L819.5 353.5 M816.7 355.1 V358.3" fill="#ecc9d2" fill-opacity="0.8" stroke="#7d2434" stroke-width="1.15"/><path d="M843.0 346.3 L845.8 347.9 V351.1 L843.0 352.7 L840.2 351.1 V347.9 Z M840.2 347.9 L843.0 349.5 L845.8 347.9 M843.0 349.5 V352.7" fill="#ecc9d2" fill-opacity="0.8" stroke="#7d2434" stroke-width="1.15"/><path d="M843.0 367.3 L845.8 368.9 V372.1 L843.0 373.7 L840.2 372.1 V368.9 Z M840.2 368.9 L843.0 370.5 L845.8 368.9 M843.0 370.5 V373.7" fill="#ecc9d2" fill-opacity="0.8" stroke="#7d2434" stroke-width="1.15"/><path d="M869.2 360.2 L872.0 361.8 V365.0 L869.2 366.6 L866.4 365.0 V361.8 Z M866.4 361.8 L869.2 363.4 L872.0 361.8 M869.2 363.4 V366.6" fill="#ecc9d2" fill-opacity="0.8" stroke="#7d2434" stroke-width="1.15"/><path d="M869.2 382.7 L872.0 384.3 V387.5 L869.2 389.1 L866.4 387.5 V384.3 Z M866.4 384.3 L869.2 385.9 L872.0 384.3 M869.2 385.9 V389.1" fill="#ecc9d2" fill-opacity="0.8" stroke="#7d2434" stroke-width="1.15"/><path d="M895.5 374.1 L898.2 375.7 V378.9 L895.5 380.5 L892.7 378.9 V375.7 Z M892.7 375.7 L895.5 377.3 L898.2 375.7 M895.5 377.3 V380.5" fill="#ecc9d2" fill-opacity="0.8" stroke="#7d2434" stroke-width="1.15"/><path d="M895.5 398.1 L898.2 399.7 V402.9 L895.5 404.5 L892.7 402.9 V399.7 Z M892.7 399.7 L895.5 401.3 L898.2 399.7 M895.5 401.3 V404.5" fill="#ecc9d2" fill-opacity="0.8" stroke="#7d2434" stroke-width="1.15"/><path d="M921.7 388.0 L924.5 389.6 V392.8 L921.7 394.4 L918.9 392.8 V389.6 Z M918.9 389.6 L921.7 391.2 L924.5 389.6 M921.7 391.2 V394.4" fill="#ecc9d2" fill-opacity="0.8" stroke="#7d2434" stroke-width="1.15"/><path d="M921.7 413.5 L924.5 415.1 V418.3 L921.7 419.9 L918.9 418.3 V415.1 Z M918.9 415.1 L921.7 416.7 L924.5 415.1 M921.7 416.7 V419.9" fill="#ecc9d2" fill-opacity="0.8" stroke="#7d2434" stroke-width="1.15"/><path d="M949.9 415.0 L952.6 416.6 V419.9 L949.9 421.5 L947.1 419.9 V416.6 Z M947.1 416.6 L949.9 418.3 L952.6 416.6 M949.9 418.3 V421.5" fill="#ecc9d2" fill-opacity="0.8" stroke="#7d2434" stroke-width="1.15"/><path d="M949.9 439.0 L952.6 440.6 V443.9 L949.9 445.5 L947.1 443.9 V440.6 Z M947.1 440.6 L949.9 442.3 L952.6 440.6 M949.9 442.3 V445.5" fill="#ecc9d2" fill-opacity="0.8" stroke="#7d2434" stroke-width="1.15"/><path d="M978.0 442.1 L980.8 443.7 V446.9 L978.0 448.5 L975.2 446.9 V443.7 Z M975.2 443.7 L978.0 445.3 L980.8 443.7 M978.0 445.3 V448.5" fill="#ecc9d2" fill-opacity="0.8" stroke="#7d2434" stroke-width="1.15"/><path d="M978.0 463.1 L980.8 464.7 V467.9 L978.0 469.5 L975.2 467.9 V464.7 Z M975.2 464.7 L978.0 466.3 L980.8 464.7 M978.0 466.3 V469.5" fill="#ecc9d2" fill-opacity="0.8" stroke="#7d2434" stroke-width="1.15"/><path d="M1006.2 469.2 L1009.0 470.8 V474.0 L1006.2 475.6 L1003.4 474.0 V470.8 Z M1003.4 470.8 L1006.2 472.4 L1009.0 470.8 M1006.2 472.4 V475.6" fill="#ecc9d2" fill-opacity="0.8" stroke="#7d2434" stroke-width="1.15"/><path d="M1006.2 486.9 L1009.0 488.5 V491.7 L1006.2 493.3 L1003.4 491.7 V488.5 Z M1003.4 488.5 L1006.2 490.1 L1009.0 488.5 M1006.2 490.1 V493.3" fill="#ecc9d2" fill-opacity="0.8" stroke="#7d2434" stroke-width="1.15"/><path d="M1034.3 496.2 L1037.1 497.8 V501.1 L1034.3 502.7 L1031.5 501.1 V497.8 Z M1031.5 497.8 L1034.3 499.4 L1037.1 497.8 M1034.3 499.4 V502.7" fill="#ecc9d2" fill-opacity="0.8" stroke="#7d2434" stroke-width="1.15"/><path d="M1034.3 511.5 L1037.1 513.1 V516.4 L1034.3 518.0 L1031.5 516.4 V513.1 Z M1031.5 513.1 L1034.3 514.7 L1037.1 513.1 M1034.3 514.7 V518.0" fill="#ecc9d2" fill-opacity="0.8" stroke="#7d2434" stroke-width="1.15"/><path d="M1062.5 523.3 L1065.2 524.9 V528.1 L1062.5 529.7 L1059.7 528.1 V524.9 Z M1059.7 524.9 L1062.5 526.5 L1065.2 524.9 M1062.5 526.5 V529.7" fill="#ecc9d2" fill-opacity="0.8" stroke="#7d2434" stroke-width="1.15"/><path d="M311.7 655.8 L314.5 657.4 V660.6 L311.7 662.2 L308.9 660.6 V657.4 Z M308.9 657.4 L311.7 659.0 L314.5 657.4 M311.7 659.0 V662.2" fill="#ecc9d2" fill-opacity="0.8" stroke="#7d2434" stroke-width="1.15"/><path d="M234.2 614.3 L237.0 615.9 V619.1 L234.2 620.7 L231.4 619.1 V615.9 Z M231.4 615.9 L234.2 617.5 L237.0 615.9 M234.2 617.5 V620.7" fill="#ecc9d2" fill-opacity="0.8" stroke="#7d2434" stroke-width="1.15"/><path d="M234.2 628.5 L237.0 630.1 V633.3 L234.2 634.9 L231.4 633.3 V630.1 Z M231.4 630.1 L234.2 631.7 L237.0 630.1 M234.2 631.7 V634.9" fill="#ecc9d2" fill-opacity="0.8" stroke="#7d2434" stroke-width="1.15"/><path d="M234.2 663.5 L237.0 665.1 V668.3 L234.2 669.9 L231.4 668.3 V665.1 Z M231.4 665.1 L234.2 666.7 L237.0 665.1 M234.2 666.7 V669.9" fill="#ecc9d2" fill-opacity="0.8" stroke="#7d2434" stroke-width="1.15"/><path d="M234.2 675.1 L237.0 676.7 V679.9 L234.2 681.5 L231.4 679.9 V676.7 Z M231.4 676.7 L234.2 678.3 L237.0 676.7 M234.2 678.3 V681.5" fill="#ecc9d2" fill-opacity="0.8" stroke="#7d2434" stroke-width="1.15"/><path d="M234.2 708.5 L237.0 710.1 V713.3 L234.2 714.9 L231.4 713.3 V710.1 Z M231.4 710.1 L234.2 711.7 L237.0 710.1 M234.2 711.7 V714.9" fill="#ecc9d2" fill-opacity="0.8" stroke="#7d2434" stroke-width="1.15"/><path d="M268.3 638.5 L271.1 640.1 V643.3 L268.3 644.9 L265.5 643.3 V640.1 Z M265.5 640.1 L268.3 641.7 L271.1 640.1 M268.3 641.7 V644.9" fill="#ecc9d2" fill-opacity="0.8" stroke="#7d2434" stroke-width="1.15"/><path d="M300.8 661.8 L303.6 663.4 V666.6 L300.8 668.2 L298.0 666.6 V663.4 Z M298.0 663.4 L300.8 665.0 L303.6 663.4 M300.8 665.0 V668.2" fill="#ecc9d2" fill-opacity="0.8" stroke="#7d2434" stroke-width="1.15"/><path d="M203.3 730.5 L206.1 732.1 V735.3 L203.3 736.9 L200.5 735.3 V732.1 Z M200.5 732.1 L203.3 733.7 L206.1 732.1 M203.3 733.7 V736.9" fill="#ecc9d2" fill-opacity="0.8" stroke="#7d2434" stroke-width="1.15"/><path d="M311.7 730.5 L314.5 732.1 V735.3 L311.7 736.9 L308.9 735.3 V732.1 Z M308.9 732.1 L311.7 733.7 L314.5 732.1 M311.7 733.7 V736.9" fill="#ecc9d2" fill-opacity="0.8" stroke="#7d2434" stroke-width="1.15"/><path d="M311.7 763.5 L314.5 765.1 V768.3 L311.7 769.9 L308.9 768.3 V765.1 Z M308.9 765.1 L311.7 766.7 L314.5 765.1 M311.7 766.7 V769.9" fill="#ecc9d2" fill-opacity="0.8" stroke="#7d2434" stroke-width="1.15"/><path d="M342.5 634.3 L345.3 635.9 V639.1 L342.5 640.7 L339.7 639.1 V635.9 Z M339.7 635.9 L342.5 637.5 L345.3 635.9 M342.5 637.5 V640.7" fill="#ecc9d2" fill-opacity="0.8" stroke="#7d2434" stroke-width="1.15"/><path d="M342.5 661.5 L345.3 663.1 V666.3 L342.5 667.9 L339.7 666.3 V663.1 Z M339.7 663.1 L342.5 664.7 L345.3 663.1 M342.5 664.7 V667.9" fill="#ecc9d2" fill-opacity="0.8" stroke="#7d2434" stroke-width="1.15"/><path d="M342.5 741.8 L345.3 743.4 V746.6 L342.5 748.2 L339.7 746.6 V743.4 Z M339.7 743.4 L342.5 745.0 L345.3 743.4 M342.5 745.0 V748.2" fill="#ecc9d2" fill-opacity="0.8" stroke="#7d2434" stroke-width="1.15"/><path d="M356.7 704.3 L359.5 705.9 V709.1 L356.7 710.7 L353.9 709.1 V705.9 Z M353.9 705.9 L356.7 707.5 L359.5 705.9 M356.7 707.5 V710.7" fill="#ecc9d2" fill-opacity="0.8" stroke="#7d2434" stroke-width="1.15"/><path d="M356.7 740.8 L359.5 742.4 V745.6 L356.7 747.2 L353.9 745.6 V742.4 Z M353.9 742.4 L356.7 744.0 L359.5 742.4 M356.7 744.0 V747.2" fill="#ecc9d2" fill-opacity="0.8" stroke="#7d2434" stroke-width="1.15"/><path d="M356.7 788.5 L359.5 790.1 V793.3 L356.7 794.9 L353.9 793.3 V790.1 Z M353.9 790.1 L356.7 791.7 L359.5 790.1 M356.7 791.7 V794.9" fill="#ecc9d2" fill-opacity="0.8" stroke="#7d2434" stroke-width="1.15"/><path d="M356.7 821.8 L359.5 823.4 V826.6 L356.7 828.2 L353.9 826.6 V823.4 Z M353.9 823.4 L356.7 825.0 L359.5 823.4 M356.7 825.0 V828.2" fill="#ecc9d2" fill-opacity="0.8" stroke="#7d2434" stroke-width="1.15"/><path d="M412.5 798.5 L415.3 800.1 V803.3 L412.5 804.9 L409.7 803.3 V800.1 Z M409.7 800.1 L412.5 801.7 L415.3 800.1 M412.5 801.7 V804.9" fill="#ecc9d2" fill-opacity="0.8" stroke="#7d2434" stroke-width="1.15"/><path d="M412.5 825.1 L415.3 826.7 V829.9 L412.5 831.5 L409.7 829.9 V826.7 Z M409.7 826.7 L412.5 828.3 L415.3 826.7 M412.5 828.3 V831.5" fill="#ecc9d2" fill-opacity="0.8" stroke="#7d2434" stroke-width="1.15"/><path d="M412.5 845.8 L415.3 847.4 V850.6 L412.5 852.2 L409.7 850.6 V847.4 Z M409.7 847.4 L412.5 849.0 L415.3 847.4 M412.5 849.0 V852.2" fill="#ecc9d2" fill-opacity="0.8" stroke="#7d2434" stroke-width="1.15"/><path d="M412.5 878.5 L415.3 880.1 V883.3 L412.5 884.9 L409.7 883.3 V880.1 Z M409.7 880.1 L412.5 881.7 L415.3 880.1 M412.5 881.7 V884.9" fill="#ecc9d2" fill-opacity="0.8" stroke="#7d2434" stroke-width="1.15"/><path d="M425.0 739.3 L427.8 740.9 V744.1 L425.0 745.7 L422.2 744.1 V740.9 Z M422.2 740.9 L425.0 742.5 L427.8 740.9 M425.0 742.5 V745.7" fill="#ecc9d2" fill-opacity="0.8" stroke="#7d2434" stroke-width="1.15"/><path d="M425.0 788.8 L427.8 790.4 V793.6 L425.0 795.2 L422.2 793.6 V790.4 Z M422.2 790.4 L425.0 792.0 L427.8 790.4 M425.0 792.0 V795.2" fill="#ecc9d2" fill-opacity="0.8" stroke="#7d2434" stroke-width="1.15"/><path d="M425.0 837.6 L427.8 839.2 V842.4 L425.0 844.0 L422.2 842.4 V839.2 Z M422.2 839.2 L425.0 840.8 L427.8 839.2 M425.0 840.8 V844.0" fill="#ecc9d2" fill-opacity="0.8" stroke="#7d2434" stroke-width="1.15"/><path d="M425.0 869.3 L427.8 870.9 V874.1 L425.0 875.7 L422.2 874.1 V870.9 Z M422.2 870.9 L425.0 872.5 L427.8 870.9 M425.0 872.5 V875.7" fill="#ecc9d2" fill-opacity="0.8" stroke="#7d2434" stroke-width="1.15"/><path d="M440.8 774.8 L443.6 776.4 V779.6 L440.8 781.2 L438.0 779.6 V776.4 Z M438.0 776.4 L440.8 778.0 L443.6 776.4 M440.8 778.0 V781.2" fill="#ecc9d2" fill-opacity="0.8" stroke="#7d2434" stroke-width="1.15"/><path d="M459.2 792.6 L462.0 794.2 V797.4 L459.2 799.0 L456.4 797.4 V794.2 Z M456.4 794.2 L459.2 795.8 L462.0 794.2 M459.2 795.8 V799.0" fill="#ecc9d2" fill-opacity="0.8" stroke="#7d2434" stroke-width="1.15"/><path d="M468.7 801.8 L471.5 803.4 V806.6 L468.7 808.2 L465.9 806.6 V803.4 Z M465.9 803.4 L468.7 805.0 L471.5 803.4 M468.7 805.0 V808.2" fill="#ecc9d2" fill-opacity="0.8" stroke="#7d2434" stroke-width="1.15"/><path d="M496.7 828.8 L499.5 830.4 V833.6 L496.7 835.2 L493.9 833.6 V830.4 Z M493.9 830.4 L496.7 832.0 L499.5 830.4 M496.7 832.0 V835.2" fill="#ecc9d2" fill-opacity="0.8" stroke="#7d2434" stroke-width="1.15"/><path d="M506.2 838.0 L509.0 839.6 V842.8 L506.2 844.4 L503.4 842.8 V839.6 Z M503.4 839.6 L506.2 841.2 L509.0 839.6 M506.2 841.2 V844.4" fill="#ecc9d2" fill-opacity="0.8" stroke="#7d2434" stroke-width="1.15"/><path d="M525.0 856.0 L527.8 857.6 V860.8 L525.0 862.4 L522.2 860.8 V857.6 Z M522.2 857.6 L525.0 859.2 L527.8 857.6 M525.0 859.2 V862.4" fill="#ecc9d2" fill-opacity="0.8" stroke="#7d2434" stroke-width="1.15"/><path d="M553.0 883.1 L555.8 884.7 V887.9 L553.0 889.5 L550.2 887.9 V884.7 Z M550.2 884.7 L553.0 886.3 L555.8 884.7 M553.0 886.3 V889.5" fill="#ecc9d2" fill-opacity="0.8" stroke="#7d2434" stroke-width="1.15"/><path d="M459.5 857.8 L462.3 859.4 V862.6 L459.5 864.2 L456.7 862.6 V859.4 Z M456.7 859.4 L459.5 861.0 L462.3 859.4 M459.5 861.0 V864.2" fill="#ecc9d2" fill-opacity="0.8" stroke="#7d2434" stroke-width="1.15"/><path d="M459.5 911.3 L462.3 912.9 V916.1 L459.5 917.7 L456.7 916.1 V912.9 Z M456.7 912.9 L459.5 914.5 L462.3 912.9 M459.5 914.5 V917.7" fill="#ecc9d2" fill-opacity="0.8" stroke="#7d2434" stroke-width="1.15"/><path d="M506.0 891.8 L508.8 893.4 V896.6 L506.0 898.2 L503.2 896.6 V893.4 Z M503.2 893.4 L506.0 895.0 L508.8 893.4 M506.0 895.0 V898.2" fill="#ecc9d2" fill-opacity="0.8" stroke="#7d2434" stroke-width="1.15"/><path d="M506.0 944.8 L508.8 946.4 V949.6 L506.0 951.2 L503.2 949.6 V946.4 Z M503.2 946.4 L506.0 948.0 L508.8 946.4 M506.0 948.0 V951.2" fill="#ecc9d2" fill-opacity="0.8" stroke="#7d2434" stroke-width="1.15"/><path d="M553.3 978.2 L556.1 979.8 V983.0 L553.3 984.6 L550.5 983.0 V979.8 Z M550.5 979.8 L553.3 981.4 L556.1 979.8 M553.3 981.4 V984.6" fill="#ecc9d2" fill-opacity="0.8" stroke="#7d2434" stroke-width="1.15"/><path d="M409.5 621.8 L412.3 623.4 V626.6 L409.5 628.2 L406.7 626.6 V623.4 Z M406.7 623.4 L409.5 625.0 L412.3 623.4 M409.5 625.0 V628.2" fill="#ecc9d2" fill-opacity="0.8" stroke="#7d2434" stroke-width="1.15"/><path d="M465.3 545.8 L468.1 547.4 V550.6 L465.3 552.2 L462.5 550.6 V547.4 Z M462.5 547.4 L465.3 549.0 L468.1 547.4 M465.3 549.0 V552.2" fill="#ecc9d2" fill-opacity="0.8" stroke="#7d2434" stroke-width="1.15"/><path d="M547.2 490.8 L550.0 492.4 V495.6 L547.2 497.2 L544.4 495.6 V492.4 Z M544.4 492.4 L547.2 494.0 L550.0 492.4 M547.2 494.0 V497.2" fill="#ecc9d2" fill-opacity="0.8" stroke="#7d2434" stroke-width="1.15"/><path d="M656.5 447.8 L659.3 449.4 V452.6 L656.5 454.2 L653.7 452.6 V449.4 Z M653.7 449.4 L656.5 451.0 L659.3 449.4 M656.5 451.0 V454.2" fill="#ecc9d2" fill-opacity="0.8" stroke="#7d2434" stroke-width="1.15"/><path d="M712.3 371.8 L715.1 373.4 V376.6 L712.3 378.2 L709.5 376.6 V373.4 Z M709.5 373.4 L712.3 375.0 L715.1 373.4 M712.3 375.0 V378.2" fill="#ecc9d2" fill-opacity="0.8" stroke="#7d2434" stroke-width="1.15"/><path d="M603.3 785.8 L606.1 787.4 V790.6 L603.3 792.2 L600.5 790.6 V787.4 Z M600.5 787.4 L603.3 789.0 L606.1 787.4 M603.3 789.0 V792.2" fill="#ecc9d2" fill-opacity="0.8" stroke="#7d2434" stroke-width="1.15"/><path d="M603.3 828.5 L606.1 830.1 V833.3 L603.3 834.9 L600.5 833.3 V830.1 Z M600.5 830.1 L603.3 831.7 L606.1 830.1 M603.3 831.7 V834.9" fill="#ecc9d2" fill-opacity="0.8" stroke="#7d2434" stroke-width="1.15"/><path d="M603.3 875.1 L606.1 876.7 V879.9 L603.3 881.5 L600.5 879.9 V876.7 Z M600.5 876.7 L603.3 878.3 L606.1 876.7 M603.3 878.3 V881.5" fill="#ecc9d2" fill-opacity="0.8" stroke="#7d2434" stroke-width="1.15"/><path d="M1014.6 495.1 L1017.4 496.7 V499.9 L1014.6 501.5 L1011.8 499.9 V496.7 Z M1011.8 496.7 L1014.6 498.3 L1017.4 496.7 M1014.6 498.3 V501.5" fill="#ecc9d2" fill-opacity="0.8" stroke="#7d2434" stroke-width="1.15"/><path d="M1014.6 539.3 L1017.4 540.9 V544.1 L1014.6 545.7 L1011.8 544.1 V540.9 Z M1011.8 540.9 L1014.6 542.5 L1017.4 540.9 M1014.6 542.5 V545.7" fill="#ecc9d2" fill-opacity="0.8" stroke="#7d2434" stroke-width="1.15"/><path d="M1014.6 583.8 L1017.4 585.4 V588.6 L1014.6 590.2 L1011.8 588.6 V585.4 Z M1011.8 585.4 L1014.6 587.0 L1017.4 585.4 M1014.6 587.0 V590.2" fill="#ecc9d2" fill-opacity="0.8" stroke="#7d2434" stroke-width="1.15"/><path d="M692.2 833.4 L695.0 835.0 V838.2 L692.2 839.8 L689.4 838.2 V835.0 Z M689.4 835.0 L692.2 836.6 L695.0 835.0 M692.2 836.6 V839.8" fill="#ecc9d2" fill-opacity="0.8" stroke="#7d2434" stroke-width="1.15"/><path d="M1020.3 600.8 L1023.1 602.4 V605.6 L1020.3 607.2 L1017.5 605.6 V602.4 Z M1017.5 602.4 L1020.3 604.0 L1023.1 602.4 M1020.3 604.0 V607.2" fill="#ecc9d2" fill-opacity="0.8" stroke="#7d2434" stroke-width="1.15"/><path d="M783.2 226.8 L786.0 228.4 V231.6 L783.2 233.2 L780.4 231.6 V228.4 Z M780.4 228.4 L783.2 230.0 L786.0 228.4 M783.2 230.0 V233.2" fill="#ecc9d2" fill-opacity="0.8" stroke="#7d2434" stroke-width="1.15"/><path d="M783.2 240.8 L786.0 242.4 V245.6 L783.2 247.2 L780.4 245.6 V242.4 Z M780.4 242.4 L783.2 244.0 L786.0 242.4 M783.2 244.0 V247.2" fill="#ecc9d2" fill-opacity="0.8" stroke="#7d2434" stroke-width="1.15"/><path d="M783.2 275.1 L786.0 276.7 V279.9 L783.2 281.5 L780.4 279.9 V276.7 Z M780.4 276.7 L783.2 278.3 L786.0 276.7 M783.2 278.3 V281.5" fill="#ecc9d2" fill-opacity="0.8" stroke="#7d2434" stroke-width="1.15"/><path d="M783.2 287.6 L786.0 289.2 V292.4 L783.2 294.0 L780.4 292.4 V289.2 Z M780.4 289.2 L783.2 290.8 L786.0 289.2 M783.2 290.8 V294.0" fill="#ecc9d2" fill-opacity="0.8" stroke="#7d2434" stroke-width="1.15"/><path d="M783.2 320.1 L786.0 321.7 V324.9 L783.2 326.5 L780.4 324.9 V321.7 Z M780.4 321.7 L783.2 323.3 L786.0 321.7 M783.2 323.3 V326.5" fill="#ecc9d2" fill-opacity="0.8" stroke="#7d2434" stroke-width="1.15"/><path d="M822.5 292.6 L825.3 294.2 V297.4 L822.5 299.0 L819.7 297.4 V294.2 Z M819.7 294.2 L822.5 295.8 L825.3 294.2 M822.5 295.8 V299.0" fill="#ecc9d2" fill-opacity="0.8" stroke="#7d2434" stroke-width="1.15"/><path d="M830.3 289.3 L833.1 290.9 V294.1 L830.3 295.7 L827.5 294.1 V290.9 Z M827.5 290.9 L830.3 292.5 L833.1 290.9 M830.3 292.5 V295.7" fill="#ecc9d2" fill-opacity="0.8" stroke="#7d2434" stroke-width="1.15"/><path d="M830.3 316.2 L833.1 317.8 V321.0 L830.3 322.6 L827.5 321.0 V317.8 Z M827.5 317.8 L830.3 319.4 L833.1 317.8 M830.3 319.4 V322.6" fill="#ecc9d2" fill-opacity="0.8" stroke="#7d2434" stroke-width="1.15"/><path d="M830.3 363.5 L833.1 365.1 V368.3 L830.3 369.9 L827.5 368.3 V365.1 Z M827.5 365.1 L830.3 366.7 L833.1 365.1 M830.3 366.7 V369.9" fill="#ecc9d2" fill-opacity="0.8" stroke="#7d2434" stroke-width="1.15"/><path d="M830.3 396.8 L833.1 398.4 V401.6 L830.3 403.2 L827.5 401.6 V398.4 Z M827.5 398.4 L830.3 400.0 L833.1 398.4 M830.3 400.0 V403.2" fill="#ecc9d2" fill-opacity="0.8" stroke="#7d2434" stroke-width="1.15"/><path d="M860.8 267.8 L863.6 269.4 V272.6 L860.8 274.2 L858.0 272.6 V269.4 Z M858.0 269.4 L860.8 271.0 L863.6 269.4 M860.8 271.0 V274.2" fill="#ecc9d2" fill-opacity="0.8" stroke="#7d2434" stroke-width="1.15"/><path d="M860.8 295.1 L863.6 296.7 V299.9 L860.8 301.5 L858.0 299.9 V296.7 Z M858.0 296.7 L860.8 298.3 L863.6 296.7 M860.8 298.3 V301.5" fill="#ecc9d2" fill-opacity="0.8" stroke="#7d2434" stroke-width="1.15"/><path d="M860.8 342.6 L863.6 344.2 V347.4 L860.8 349.0 L858.0 347.4 V344.2 Z M858.0 344.2 L860.8 345.8 L863.6 344.2 M860.8 345.8 V349.0" fill="#ecc9d2" fill-opacity="0.8" stroke="#7d2434" stroke-width="1.15"/><path d="M936.7 294.0 L939.5 295.6 V298.8 L936.7 300.4 L933.9 298.8 V295.6 Z M933.9 295.6 L936.7 297.2 L939.5 295.6 M936.7 297.2 V300.4" fill="#ecc9d2" fill-opacity="0.8" stroke="#7d2434" stroke-width="1.15"/><path d="M936.7 331.0 L939.5 332.6 V335.8 L936.7 337.4 L933.9 335.8 V332.6 Z M933.9 332.6 L936.7 334.2 L939.5 332.6 M936.7 334.2 V337.4" fill="#ecc9d2" fill-opacity="0.8" stroke="#7d2434" stroke-width="1.15"/><path d="M936.7 378.5 L939.5 380.1 V383.3 L936.7 384.9 L933.9 383.3 V380.1 Z M933.9 380.1 L936.7 381.7 L939.5 380.1 M936.7 381.7 V384.9" fill="#ecc9d2" fill-opacity="0.8" stroke="#7d2434" stroke-width="1.15"/><path d="M936.7 411.0 L939.5 412.6 V415.8 L936.7 417.4 L933.9 415.8 V412.6 Z M933.9 412.6 L936.7 414.2 L939.5 412.6 M936.7 414.2 V417.4" fill="#ecc9d2" fill-opacity="0.8" stroke="#7d2434" stroke-width="1.15"/><path d="M1005.0 329.8 L1007.8 331.4 V334.6 L1005.0 336.2 L1002.2 334.6 V331.4 Z M1002.2 331.4 L1005.0 333.0 L1007.8 331.4 M1005.0 333.0 V336.2" fill="#ecc9d2" fill-opacity="0.8" stroke="#7d2434" stroke-width="1.15"/><path d="M1005.0 378.5 L1007.8 380.1 V383.3 L1005.0 384.9 L1002.2 383.3 V380.1 Z M1002.2 380.1 L1005.0 381.7 L1007.8 380.1 M1005.0 381.7 V384.9" fill="#ecc9d2" fill-opacity="0.8" stroke="#7d2434" stroke-width="1.15"/><path d="M1005.0 426.3 L1007.8 427.9 V431.1 L1005.0 432.7 L1002.2 431.1 V427.9 Z M1002.2 427.9 L1005.0 429.5 L1007.8 427.9 M1005.0 429.5 V432.7" fill="#ecc9d2" fill-opacity="0.8" stroke="#7d2434" stroke-width="1.15"/><path d="M1005.0 459.3 L1007.8 460.9 V464.1 L1005.0 465.7 L1002.2 464.1 V460.9 Z M1002.2 460.9 L1005.0 462.5 L1007.8 460.9 M1005.0 462.5 V465.7" fill="#ecc9d2" fill-opacity="0.8" stroke="#7d2434" stroke-width="1.15"/><path d="M1031.7 360.8 L1034.5 362.4 V365.6 L1031.7 367.2 L1028.9 365.6 V362.4 Z M1028.9 362.4 L1031.7 364.0 L1034.5 362.4 M1031.7 364.0 V367.2" fill="#ecc9d2" fill-opacity="0.8" stroke="#7d2434" stroke-width="1.15"/><path d="M1031.7 387.4 L1034.5 389.0 V392.2 L1031.7 393.8 L1028.9 392.2 V389.0 Z M1028.9 389.0 L1031.7 390.6 L1034.5 389.0 M1031.7 390.6 V393.8" fill="#ecc9d2" fill-opacity="0.8" stroke="#7d2434" stroke-width="1.15"/><path d="M1031.7 408.5 L1034.5 410.1 V413.3 L1031.7 414.9 L1028.9 413.3 V410.1 Z M1028.9 410.1 L1031.7 411.7 L1034.5 410.1 M1031.7 411.7 V414.9" fill="#ecc9d2" fill-opacity="0.8" stroke="#7d2434" stroke-width="1.15"/><path d="M1031.7 441.0 L1034.5 442.6 V445.8 L1031.7 447.4 L1028.9 445.8 V442.6 Z M1028.9 442.6 L1031.7 444.2 L1034.5 442.6 M1031.7 444.2 V447.4" fill="#ecc9d2" fill-opacity="0.8" stroke="#7d2434" stroke-width="1.15"/><path d="M1060.0 337.4 L1062.8 339.0 V342.2 L1060.0 343.8 L1057.2 342.2 V339.0 Z M1057.2 339.0 L1060.0 340.6 L1062.8 339.0 M1060.0 340.6 V343.8" fill="#ecc9d2" fill-opacity="0.8" stroke="#7d2434" stroke-width="1.15"/><path d="M1078.1 355.2 L1080.9 356.8 V360.0 L1078.1 361.6 L1075.3 360.0 V356.8 Z M1075.3 356.8 L1078.1 358.4 L1080.9 356.8 M1078.1 358.4 V361.6" fill="#ecc9d2" fill-opacity="0.8" stroke="#7d2434" stroke-width="1.15"/><path d="M1087.8 364.3 L1090.6 365.9 V369.1 L1087.8 370.7 L1085.0 369.1 V365.9 Z M1085.0 365.9 L1087.8 367.5 L1090.6 365.9 M1087.8 367.5 V370.7" fill="#ecc9d2" fill-opacity="0.8" stroke="#7d2434" stroke-width="1.15"/><path d="M1116.0 391.2 L1118.8 392.8 V396.0 L1116.0 397.6 L1113.2 396.0 V392.8 Z M1113.2 392.8 L1116.0 394.4 L1118.8 392.8 M1116.0 394.4 V397.6" fill="#ecc9d2" fill-opacity="0.8" stroke="#7d2434" stroke-width="1.15"/><path d="M1125.6 400.6 L1128.4 402.2 V405.4 L1125.6 407.0 L1122.8 405.4 V402.2 Z M1122.8 402.2 L1125.6 403.8 L1128.4 402.2 M1125.6 403.8 V407.0" fill="#ecc9d2" fill-opacity="0.8" stroke="#7d2434" stroke-width="1.15"/><path d="M1143.8 417.6 L1146.6 419.2 V422.4 L1143.8 424.0 L1141.0 422.4 V419.2 Z M1141.0 419.2 L1143.8 420.8 L1146.6 419.2 M1143.8 420.8 V424.0" fill="#ecc9d2" fill-opacity="0.8" stroke="#7d2434" stroke-width="1.15"/><path d="M1172.2 445.1 L1175.0 446.7 V449.9 L1172.2 451.5 L1169.4 449.9 V446.7 Z M1169.4 446.7 L1172.2 448.3 L1175.0 446.7 M1172.2 448.3 V451.5" fill="#ecc9d2" fill-opacity="0.8" stroke="#7d2434" stroke-width="1.15"/><path d="M1172.2 540.1 L1175.0 541.7 V544.9 L1172.2 546.5 L1169.4 544.9 V541.7 Z M1169.4 541.7 L1172.2 543.3 L1175.0 541.7 M1172.2 543.3 V546.5" fill="#ecc9d2" fill-opacity="0.8" stroke="#7d2434" stroke-width="1.15"/><path d="M1078.3 420.1 L1081.1 421.7 V424.9 L1078.3 426.5 L1075.5 424.9 V421.7 Z M1075.5 421.7 L1078.3 423.3 L1081.1 421.7 M1078.3 423.3 V426.5" fill="#ecc9d2" fill-opacity="0.8" stroke="#7d2434" stroke-width="1.15"/><path d="M1078.2 474.3 L1081.0 475.9 V479.1 L1078.2 480.7 L1075.4 479.1 V475.9 Z M1075.4 475.9 L1078.2 477.5 L1081.0 475.9 M1078.2 477.5 V480.7" fill="#ecc9d2" fill-opacity="0.8" stroke="#7d2434" stroke-width="1.15"/><path d="M1125.3 453.5 L1128.1 455.1 V458.3 L1125.3 459.9 L1122.5 458.3 V455.1 Z M1122.5 455.1 L1125.3 456.7 L1128.1 455.1 M1125.3 456.7 V459.9" fill="#ecc9d2" fill-opacity="0.8" stroke="#7d2434" stroke-width="1.15"/><path d="M1125.3 461.0 L1128.1 462.6 V465.8 L1125.3 467.4 L1122.5 465.8 V462.6 Z M1122.5 462.6 L1125.3 464.2 L1128.1 462.6 M1125.3 464.2 V467.4" fill="#ecc9d2" fill-opacity="0.8" stroke="#7d2434" stroke-width="1.15"/><path d="M1125.3 506.8 L1128.1 508.4 V511.6 L1125.3 513.2 L1122.5 511.6 V508.4 Z M1122.5 508.4 L1125.3 510.0 L1128.1 508.4 M1125.3 510.0 V513.2" fill="#ecc9d2" fill-opacity="0.8" stroke="#7d2434" stroke-width="1.15"/><path d="M651.2 826.3 L654.0 827.9 V831.1 L651.2 832.7 L648.4 831.1 V827.9 Z M648.4 827.9 L651.2 829.5 L654.0 827.9 M651.2 829.5 V832.7" fill="#ecc9d2" fill-opacity="0.8" stroke="#7d2434" stroke-width="1.15"/><path d="M651.2 863.3 L654.0 864.9 V868.1 L651.2 869.7 L648.4 868.1 V864.9 Z M648.4 864.9 L651.2 866.5 L654.0 864.9 M651.2 866.5 V869.7" fill="#ecc9d2" fill-opacity="0.8" stroke="#7d2434" stroke-width="1.15"/><path d="M651.2 908.3 L654.0 909.9 V913.1 L651.2 914.7 L648.4 913.1 V909.9 Z M648.4 909.9 L651.2 911.5 L654.0 909.9 M651.2 911.5 V914.7" fill="#ecc9d2" fill-opacity="0.8" stroke="#7d2434" stroke-width="1.15"/><path d="M733.4 768.3 L736.2 769.9 V773.1 L733.4 774.7 L730.6 773.1 V769.9 Z M730.6 769.9 L733.4 771.5 L736.2 769.9 M733.4 771.5 V774.7" fill="#ecc9d2" fill-opacity="0.8" stroke="#7d2434" stroke-width="1.15"/><path d="M733.4 805.3 L736.2 806.9 V810.1 L733.4 811.7 L730.6 810.1 V806.9 Z M730.6 806.9 L733.4 808.5 L736.2 806.9 M733.4 808.5 V811.7" fill="#ecc9d2" fill-opacity="0.8" stroke="#7d2434" stroke-width="1.15"/><path d="M733.4 850.3 L736.2 851.9 V855.1 L733.4 856.7 L730.6 855.1 V851.9 Z M730.6 851.9 L733.4 853.5 L736.2 851.9 M733.4 853.5 V856.7" fill="#ecc9d2" fill-opacity="0.8" stroke="#7d2434" stroke-width="1.15"/><path d="M815.6 710.3 L818.4 711.9 V715.1 L815.6 716.7 L812.8 715.1 V711.9 Z M812.8 711.9 L815.6 713.5 L818.4 711.9 M815.6 713.5 V716.7" fill="#ecc9d2" fill-opacity="0.8" stroke="#7d2434" stroke-width="1.15"/><path d="M815.6 747.3 L818.4 748.9 V752.1 L815.6 753.7 L812.8 752.1 V748.9 Z M812.8 748.9 L815.6 750.5 L818.4 748.9 M815.6 750.5 V753.7" fill="#ecc9d2" fill-opacity="0.8" stroke="#7d2434" stroke-width="1.15"/><path d="M815.6 792.3 L818.4 793.9 V797.1 L815.6 798.7 L812.8 797.1 V793.9 Z M812.8 793.9 L815.6 795.5 L818.4 793.9 M815.6 795.5 V798.7" fill="#ecc9d2" fill-opacity="0.8" stroke="#7d2434" stroke-width="1.15"/><path d="M897.7 652.3 L900.5 653.9 V657.1 L897.7 658.7 L894.9 657.1 V653.9 Z M894.9 653.9 L897.7 655.5 L900.5 653.9 M897.7 655.5 V658.7" fill="#ecc9d2" fill-opacity="0.8" stroke="#7d2434" stroke-width="1.15"/><path d="M897.7 689.3 L900.5 690.9 V694.1 L897.7 695.7 L894.9 694.1 V690.9 Z M894.9 690.9 L897.7 692.5 L900.5 690.9 M897.7 692.5 V695.7" fill="#ecc9d2" fill-opacity="0.8" stroke="#7d2434" stroke-width="1.15"/><path d="M897.7 734.3 L900.5 735.9 V739.1 L897.7 740.7 L894.9 739.1 V735.9 Z M894.9 735.9 L897.7 737.5 L900.5 735.9 M897.7 737.5 V740.7" fill="#ecc9d2" fill-opacity="0.8" stroke="#7d2434" stroke-width="1.15"/><path d="M979.9 594.3 L982.7 595.9 V599.1 L979.9 600.7 L977.1 599.1 V595.9 Z M977.1 595.9 L979.9 597.5 L982.7 595.9 M979.9 597.5 V600.7" fill="#ecc9d2" fill-opacity="0.8" stroke="#7d2434" stroke-width="1.15"/><path d="M979.9 631.3 L982.7 632.9 V636.1 L979.9 637.7 L977.1 636.1 V632.9 Z M977.1 632.9 L979.9 634.5 L982.7 632.9 M979.9 634.5 V637.7" fill="#ecc9d2" fill-opacity="0.8" stroke="#7d2434" stroke-width="1.15"/><path d="M979.9 676.3 L982.7 677.9 V681.1 L979.9 682.7 L977.1 681.1 V677.9 Z M977.1 677.9 L979.9 679.5 L982.7 677.9 M979.9 679.5 V682.7" fill="#ecc9d2" fill-opacity="0.8" stroke="#7d2434" stroke-width="1.15"/><path d="M1062.1 536.3 L1064.9 537.9 V541.1 L1062.1 542.7 L1059.3 541.1 V537.9 Z M1059.3 537.9 L1062.1 539.5 L1064.9 537.9 M1062.1 539.5 V542.7" fill="#ecc9d2" fill-opacity="0.8" stroke="#7d2434" stroke-width="1.15"/><path d="M1062.1 573.3 L1064.9 574.9 V578.1 L1062.1 579.7 L1059.3 578.1 V574.9 Z M1059.3 574.9 L1062.1 576.5 L1064.9 574.9 M1062.1 576.5 V579.7" fill="#ecc9d2" fill-opacity="0.8" stroke="#7d2434" stroke-width="1.15"/><path d="M1062.1 618.3 L1064.9 619.9 V623.1 L1062.1 624.7 L1059.3 623.1 V619.9 Z M1059.3 619.9 L1062.1 621.5 L1064.9 619.9 M1062.1 621.5 V624.7" fill="#ecc9d2" fill-opacity="0.8" stroke="#7d2434" stroke-width="1.15"/><path d="M203.3 627.0 L213.1 632.7 V643.9 L203.3 649.6 L193.5 643.9 V632.7 Z M193.5 632.7 L203.3 638.3 L213.1 632.7 M203.3 638.3 V649.6" fill="none" stroke="#8a2c3a" stroke-width="1"/><path d="M203.3 627.0 V638.3 M193.5 643.9 L203.3 638.3 L213.1 643.9" fill="none" stroke="#8a2c3a" stroke-width="0.6" opacity="0.7"/><path d="M308.3 685.4 L318.1 691.1 V702.3 L308.3 708.0 L298.5 702.3 V691.1 Z M298.5 691.1 L308.3 696.7 L318.1 691.1 M308.3 696.7 V708.0" fill="none" stroke="#8a2c3a" stroke-width="1"/><path d="M308.3 685.4 V696.7 M298.5 702.3 L308.3 696.7 L318.1 702.3" fill="none" stroke="#8a2c3a" stroke-width="0.6" opacity="0.7"/><path d="M412.0 738.7 L421.8 744.4 V755.6 L412.0 761.3 L402.2 755.6 V744.4 Z M402.2 744.4 L412.0 750.0 L421.8 744.4 M412.0 750.0 V761.3" fill="none" stroke="#8a2c3a" stroke-width="1"/><path d="M412.0 738.7 V750.0 M402.2 755.6 L412.0 750.0 L421.8 755.6" fill="none" stroke="#8a2c3a" stroke-width="0.6" opacity="0.7"/><path d="M822.5 189.5 L832.3 195.2 V206.4 L822.5 212.1 L812.7 206.4 V195.2 Z M812.7 195.2 L822.5 200.8 L832.3 195.2 M822.5 200.8 V212.1" fill="none" stroke="#8a2c3a" stroke-width="1"/><path d="M822.5 189.5 V200.8 M812.7 206.4 L822.5 200.8 L832.3 206.4" fill="none" stroke="#8a2c3a" stroke-width="0.6" opacity="0.7"/><path d="M926.7 245.9 L936.5 251.6 V262.8 L926.7 268.5 L916.9 262.8 V251.6 Z M916.9 251.6 L926.7 257.2 L936.5 251.6 M926.7 257.2 V268.5" fill="none" stroke="#8a2c3a" stroke-width="1"/><path d="M926.7 245.9 V257.2 M916.9 262.8 L926.7 257.2 L936.5 262.8" fill="none" stroke="#8a2c3a" stroke-width="0.6" opacity="0.7"/><path d="M1031.9 301.8 L1041.7 307.5 V318.7 L1031.9 324.4 L1022.1 318.7 V307.5 Z M1022.1 307.5 L1031.9 313.1 L1041.7 307.5 M1031.9 313.1 V324.4" fill="none" stroke="#8a2c3a" stroke-width="1"/><path d="M1031.9 301.8 V313.1 M1022.1 318.7 L1031.9 313.1 L1041.7 318.7" fill="none" stroke="#8a2c3a" stroke-width="0.6" opacity="0.7"/><path d="M301.7 610.8 L308.2 614.6 V622.0 L301.7 625.8 L295.2 622.0 V614.6 Z M295.2 614.6 L301.7 618.3 L308.2 614.6 M301.7 618.3 V625.8" fill="none" stroke="#8a2c3a" stroke-width="1"/><path d="M301.7 610.8 V618.3 M295.2 622.0 L301.7 618.3 L308.2 622.0" fill="none" stroke="#8a2c3a" stroke-width="0.6" opacity="0.7"/><path d="M465.5 495.5 L472.0 499.3 V506.7 L465.5 510.5 L459.0 506.7 V499.3 Z M459.0 499.3 L465.5 503.0 L472.0 499.3 M465.5 503.0 V510.5" fill="none" stroke="#8a2c3a" stroke-width="1"/><path d="M465.5 495.5 V503.0 M459.0 506.7 L465.5 503.0 L472.0 506.7" fill="none" stroke="#8a2c3a" stroke-width="0.6" opacity="0.7"/><path d="M547.8 436.3 L554.3 440.1 V447.5 L547.8 451.3 L541.3 447.5 V440.1 Z M541.3 440.1 L547.8 443.8 L554.3 440.1 M547.8 443.8 V451.3" fill="none" stroke="#8a2c3a" stroke-width="1"/><path d="M547.8 436.3 V443.8 M541.3 447.5 L547.8 443.8 L554.3 447.5" fill="none" stroke="#8a2c3a" stroke-width="0.6" opacity="0.7"/><path d="M712.3 321.0 L718.8 324.8 V332.2 L712.3 336.0 L705.8 332.2 V324.8 Z M705.8 324.8 L712.3 328.5 L718.8 324.8 M712.3 328.5 V336.0" fill="none" stroke="#8a2c3a" stroke-width="1"/><path d="M712.3 321.0 V328.5 M705.8 332.2 L712.3 328.5 L718.8 332.2" fill="none" stroke="#8a2c3a" stroke-width="0.6" opacity="0.7"/></g></svg>
<div class="a brushed" style="left:0;top:0;width:1920px;height:56px;"></div>
<div class="a" style="left:0;top:56px;width:1920px;height:5px;background:#e8762c;"></div>
<svg style="left:14px;top:6px" width="70" height="22" viewBox="0 0 70 22">
<polygon points="6.5,0.8 68,0.8 62,20.8 0.8,20.8" fill="#e8762c"/>
</svg>
<span class="t" style="left:20.5px;top:3.8px;font-size:18.5px;line-height:26px;color:#0b0b0b;letter-spacing:3.200px;font-weight:bold;font-style:italic;-webkit-text-stroke:1.6px #0b0b0b;">IDEA</span>
<span class="t" style="left:85.3px;top:1.8px;font-size:20.5px;line-height:29px;color:#fff;letter-spacing:-0.189px;font-weight:bold;font-style:italic;">StatiCa</span>
<span class="t" style="left:156.5px;top:5.0px;font-size:7px;line-height:10px;color:#ddd;letter-spacing:0.842px;">®</span>
<span class="t" style="left:181.6px;top:5.7px;font-size:15.3px;line-height:21px;color:#fff;letter-spacing:0.400px;font-weight:bold;font-style:italic;">Checkbot</span>
<span class="t" style="left:13.9px;top:32.8px;font-size:9.3px;line-height:13px;color:#fff;letter-spacing:-0.149px;font-weight:bold;font-style:italic;">Calculate yesterday's estimates</span>
<div class="a" style="left:215px;top:33px;width:100px;height:23px;background:#9b9b9b;border-radius:5px 5px 0 0;"></div>
<div class="a" style="left:319px;top:33px;width:100px;height:24px;background:#e8762c;border-radius:5px 5px 0 0;"></div>
<div class="a" style="left:423px;top:33px;width:99px;height:23px;background:#9b9b9b;border-radius:5px 5px 0 0;"></div>
<svg style="left:256px;top:37px" width="18" height="15" viewBox="0 0 18 15"><path d="M1.5 7.5 L9 1.5 L16.5 7.5 M3.8 6.5 V13.5 H14.2 V6.5" fill="none" stroke="#7c7c7c" stroke-width="1.4"/></svg>
<span class="t" style="left:349.0px;top:35.5px;font-size:12.5px;line-height:18px;color:#fff;letter-spacing:-0.339px;font-weight:bold;">Project</span>
<span class="t" style="left:446.0px;top:35.5px;font-size:12.5px;line-height:18px;color:#fff;letter-spacing:-0.299px;font-weight:bold;">Materials</span>
<span class="t" style="left:921.7px;top:6.5px;font-size:13.5px;line-height:19px;color:#f2f2f2;letter-spacing:0.024px;">RISA3D import Z Axis</span>
<div class="a" style="left:1841px;top:8px;width:17px;height:17px;background:#f0f0f0;border-radius:3px;"></div>
<div class="a" style="left:1845px;top:19px;width:9px;height:2px;background:#111;"></div>
<div class="a" style="left:1868px;top:8px;width:17px;height:17px;background:#f0f0f0;border-radius:3px;"></div>
<div class="a" style="left:1871.5px;top:11.5px;width:7px;height:7px;border:1.5px solid #111;border-top-width:2.5px;"></div>
<div class="a" style="left:1895px;top:8px;width:17px;height:17px;background:#e8762c;border-radius:3px;"></div>
<svg style="left:1895px;top:8px" width="17" height="17"><path d="M4.5 4.5 L12.5 12.5 M12.5 4.5 L4.5 12.5" stroke="#111" stroke-width="2.2"/></svg>
<div class="a" style="left:1630px;top:33px;width:200px;height:18px;background:#fff;"></div>
<svg style="left:1810px;top:34px" width="20" height="17"><circle cx="7.5" cy="6.5" r="4.3" fill="none" stroke="#bbb" stroke-width="1.6"/><path d="M10.5 9.5 L16 15" stroke="#bbb" stroke-width="2.2"/></svg>
<div class="a" style="left:1895px;top:33px;width:17px;height:17px;background:#e8762c;border-radius:3px;"></div>
<div class="a" style="left:1902.5px;top:36.5px;width:2px;height:2px;background:#111;"></div><div class="a" style="left:1902.5px;top:40px;width:2px;height:6.5px;background:#111;"></div>
<div class="a" style="left:0;top:61px;width:1920px;height:96px;background:#fff;"></div>
<div class="a" style="left:0;top:157px;width:1412px;height:1px;background:#c4c4c4;"></div>
<div class="sep" style="left:124px"></div>
<div class="sep" style="left:288px"></div>
<div class="sep" style="left:506px"></div>
<div class="sep" style="left:725px"></div>
<div class="sep" style="left:891px"></div>
<div class="sep" style="left:1016px"></div>
<div class="sep" style="left:1423px"></div>
<div class="sep" style="left:1591px"></div>
<div class="a" style="left:1069px;top:67.5px;width:22px;height:21.5px;background:#c9c9c9;"></div>
<div class="a" style="left:1121px;top:93px;width:70px;height:21.5px;background:#c9c9c9;"></div>
<div class="a" style="left:1166px;top:67px;width:99px;height:25px;border:1px solid #b4b4b4;box-sizing:border-box;background:#fff;"></div>
<div class="a" style="left:1319px;top:67px;width:100px;height:26px;border:1px solid #b4b4b4;box-sizing:border-box;background:#fff;"></div>
<div class="a" style="left:1319px;top:93px;width:100px;height:26px;border:1px solid #b4b4b4;box-sizing:border-box;background:#fff;"></div>
<svg style="left:0;top:0" width="1920" height="160" viewBox="0 0 1920 160"><path d="M19 81.5 H10.8 V99.5 H37 V81.5 H31" fill="none" stroke="#a3a3a3" stroke-width="1.6"/>
<path d="M25 72 V90 M20.5 85.5 L25 90.5 L29.5 85.5" fill="none" stroke="#a3a3a3" stroke-width="1.5"/>
<path d="M57 81.5 H48.8 V99.5 H77 V81.5 H69" fill="none" stroke="#a3a3a3" stroke-width="1.6"/>
<path d="M63 72 V90 M58.5 85.5 L63 90.5 L67.5 85.5" fill="none" stroke="#a3a3a3" stroke-width="1.5"/>
<path d="M94.8 81.5 H87 V99.5 H115 V81.5 H106.8" fill="none" stroke="#a3a3a3" stroke-width="1.6"/>
<path d="M100.8 72 V90 M96.3 85.5 L100.8 90.5 L105.3 85.5" fill="none" stroke="#a3a3a3" stroke-width="1.5"/>
<path d="M150.5 94 L157 82 H173 L179.5 94 Z" fill="#a3a3a3" opacity="0.75"/><rect x="150" y="94.5" width="30" height="1.5" fill="#a3a3a3"/>
<path d="M165 77 L160 83 H163.3 V90 H166.7 V83 H170 Z" fill="#fff" stroke="#a3a3a3" stroke-width="1.2"/>
<path d="M161.8 121.4 H168.2 L165 125.8 Z" fill="#a3a3a3"/>
<path d="M227 71 V93 M232.5 71 V93" stroke="#a3a3a3" stroke-width="2.2"/><path d="M234 79 H246 M234 83.5 H241" stroke="#a3a3a3" stroke-width="1.3"/>
<circle cx="244.5" cy="90" r="4.8" fill="#fff" stroke="#a3a3a3" stroke-width="1.8"/><path d="M248 93.5 L255 100.5" stroke="#a3a3a3" stroke-width="2.6"/>
<rect x="301" y="83.2" width="28" height="5.6" fill="#5a5a5a"/><rect x="313.5" y="71" width="3" height="9.3" fill="#5a5a5a"/><rect x="313.5" y="91.7" width="3" height="9.3" fill="#5a5a5a"/>
<rect x="351" y="77" width="24" height="3.4" fill="#333"/><rect x="351" y="91.5" width="24" height="3.4" fill="#333"/><path d="M351.5 76 V81.5 M374.5 76 V81.5 M351.5 90.5 V96 M374.5 90.5 V96" stroke="#333" stroke-width="1"/>
<path d="M352 81 V84 L348 86 L352 87.5 V91 M374 81 V84.5 L378 86 L374 88 V91" fill="none" stroke="#333" stroke-width="1"/>
<rect x="413.8" y="87.7" width="28.2" height="6.3" fill="#5a5a5a"/><path d="M415.5 81.5 L419 78.3 L428 85 L437 78.3 L440.5 81.5 L431 89 H425 Z" fill="#5a5a5a"/>
<path d="M480 72 V88.5 H496 M480 88.5 L469 99.5" fill="none" stroke="#5a5a5a" stroke-width="1.4"/><path d="M480 70.5 L477 76 H483 Z M498.5 88.5 L493 85.5 V91.5 Z M467 101.5 L468.5 95.5 L473 100 Z" fill="#5a5a5a"/>
<path d="M517.5 96 V76 H528 L530.5 79 H545.5 V81.5 M517.5 96 L522 81.5 H546.5 L543 96 Z" fill="none" stroke="#a3a3a3" stroke-width="1.5" stroke-linejoin="round"/>
<path d="M563 77.5 A12.3 12.3 0 1 0 577 77.5" fill="none" stroke="#a3a3a3" stroke-width="1.5"/><path d="M570 72 V85" stroke="#a3a3a3" stroke-width="1.5"/>
<rect x="601.3" y="71.5" width="13" height="13" fill="#b4b4b4"/>
<rect x="618" y="71.5" width="13" height="13" fill="#b4b4b4"/>
<rect x="601.3" y="88" width="13" height="13" fill="#b4b4b4"/>
<rect x="618" y="88" width="13" height="13" fill="#b4b4b4"/>
<path d="M604.5 78 H611 M607.8 74.7 V81.3 M621.2 78 H627.8 M605.3 92 L610.3 97 M610.3 92 L605.3 97 M621.2 94.5 H627.8" stroke="#fff" stroke-width="1.5"/><rect x="623.7" y="90.7" width="1.6" height="1.6" fill="#fff"/><rect x="623.7" y="96.7" width="1.6" height="1.6" fill="#fff"/>
<path d="M673 76.5 A13 13 0 1 0 676 86.5" fill="none" stroke="#a3a3a3" stroke-width="1.5"/><path d="M667.5 80.5 H676 V72" fill="none" stroke="#a3a3a3" stroke-width="1.5"/>
<path d="M696.5 72 H711.5 V99.5 H690.5 V78 Z M696.5 72 V78 H690.5" fill="none" stroke="#a3a3a3" stroke-width="1.5" stroke-linejoin="round"/><path d="M695 83.5 L707 95.5 M707 83.5 L695 95.5" stroke="#a3a3a3" stroke-width="1.5"/>
<path d="M736 77.3 H766" stroke="#a3a3a3" stroke-width="2.3"/><rect x="756.3" y="74.5" width="4.4" height="5.6" fill="#fff" stroke="#a3a3a3" stroke-width="1.2"/>
<path d="M736 86 H766" stroke="#a3a3a3" stroke-width="2.3"/><rect x="750.8" y="83.2" width="4.4" height="5.6" fill="#fff" stroke="#a3a3a3" stroke-width="1.2"/>
<path d="M736 94.7 H766" stroke="#a3a3a3" stroke-width="2.3"/><rect x="756.3" y="91.9" width="4.4" height="5.6" fill="#fff" stroke="#a3a3a3" stroke-width="1.2"/>
<rect x="774.3" y="71.5" width="6.8" height="6.8" fill="#b4b4b4"/>
<rect x="783.0999999999999" y="71.5" width="6.8" height="6.8" fill="#b4b4b4"/>
<rect x="774.3" y="80.3" width="6.8" height="6.8" fill="#b4b4b4"/>
<rect x="783.0999999999999" y="80.3" width="6.8" height="6.8" fill="#b4b4b4"/>
<rect x="774.3" y="89.1" width="6.8" height="6.8" fill="#b4b4b4"/>
<rect x="783.0999999999999" y="89.1" width="6.8" height="6.8" fill="#b4b4b4"/>
<circle cx="795.5" cy="91.5" r="8.5" fill="#fff"/><path d="M801.5 86 A8 8 0 1 0 803.5 91.5" fill="none" stroke="#a3a3a3" stroke-width="1.3"/><path d="M798 88.5 H803.5 V83" fill="none" stroke="#a3a3a3" stroke-width="1.3"/>
<path d="M816.5 83.5 L825 87.7 L816.5 92 M840.5 83.5 L832 87.7 L840.5 92" fill="none" stroke="#b4b4b4" stroke-width="1.4"/>
<path d="M864.5 83 L856 87.2 L864.5 91.5 M870.5 83 L879 87.2 L870.5 91.5" fill="none" stroke="#b4b4b4" stroke-width="1.4"/>
<path d="M919.7 76.7 L919.9 73.6 L924.1 73.6 L924.3 76.7 L927.0 77.8 L929.3 75.7 L932.3 78.7 L930.2 81.0 L931.3 83.7 L934.4 83.9 L934.4 88.1 L931.3 88.3 L930.2 91.0 L932.3 93.3 L929.3 96.3 L927.0 94.2 L924.3 95.3 L924.1 98.4 L919.9 98.4 L919.7 95.3 L917.0 94.2 L914.7 96.3 L911.7 93.3 L913.8 91.0 L912.7 88.3 L909.6 88.1 L909.6 83.9 L912.7 83.7 L913.8 81.0 L911.7 78.7 L914.7 75.7 L917.0 77.8 Z" fill="none" stroke="#4a4a4a" stroke-width="2.3" stroke-linejoin="round"/><circle cx="922" cy="86" r="4.2" fill="none" stroke="#4a4a4a" stroke-width="2.2"/>
<rect x="963.7" y="76.3" width="18.8" height="5.6" rx="0.8" fill="#9d9d9d"/>
<rect x="963.7" y="83.2" width="18.8" height="5.6" rx="0.8" fill="#9d9d9d"/>
<rect x="963.7" y="90.1" width="18.8" height="5.6" rx="0.8" fill="#9d9d9d"/>
<rect x="966" y="78" width="2.2" height="2.2" fill="#fff"/>
<path d="M984.5 83.3 H993.5 M990 80 L993.5 83.3 L990 86.6 M994 90.5 H985 M988.5 87.2 L985 90.5 L988.5 93.8" fill="none" stroke="#a8a8a8" stroke-width="1.3"/>
<path d="M1028.5 75.7 H1056" stroke="#777" stroke-width="1.2"/><rect x="1028" y="95.5" width="28.5" height="3.5" fill="#9d9d9d"/>
<path d="M1030.5 76 V95" stroke="#777" stroke-width="1"/>
<path d="M1034 76 V95" stroke="#777" stroke-width="1"/>
<path d="M1050 76 V95" stroke="#777" stroke-width="1"/>
<path d="M1053.5 76 V95" stroke="#777" stroke-width="1"/>
<circle cx="1042" cy="85.5" r="5.3" fill="#fff" stroke="#555" stroke-width="1.3"/><path d="M1038 85.5 H1046 M1042 81.5 V89.5" stroke="#555" stroke-width="1.2"/>
<path d="M1131 109 L1136 98 L1142 108 Z M1136 98 V105.5 L1131 109 M1136 105.5 L1142 108" fill="none" stroke="#555" stroke-width="1"/><ellipse cx="1137" cy="104" rx="4" ry="3" fill="none" stroke="#555" stroke-width="0.9"/><path d="M1141 103.7 H1144.5" stroke="#555" stroke-width="1"/>
<path d="M1207.5 98.5 V105 H1215 M1207.5 105 L1202.5 110" fill="none" stroke="#555" stroke-width="1"/><path d="M1207.5 97.3 L1206 100 H1209 Z M1216.3 105 L1213.7 103.6 V106.4 Z M1201.5 111 L1202.3 108.2 L1204.3 110.2 Z" fill="#555"/>
<path d="M1253.3 78 H1260 L1256.7 82.3 Z" fill="#333"/>
<path d="M1407 104.5 H1413.6 L1410.3 108.8 Z" fill="#333"/>
<path d="M1407.4 76.6 H1412.8 L1410.1 72.8 Z M1407.4 84.2 H1412.8 L1410.1 88 Z" fill="#333"/>
<path d="M1448.4 76.4 H1460.4 M1454.4 70.4 V82.4" stroke="#5b9bea" stroke-width="3.8"/>
<path d="M1507.6 76.4 H1519.6 M1513.6 70.4 V82.4" stroke="#5b9bea" stroke-width="3.8"/>
<path d="M1552.4 76.4 H1564.4 M1558.4 70.4 V82.4" stroke="#5b9bea" stroke-width="3.8"/>
<rect x="1451.6" y="93.2" width="24.8" height="6.2" fill="#5a5a5a"/><path d="M1452.5 89 L1455.5 86.3 L1464 92.5 L1472.5 86.3 L1475.5 89 L1467 95 H1461 Z" fill="#5a5a5a"/>
<rect x="1510.2" y="87.5" width="3.4" height="12" fill="#5a5a5a"/><rect x="1532.3" y="87.5" width="3.4" height="12" fill="#5a5a5a"/><rect x="1512" y="91.3" width="22" height="4.2" fill="#5a5a5a"/>
<path d="M1556.3 87 H1580.2 V99.4 H1571 L1565 93.5 H1559.5 L1558 95.5 H1556.3 Z" fill="#5a5a5a"/></svg>
<span class="t" style="left:13.3px;top:101.5px;font-size:12px;line-height:17px;color:#1e1e1e;letter-spacing:-0.154px;">IOM</span>
<span class="t" style="left:53.3px;top:101.5px;font-size:12px;line-height:17px;color:#1e1e1e;letter-spacing:-1.213px;">SAF</span>
<span class="t" style="left:88.3px;top:101.5px;font-size:12px;line-height:17px;color:#1e1e1e;letter-spacing:-0.255px;">RAM</span>
<span class="t" style="left:131.7px;top:101.5px;font-size:12px;line-height:17px;color:#a0a0a0;letter-spacing:-0.082px;">Connections</span>
<span class="t" style="left:201.7px;top:101.5px;font-size:12px;line-height:17px;color:#a0a0a0;letter-spacing:-0.194px;">Open in Viewer</span>
<span class="t" style="left:298.3px;top:101.5px;font-size:12px;line-height:17px;color:#1e1e1e;letter-spacing:-0.257px;">Nodes</span>
<span class="t" style="left:338.3px;top:101.5px;font-size:12px;line-height:17px;color:#1e1e1e;letter-spacing:-0.115px;">Members</span>
<span class="t" style="left:394.7px;top:101.5px;font-size:12px;line-height:17px;color:#1e1e1e;letter-spacing:-0.055px;">Connections</span>
<span class="t" style="left:473.0px;top:101.5px;font-size:12px;line-height:17px;color:#1e1e1e;letter-spacing:-1.015px;">LCS</span>
<span class="t" style="left:518.7px;top:101.5px;font-size:12px;line-height:17px;color:#a0a0a0;letter-spacing:-0.438px;">Open</span>
<span class="t" style="left:556.7px;top:101.5px;font-size:12px;line-height:17px;color:#a0a0a0;letter-spacing:-0.849px;">Reset</span>
<span class="t" style="left:592.8px;top:101.5px;font-size:12px;line-height:17px;color:#a0a0a0;letter-spacing:-0.181px;">Calculate</span>
<span class="t" style="left:651.3px;top:101.5px;font-size:12px;line-height:17px;color:#a0a0a0;letter-spacing:-0.544px;">Sync</span>
<span class="t" style="left:685.5px;top:101.5px;font-size:12px;line-height:17px;color:#a0a0a0;letter-spacing:-0.364px;">Delete</span>
<span class="t" style="left:735.3px;top:101.5px;font-size:12px;line-height:17px;color:#1e1e1e;letter-spacing:-0.439px;">Loads</span>
<span class="t" style="left:777.5px;top:101.5px;font-size:12px;line-height:17px;color:#a0a0a0;letter-spacing:-0.619px;">Sync</span>
<span class="t" style="left:811.7px;top:101.5px;font-size:12px;line-height:17px;color:#a0a0a0;letter-spacing:-0.202px;">Merge</span>
<span class="t" style="left:851.7px;top:101.5px;font-size:12px;line-height:17px;color:#a0a0a0;letter-spacing:-0.141px;">Divide</span>
<span class="t" style="left:901.3px;top:101.5px;font-size:12px;line-height:17px;color:#1e1e1e;letter-spacing:-0.270px;">Settings</span>
<span class="t" style="left:949.7px;top:101.5px;font-size:12px;line-height:17px;color:#1e1e1e;letter-spacing:-0.209px;">Conversion</span>
<span class="t" style="left:1028.7px;top:101.5px;font-size:12px;line-height:17px;color:#1e1e1e;letter-spacing:-0.425px;">Draw</span>
<span class="t" style="left:1433.5px;top:101.5px;font-size:12px;line-height:17px;color:#1e1e1e;letter-spacing:0.039px;">Connection</span>
<span class="t" style="left:1501.7px;top:101.5px;font-size:12px;line-height:17px;color:#1e1e1e;letter-spacing:-0.034px;">Member</span>
<span class="t" style="left:1553.0px;top:101.5px;font-size:12px;line-height:17px;color:#1e1e1e;letter-spacing:-0.163px;">Detail</span>
<span class="t" style="left:45.3px;top:137.5px;font-size:12px;line-height:17px;color:#a8a8a8;letter-spacing:0.249px;">Import</span>
<span class="t" style="left:158.3px;top:137.5px;font-size:12px;line-height:17px;color:#a8a8a8;letter-spacing:-0.019px;">Connection Export</span>
<span class="t" style="left:382.5px;top:137.5px;font-size:12px;line-height:17px;color:#a8a8a8;letter-spacing:-0.526px;">Labels</span>
<span class="t" style="left:583.7px;top:137.5px;font-size:12px;line-height:17px;color:#a8a8a8;letter-spacing:-0.043px;">Current item</span>
<span class="t" style="left:766.3px;top:137.5px;font-size:12px;line-height:17px;color:#a8a8a8;letter-spacing:0.009px;">Structural model</span>
<span class="t" style="left:934.7px;top:137.5px;font-size:12px;line-height:17px;color:#a8a8a8;letter-spacing:-0.079px;">Options</span>
<span class="t" style="left:1171.3px;top:137.5px;font-size:12px;line-height:17px;color:#a8a8a8;letter-spacing:-0.268px;">Member 1D Forces</span>
<span class="t" style="left:1497.0px;top:137.5px;font-size:12px;line-height:17px;color:#a8a8a8;letter-spacing:-0.335px;">New</span>
<span class="t" style="left:1072.5px;top:70.8px;font-size:12px;line-height:17px;color:#1e1e1e;letter-spacing:-0.866px;">N</span>
<span class="t" style="left:1094.7px;top:70.8px;font-size:12px;line-height:17px;color:#1e1e1e;letter-spacing:-0.198px;">Mx</span>
<span class="t" style="left:1072.2px;top:92.8px;font-size:12px;line-height:17px;color:#1e1e1e;letter-spacing:-0.230px;">Vy</span>
<span class="t" style="left:1094.7px;top:92.8px;font-size:12px;line-height:17px;color:#1e1e1e;letter-spacing:-0.198px;">My</span>
<span class="t" style="left:1072.2px;top:115.5px;font-size:12px;line-height:17px;color:#1e1e1e;letter-spacing:-0.602px;">Vz</span>
<span class="t" style="left:1094.7px;top:115.5px;font-size:12px;line-height:17px;color:#1e1e1e;letter-spacing:-0.348px;">Mz</span>
<span class="t" style="left:1121.3px;top:73.4px;font-size:12px;line-height:17px;color:#1e1e1e;letter-spacing:-0.502px;">Results</span>
<span class="t" style="left:1171.3px;top:73.4px;font-size:12px;line-height:17px;color:#1e1e1e;letter-spacing:-0.937px;">LC2</span>
<span class="t" style="left:1149.7px;top:96.6px;font-size:12px;line-height:17px;color:#1e1e1e;letter-spacing:-0.314px;">Global</span>
<span class="t" style="left:1221.3px;top:96.6px;font-size:12px;line-height:17px;color:#1e1e1e;letter-spacing:-0.257px;">Local</span>
<span class="t" style="left:1274.2px;top:73.4px;font-size:12px;line-height:17px;color:#1e1e1e;letter-spacing:-0.683px;">Scale</span>
<span class="t" style="left:1274.7px;top:99.5px;font-size:12px;line-height:17px;color:#1e1e1e;letter-spacing:-0.382px;">Extreme</span>
<span class="t" style="left:1374.0px;top:73.4px;font-size:12px;line-height:17px;color:#1e1e1e;letter-spacing:-0.463px;">1.00</span>
<span class="t" style="left:1324.0px;top:99.5px;font-size:12px;line-height:17px;color:#1e1e1e;letter-spacing:-0.243px;">Local extre...</span>
<svg style="left:0;top:0" width="1920" height="1032" viewBox="0 0 1920 1032"><path d="M1171.5 171 V167.5 H1175 M1171.5 167.5 L1175.5 171.5 M1181 167.5 H1184.5 V171 M1184.5 167.5 L1180.5 171.5 M1171.5 177 V180.5 H1175 M1171.5 180.5 L1175.5 176.5 M1181 180.5 H1184.5 V177 M1184.5 180.5 L1180.5 176.5" fill="none" stroke="#222" stroke-width="1"/><path d="M1204.5 167.5 C1198.5 168.5 1196.5 177 1201.5 181.5 M1198 178.3 L1201.7 181.8 L1204.6 177.8 M1204.5 167.5 C1208.5 169.5 1207.5 176 1202.5 181 M1208 181 C1212.5 180.5 1215.5 173 1211.8 167.8 M1208.5 170.5 L1211.6 167.2 L1214.8 170.6 M1208 181 L1214 181" fill="none" stroke="#222" stroke-width="1.1"/><path d="M1222.5 172.5 L1226 176 L1229.5 172.5" fill="none" stroke="#444" stroke-width="1"/><path d="M1234.5 160 V188 M1331.5 160 V188" stroke="#d0d0d0" stroke-width="1"/><rect x="1267" y="158" width="32" height="32" fill="#e6e6e6"/><path d="M1243.5 171.5 H1253.5 V181.5 H1243.5 Z M1243.5 171.5 L1248.5 167.5 H1258.5 L1253.5 171.5 M1258.5 167.5 V177.5 L1253.5 181.5" fill="none" stroke="#111" stroke-width="1.2" stroke-linejoin="round"/><path d="M1248.5 172 V177 H1253" fill="none" stroke="#111" stroke-width="0.9"/><path d="M1275.5 171.5 L1280.5 167.5 H1290.5 V177.5 L1285.5 181.5 H1275.5 Z" fill="#c4c4c4"/><rect x="1275.5" y="171.5" width="10" height="10" fill="#9a9a9a"/><path d="M1275.5 171.5 H1285.5 V181.5 H1275.5 Z M1275.5 171.5 L1280.5 167.5 H1290.5 L1285.5 171.5 M1290.5 167.5 V177.5 L1285.5 181.5" fill="none" stroke="#111" stroke-width="1.2" stroke-linejoin="round"/><path d="M1280.5 172 V177 H1285" fill="none" stroke="#111" stroke-width="0.9"/><path d="M1307.5 171.5 L1312.5 167.5 H1322.5 V177.5 L1317.5 181.5 H1307.5 Z" fill="#000"/><rect x="1307.5" y="171.5" width="10" height="10" fill="#000"/><path d="M1307.5 171.5 H1317.5 V181.5 H1307.5 Z M1307.5 171.5 L1312.5 167.5 H1322.5 L1317.5 171.5 M1322.5 167.5 V177.5 L1317.5 181.5" fill="none" stroke="#111" stroke-width="1.2" stroke-linejoin="round"/><path d="M1341.5 171.5 L1353 168.5 L1355 171.5 L1346 179 L1341.5 177.5 Z M1341.5 171.5 L1346 173 V179 M1346 173 L1355 171.5" fill="none" stroke="#111" stroke-width="1.1" stroke-linejoin="round"/><path d="M1372.5 174.5 L1380 167.5 L1387.5 174.5 M1374.5 173 V181 H1378 V176.5 H1382 V181 H1385.5 V173" fill="none" stroke="#222" stroke-width="1.1"/><ellipse cx="1351" cy="263.6" rx="36.8" ry="24.4" fill="#c9c9c9"/><ellipse cx="1351" cy="262" rx="27.7" ry="16.5" fill="#f3f3f3"/><path d="M1351 216.1 L1377.6 231.4 L1351 250.6 L1324.4 231.4 Z" fill="#5c5c5c" stroke="#161616" stroke-width="0.9"/><path d="M1324.4 231.4 L1351 250.6 V275.4 L1328.3 255.8 Z" fill="#2d2d2d" stroke="#161616" stroke-width="0.9"/><path d="M1377.6 231.4 L1351 250.6 V275.4 L1374.1 255.8 Z" fill="#3f3f3f" stroke="#161616" stroke-width="0.9"/><path d="M1325.5 271 L1317 277.5 M1317 277.5 L1320 277.2 M1317 277.5 L1318 274.8 M1374.5 271.5 L1382.5 277.5 M1382.5 277.5 L1379.5 277.2 M1382.5 277.5 L1381.5 274.8" stroke="#555" stroke-width="0.9" fill="none"/></svg><span class="t" style="left:1348.5px;top:228.0px;font-size:5px;line-height:7px;color:#eee;letter-spacing:1.446px;font-weight:bold;">Z</span><span class="t" style="left:1337.5px;top:252.0px;font-size:4.5px;line-height:6px;color:#ddd;letter-spacing:0.498px;font-weight:bold;">X</span><span class="t" style="left:1362.0px;top:251.0px;font-size:4.5px;line-height:6px;color:#ddd;letter-spacing:0.498px;font-weight:bold;">Y</span>
<div class="a" style="left:1373px;top:308px;width:10.5px;height:690px;background:#f0f0f0;"></div>
<div class="a" style="left:1374.5px;top:308px;width:7.5px;height:72px;background:#c9c9c9;"></div>
<div class="a" style="left:1289px;top:308px;width:80px;height:21px;border:1px solid #cf9766;box-sizing:border-box;background:#fff;"></div>
<span class="t" style="left:1297.5px;top:311.0px;font-size:12px;line-height:17px;color:#333;letter-spacing:-0.064px;">Connections</span>
<div class="a" style="left:1270px;top:300px;width:115px;height:698px;overflow:hidden;"><div style="position:absolute;left:-1270px;top:-300px;width:1920px;height:1032px;"><svg style="left:0;top:0" width="1920" height="1032" viewBox="0 0 1920 1032"><path d="M1281 316.5 V322 H1275.5 Z" fill="#555"/><path d="M1302.7 334.4 L1302.9 332.4 L1306.1 332.4 L1306.3 334.4 L1307.2 334.8 L1308.7 333.5 L1311.0 335.8 L1309.7 337.3 L1310.1 338.2 L1312.1 338.4 L1312.1 341.6 L1310.1 341.8 L1309.7 342.7 L1311.0 344.2 L1308.7 346.5 L1307.2 345.2 L1306.3 345.6 L1306.1 347.6 L1302.9 347.6 L1302.7 345.6 L1301.8 345.2 L1300.3 346.5 L1298.0 344.2 L1299.3 342.7 L1298.9 341.8 L1296.9 341.6 L1296.9 338.4 L1298.9 338.2 L1299.3 337.3 L1298.0 335.8 L1300.3 333.5 L1301.8 334.8 Z" fill="#868686"/><circle cx="1304.5" cy="340.0" r="3.0" fill="#fff"/><path d="M1302.7 356.4 L1302.9 354.4 L1306.1 354.4 L1306.3 356.4 L1307.2 356.8 L1308.7 355.5 L1311.0 357.8 L1309.7 359.3 L1310.1 360.2 L1312.1 360.4 L1312.1 363.6 L1310.1 363.8 L1309.7 364.7 L1311.0 366.2 L1308.7 368.5 L1307.2 367.2 L1306.3 367.6 L1306.1 369.6 L1302.9 369.6 L1302.7 367.6 L1301.8 367.2 L1300.3 368.5 L1298.0 366.2 L1299.3 364.7 L1298.9 363.8 L1296.9 363.6 L1296.9 360.4 L1298.9 360.2 L1299.3 359.3 L1298.0 357.8 L1300.3 355.5 L1301.8 356.8 Z" fill="#868686"/><circle cx="1304.5" cy="362.0" r="3.0" fill="#fff"/><path d="M1302.7 378.4 L1302.9 376.4 L1306.1 376.4 L1306.3 378.4 L1307.2 378.8 L1308.7 377.5 L1311.0 379.8 L1309.7 381.3 L1310.1 382.2 L1312.1 382.4 L1312.1 385.6 L1310.1 385.8 L1309.7 386.7 L1311.0 388.2 L1308.7 390.5 L1307.2 389.2 L1306.3 389.6 L1306.1 391.6 L1302.9 391.6 L1302.7 389.6 L1301.8 389.2 L1300.3 390.5 L1298.0 388.2 L1299.3 386.7 L1298.9 385.8 L1296.9 385.6 L1296.9 382.4 L1298.9 382.2 L1299.3 381.3 L1298.0 379.8 L1300.3 377.5 L1301.8 378.8 Z" fill="#868686"/><circle cx="1304.5" cy="384.0" r="3.0" fill="#fff"/><path d="M1302.7 400.4 L1302.9 398.4 L1306.1 398.4 L1306.3 400.4 L1307.2 400.8 L1308.7 399.5 L1311.0 401.8 L1309.7 403.3 L1310.1 404.2 L1312.1 404.4 L1312.1 407.6 L1310.1 407.8 L1309.7 408.7 L1311.0 410.2 L1308.7 412.5 L1307.2 411.2 L1306.3 411.6 L1306.1 413.6 L1302.9 413.6 L1302.7 411.6 L1301.8 411.2 L1300.3 412.5 L1298.0 410.2 L1299.3 408.7 L1298.9 407.8 L1296.9 407.6 L1296.9 404.4 L1298.9 404.2 L1299.3 403.3 L1298.0 401.8 L1300.3 399.5 L1301.8 400.8 Z" fill="#868686"/><circle cx="1304.5" cy="406.0" r="3.0" fill="#fff"/><path d="M1302.7 422.4 L1302.9 420.4 L1306.1 420.4 L1306.3 422.4 L1307.2 422.8 L1308.7 421.5 L1311.0 423.8 L1309.7 425.3 L1310.1 426.2 L1312.1 426.4 L1312.1 429.6 L1310.1 429.8 L1309.7 430.7 L1311.0 432.2 L1308.7 434.5 L1307.2 433.2 L1306.3 433.6 L1306.1 435.6 L1302.9 435.6 L1302.7 433.6 L1301.8 433.2 L1300.3 434.5 L1298.0 432.2 L1299.3 430.7 L1298.9 429.8 L1296.9 429.6 L1296.9 426.4 L1298.9 426.2 L1299.3 425.3 L1298.0 423.8 L1300.3 421.5 L1301.8 422.8 Z" fill="#868686"/><circle cx="1304.5" cy="428.0" r="3.0" fill="#fff"/><path d="M1302.7 444.4 L1302.9 442.4 L1306.1 442.4 L1306.3 444.4 L1307.2 444.8 L1308.7 443.5 L1311.0 445.8 L1309.7 447.3 L1310.1 448.2 L1312.1 448.4 L1312.1 451.6 L1310.1 451.8 L1309.7 452.7 L1311.0 454.2 L1308.7 456.5 L1307.2 455.2 L1306.3 455.6 L1306.1 457.6 L1302.9 457.6 L1302.7 455.6 L1301.8 455.2 L1300.3 456.5 L1298.0 454.2 L1299.3 452.7 L1298.9 451.8 L1296.9 451.6 L1296.9 448.4 L1298.9 448.2 L1299.3 447.3 L1298.0 445.8 L1300.3 443.5 L1301.8 444.8 Z" fill="#868686"/><circle cx="1304.5" cy="450.0" r="3.0" fill="#fff"/><path d="M1302.7 466.4 L1302.9 464.4 L1306.1 464.4 L1306.3 466.4 L1307.2 466.8 L1308.7 465.5 L1311.0 467.8 L1309.7 469.3 L1310.1 470.2 L1312.1 470.4 L1312.1 473.6 L1310.1 473.8 L1309.7 474.7 L1311.0 476.2 L1308.7 478.5 L1307.2 477.2 L1306.3 477.6 L1306.1 479.6 L1302.9 479.6 L1302.7 477.6 L1301.8 477.2 L1300.3 478.5 L1298.0 476.2 L1299.3 474.7 L1298.9 473.8 L1296.9 473.6 L1296.9 470.4 L1298.9 470.2 L1299.3 469.3 L1298.0 467.8 L1300.3 465.5 L1301.8 466.8 Z" fill="#868686"/><circle cx="1304.5" cy="472.0" r="3.0" fill="#fff"/><path d="M1302.7 488.4 L1302.9 486.4 L1306.1 486.4 L1306.3 488.4 L1307.2 488.8 L1308.7 487.5 L1311.0 489.8 L1309.7 491.3 L1310.1 492.2 L1312.1 492.4 L1312.1 495.6 L1310.1 495.8 L1309.7 496.7 L1311.0 498.2 L1308.7 500.5 L1307.2 499.2 L1306.3 499.6 L1306.1 501.6 L1302.9 501.6 L1302.7 499.6 L1301.8 499.2 L1300.3 500.5 L1298.0 498.2 L1299.3 496.7 L1298.9 495.8 L1296.9 495.6 L1296.9 492.4 L1298.9 492.2 L1299.3 491.3 L1298.0 489.8 L1300.3 487.5 L1301.8 488.8 Z" fill="#868686"/><circle cx="1304.5" cy="494.0" r="3.0" fill="#fff"/><path d="M1302.7 510.4 L1302.9 508.4 L1306.1 508.4 L1306.3 510.4 L1307.2 510.8 L1308.7 509.5 L1311.0 511.8 L1309.7 513.3 L1310.1 514.2 L1312.1 514.4 L1312.1 517.6 L1310.1 517.8 L1309.7 518.7 L1311.0 520.2 L1308.7 522.5 L1307.2 521.2 L1306.3 521.6 L1306.1 523.6 L1302.9 523.6 L1302.7 521.6 L1301.8 521.2 L1300.3 522.5 L1298.0 520.2 L1299.3 518.7 L1298.9 517.8 L1296.9 517.6 L1296.9 514.4 L1298.9 514.2 L1299.3 513.3 L1298.0 511.8 L1300.3 509.5 L1301.8 510.8 Z" fill="#868686"/><circle cx="1304.5" cy="516.0" r="3.0" fill="#fff"/><path d="M1302.7 532.4 L1302.9 530.4 L1306.1 530.4 L1306.3 532.4 L1307.2 532.8 L1308.7 531.5 L1311.0 533.8 L1309.7 535.3 L1310.1 536.2 L1312.1 536.4 L1312.1 539.6 L1310.1 539.8 L1309.7 540.7 L1311.0 542.2 L1308.7 544.5 L1307.2 543.2 L1306.3 543.6 L1306.1 545.6 L1302.9 545.6 L1302.7 543.6 L1301.8 543.2 L1300.3 544.5 L1298.0 542.2 L1299.3 540.7 L1298.9 539.8 L1296.9 539.6 L1296.9 536.4 L1298.9 536.2 L1299.3 535.3 L1298.0 533.8 L1300.3 531.5 L1301.8 532.8 Z" fill="#868686"/><circle cx="1304.5" cy="538.0" r="3.0" fill="#fff"/><path d="M1302.7 554.4 L1302.9 552.4 L1306.1 552.4 L1306.3 554.4 L1307.2 554.8 L1308.7 553.5 L1311.0 555.8 L1309.7 557.3 L1310.1 558.2 L1312.1 558.4 L1312.1 561.6 L1310.1 561.8 L1309.7 562.7 L1311.0 564.2 L1308.7 566.5 L1307.2 565.2 L1306.3 565.6 L1306.1 567.6 L1302.9 567.6 L1302.7 565.6 L1301.8 565.2 L1300.3 566.5 L1298.0 564.2 L1299.3 562.7 L1298.9 561.8 L1296.9 561.6 L1296.9 558.4 L1298.9 558.2 L1299.3 557.3 L1298.0 555.8 L1300.3 553.5 L1301.8 554.8 Z" fill="#868686"/><circle cx="1304.5" cy="560.0" r="3.0" fill="#fff"/><path d="M1302.7 576.4 L1302.9 574.4 L1306.1 574.4 L1306.3 576.4 L1307.2 576.8 L1308.7 575.5 L1311.0 577.8 L1309.7 579.3 L1310.1 580.2 L1312.1 580.4 L1312.1 583.6 L1310.1 583.8 L1309.7 584.7 L1311.0 586.2 L1308.7 588.5 L1307.2 587.2 L1306.3 587.6 L1306.1 589.6 L1302.9 589.6 L1302.7 587.6 L1301.8 587.2 L1300.3 588.5 L1298.0 586.2 L1299.3 584.7 L1298.9 583.8 L1296.9 583.6 L1296.9 580.4 L1298.9 580.2 L1299.3 579.3 L1298.0 577.8 L1300.3 575.5 L1301.8 576.8 Z" fill="#868686"/><circle cx="1304.5" cy="582.0" r="3.0" fill="#fff"/><path d="M1302.7 598.4 L1302.9 596.4 L1306.1 596.4 L1306.3 598.4 L1307.2 598.8 L1308.7 597.5 L1311.0 599.8 L1309.7 601.3 L1310.1 602.2 L1312.1 602.4 L1312.1 605.6 L1310.1 605.8 L1309.7 606.7 L1311.0 608.2 L1308.7 610.5 L1307.2 609.2 L1306.3 609.6 L1306.1 611.6 L1302.9 611.6 L1302.7 609.6 L1301.8 609.2 L1300.3 610.5 L1298.0 608.2 L1299.3 606.7 L1298.9 605.8 L1296.9 605.6 L1296.9 602.4 L1298.9 602.2 L1299.3 601.3 L1298.0 599.8 L1300.3 597.5 L1301.8 598.8 Z" fill="#868686"/><circle cx="1304.5" cy="604.0" r="3.0" fill="#fff"/><path d="M1302.7 620.4 L1302.9 618.4 L1306.1 618.4 L1306.3 620.4 L1307.2 620.8 L1308.7 619.5 L1311.0 621.8 L1309.7 623.3 L1310.1 624.2 L1312.1 624.4 L1312.1 627.6 L1310.1 627.8 L1309.7 628.7 L1311.0 630.2 L1308.7 632.5 L1307.2 631.2 L1306.3 631.6 L1306.1 633.6 L1302.9 633.6 L1302.7 631.6 L1301.8 631.2 L1300.3 632.5 L1298.0 630.2 L1299.3 628.7 L1298.9 627.8 L1296.9 627.6 L1296.9 624.4 L1298.9 624.2 L1299.3 623.3 L1298.0 621.8 L1300.3 619.5 L1301.8 620.8 Z" fill="#868686"/><circle cx="1304.5" cy="626.0" r="3.0" fill="#fff"/><path d="M1302.7 642.4 L1302.9 640.4 L1306.1 640.4 L1306.3 642.4 L1307.2 642.8 L1308.7 641.5 L1311.0 643.8 L1309.7 645.3 L1310.1 646.2 L1312.1 646.4 L1312.1 649.6 L1310.1 649.8 L1309.7 650.7 L1311.0 652.2 L1308.7 654.5 L1307.2 653.2 L1306.3 653.6 L1306.1 655.6 L1302.9 655.6 L1302.7 653.6 L1301.8 653.2 L1300.3 654.5 L1298.0 652.2 L1299.3 650.7 L1298.9 649.8 L1296.9 649.6 L1296.9 646.4 L1298.9 646.2 L1299.3 645.3 L1298.0 643.8 L1300.3 641.5 L1301.8 642.8 Z" fill="#868686"/><circle cx="1304.5" cy="648.0" r="3.0" fill="#fff"/><path d="M1302.7 664.4 L1302.9 662.4 L1306.1 662.4 L1306.3 664.4 L1307.2 664.8 L1308.7 663.5 L1311.0 665.8 L1309.7 667.3 L1310.1 668.2 L1312.1 668.4 L1312.1 671.6 L1310.1 671.8 L1309.7 672.7 L1311.0 674.2 L1308.7 676.5 L1307.2 675.2 L1306.3 675.6 L1306.1 677.6 L1302.9 677.6 L1302.7 675.6 L1301.8 675.2 L1300.3 676.5 L1298.0 674.2 L1299.3 672.7 L1298.9 671.8 L1296.9 671.6 L1296.9 668.4 L1298.9 668.2 L1299.3 667.3 L1298.0 665.8 L1300.3 663.5 L1301.8 664.8 Z" fill="#868686"/><circle cx="1304.5" cy="670.0" r="3.0" fill="#fff"/><path d="M1302.7 686.4 L1302.9 684.4 L1306.1 684.4 L1306.3 686.4 L1307.2 686.8 L1308.7 685.5 L1311.0 687.8 L1309.7 689.3 L1310.1 690.2 L1312.1 690.4 L1312.1 693.6 L1310.1 693.8 L1309.7 694.7 L1311.0 696.2 L1308.7 698.5 L1307.2 697.2 L1306.3 697.6 L1306.1 699.6 L1302.9 699.6 L1302.7 697.6 L1301.8 697.2 L1300.3 698.5 L1298.0 696.2 L1299.3 694.7 L1298.9 693.8 L1296.9 693.6 L1296.9 690.4 L1298.9 690.2 L1299.3 689.3 L1298.0 687.8 L1300.3 685.5 L1301.8 686.8 Z" fill="#868686"/><circle cx="1304.5" cy="692.0" r="3.0" fill="#fff"/><path d="M1302.7 708.4 L1302.9 706.4 L1306.1 706.4 L1306.3 708.4 L1307.2 708.8 L1308.7 707.5 L1311.0 709.8 L1309.7 711.3 L1310.1 712.2 L1312.1 712.4 L1312.1 715.6 L1310.1 715.8 L1309.7 716.7 L1311.0 718.2 L1308.7 720.5 L1307.2 719.2 L1306.3 719.6 L1306.1 721.6 L1302.9 721.6 L1302.7 719.6 L1301.8 719.2 L1300.3 720.5 L1298.0 718.2 L1299.3 716.7 L1298.9 715.8 L1296.9 715.6 L1296.9 712.4 L1298.9 712.2 L1299.3 711.3 L1298.0 709.8 L1300.3 707.5 L1301.8 708.8 Z" fill="#868686"/><circle cx="1304.5" cy="714.0" r="3.0" fill="#fff"/><path d="M1302.7 730.4 L1302.9 728.4 L1306.1 728.4 L1306.3 730.4 L1307.2 730.8 L1308.7 729.5 L1311.0 731.8 L1309.7 733.3 L1310.1 734.2 L1312.1 734.4 L1312.1 737.6 L1310.1 737.8 L1309.7 738.7 L1311.0 740.2 L1308.7 742.5 L1307.2 741.2 L1306.3 741.6 L1306.1 743.6 L1302.9 743.6 L1302.7 741.6 L1301.8 741.2 L1300.3 742.5 L1298.0 740.2 L1299.3 738.7 L1298.9 737.8 L1296.9 737.6 L1296.9 734.4 L1298.9 734.2 L1299.3 733.3 L1298.0 731.8 L1300.3 729.5 L1301.8 730.8 Z" fill="#868686"/><circle cx="1304.5" cy="736.0" r="3.0" fill="#fff"/><path d="M1302.7 752.4 L1302.9 750.4 L1306.1 750.4 L1306.3 752.4 L1307.2 752.8 L1308.7 751.5 L1311.0 753.8 L1309.7 755.3 L1310.1 756.2 L1312.1 756.4 L1312.1 759.6 L1310.1 759.8 L1309.7 760.7 L1311.0 762.2 L1308.7 764.5 L1307.2 763.2 L1306.3 763.6 L1306.1 765.6 L1302.9 765.6 L1302.7 763.6 L1301.8 763.2 L1300.3 764.5 L1298.0 762.2 L1299.3 760.7 L1298.9 759.8 L1296.9 759.6 L1296.9 756.4 L1298.9 756.2 L1299.3 755.3 L1298.0 753.8 L1300.3 751.5 L1301.8 752.8 Z" fill="#868686"/><circle cx="1304.5" cy="758.0" r="3.0" fill="#fff"/><path d="M1302.7 774.4 L1302.9 772.4 L1306.1 772.4 L1306.3 774.4 L1307.2 774.8 L1308.7 773.5 L1311.0 775.8 L1309.7 777.3 L1310.1 778.2 L1312.1 778.4 L1312.1 781.6 L1310.1 781.8 L1309.7 782.7 L1311.0 784.2 L1308.7 786.5 L1307.2 785.2 L1306.3 785.6 L1306.1 787.6 L1302.9 787.6 L1302.7 785.6 L1301.8 785.2 L1300.3 786.5 L1298.0 784.2 L1299.3 782.7 L1298.9 781.8 L1296.9 781.6 L1296.9 778.4 L1298.9 778.2 L1299.3 777.3 L1298.0 775.8 L1300.3 773.5 L1301.8 774.8 Z" fill="#868686"/><circle cx="1304.5" cy="780.0" r="3.0" fill="#fff"/><path d="M1302.7 796.4 L1302.9 794.4 L1306.1 794.4 L1306.3 796.4 L1307.2 796.8 L1308.7 795.5 L1311.0 797.8 L1309.7 799.3 L1310.1 800.2 L1312.1 800.4 L1312.1 803.6 L1310.1 803.8 L1309.7 804.7 L1311.0 806.2 L1308.7 808.5 L1307.2 807.2 L1306.3 807.6 L1306.1 809.6 L1302.9 809.6 L1302.7 807.6 L1301.8 807.2 L1300.3 808.5 L1298.0 806.2 L1299.3 804.7 L1298.9 803.8 L1296.9 803.6 L1296.9 800.4 L1298.9 800.2 L1299.3 799.3 L1298.0 797.8 L1300.3 795.5 L1301.8 796.8 Z" fill="#868686"/><circle cx="1304.5" cy="802.0" r="3.0" fill="#fff"/><path d="M1302.7 818.4 L1302.9 816.4 L1306.1 816.4 L1306.3 818.4 L1307.2 818.8 L1308.7 817.5 L1311.0 819.8 L1309.7 821.3 L1310.1 822.2 L1312.1 822.4 L1312.1 825.6 L1310.1 825.8 L1309.7 826.7 L1311.0 828.2 L1308.7 830.5 L1307.2 829.2 L1306.3 829.6 L1306.1 831.6 L1302.9 831.6 L1302.7 829.6 L1301.8 829.2 L1300.3 830.5 L1298.0 828.2 L1299.3 826.7 L1298.9 825.8 L1296.9 825.6 L1296.9 822.4 L1298.9 822.2 L1299.3 821.3 L1298.0 819.8 L1300.3 817.5 L1301.8 818.8 Z" fill="#868686"/><circle cx="1304.5" cy="824.0" r="3.0" fill="#fff"/><path d="M1302.7 840.4 L1302.9 838.4 L1306.1 838.4 L1306.3 840.4 L1307.2 840.8 L1308.7 839.5 L1311.0 841.8 L1309.7 843.3 L1310.1 844.2 L1312.1 844.4 L1312.1 847.6 L1310.1 847.8 L1309.7 848.7 L1311.0 850.2 L1308.7 852.5 L1307.2 851.2 L1306.3 851.6 L1306.1 853.6 L1302.9 853.6 L1302.7 851.6 L1301.8 851.2 L1300.3 852.5 L1298.0 850.2 L1299.3 848.7 L1298.9 847.8 L1296.9 847.6 L1296.9 844.4 L1298.9 844.2 L1299.3 843.3 L1298.0 841.8 L1300.3 839.5 L1301.8 840.8 Z" fill="#868686"/><circle cx="1304.5" cy="846.0" r="3.0" fill="#fff"/><path d="M1302.7 862.4 L1302.9 860.4 L1306.1 860.4 L1306.3 862.4 L1307.2 862.8 L1308.7 861.5 L1311.0 863.8 L1309.7 865.3 L1310.1 866.2 L1312.1 866.4 L1312.1 869.6 L1310.1 869.8 L1309.7 870.7 L1311.0 872.2 L1308.7 874.5 L1307.2 873.2 L1306.3 873.6 L1306.1 875.6 L1302.9 875.6 L1302.7 873.6 L1301.8 873.2 L1300.3 874.5 L1298.0 872.2 L1299.3 870.7 L1298.9 869.8 L1296.9 869.6 L1296.9 866.4 L1298.9 866.2 L1299.3 865.3 L1298.0 863.8 L1300.3 861.5 L1301.8 862.8 Z" fill="#868686"/><circle cx="1304.5" cy="868.0" r="3.0" fill="#fff"/><path d="M1302.7 884.4 L1302.9 882.4 L1306.1 882.4 L1306.3 884.4 L1307.2 884.8 L1308.7 883.5 L1311.0 885.8 L1309.7 887.3 L1310.1 888.2 L1312.1 888.4 L1312.1 891.6 L1310.1 891.8 L1309.7 892.7 L1311.0 894.2 L1308.7 896.5 L1307.2 895.2 L1306.3 895.6 L1306.1 897.6 L1302.9 897.6 L1302.7 895.6 L1301.8 895.2 L1300.3 896.5 L1298.0 894.2 L1299.3 892.7 L1298.9 891.8 L1296.9 891.6 L1296.9 888.4 L1298.9 888.2 L1299.3 887.3 L1298.0 885.8 L1300.3 883.5 L1301.8 884.8 Z" fill="#868686"/><circle cx="1304.5" cy="890.0" r="3.0" fill="#fff"/><path d="M1302.7 906.4 L1302.9 904.4 L1306.1 904.4 L1306.3 906.4 L1307.2 906.8 L1308.7 905.5 L1311.0 907.8 L1309.7 909.3 L1310.1 910.2 L1312.1 910.4 L1312.1 913.6 L1310.1 913.8 L1309.7 914.7 L1311.0 916.2 L1308.7 918.5 L1307.2 917.2 L1306.3 917.6 L1306.1 919.6 L1302.9 919.6 L1302.7 917.6 L1301.8 917.2 L1300.3 918.5 L1298.0 916.2 L1299.3 914.7 L1298.9 913.8 L1296.9 913.6 L1296.9 910.4 L1298.9 910.2 L1299.3 909.3 L1298.0 907.8 L1300.3 905.5 L1301.8 906.8 Z" fill="#868686"/><circle cx="1304.5" cy="912.0" r="3.0" fill="#fff"/><path d="M1302.7 928.4 L1302.9 926.4 L1306.1 926.4 L1306.3 928.4 L1307.2 928.8 L1308.7 927.5 L1311.0 929.8 L1309.7 931.3 L1310.1 932.2 L1312.1 932.4 L1312.1 935.6 L1310.1 935.8 L1309.7 936.7 L1311.0 938.2 L1308.7 940.5 L1307.2 939.2 L1306.3 939.6 L1306.1 941.6 L1302.9 941.6 L1302.7 939.6 L1301.8 939.2 L1300.3 940.5 L1298.0 938.2 L1299.3 936.7 L1298.9 935.8 L1296.9 935.6 L1296.9 932.4 L1298.9 932.2 L1299.3 931.3 L1298.0 929.8 L1300.3 927.5 L1301.8 928.8 Z" fill="#868686"/><circle cx="1304.5" cy="934.0" r="3.0" fill="#fff"/><path d="M1302.7 950.4 L1302.9 948.4 L1306.1 948.4 L1306.3 950.4 L1307.2 950.8 L1308.7 949.5 L1311.0 951.8 L1309.7 953.3 L1310.1 954.2 L1312.1 954.4 L1312.1 957.6 L1310.1 957.8 L1309.7 958.7 L1311.0 960.2 L1308.7 962.5 L1307.2 961.2 L1306.3 961.6 L1306.1 963.6 L1302.9 963.6 L1302.7 961.6 L1301.8 961.2 L1300.3 962.5 L1298.0 960.2 L1299.3 958.7 L1298.9 957.8 L1296.9 957.6 L1296.9 954.4 L1298.9 954.2 L1299.3 953.3 L1298.0 951.8 L1300.3 949.5 L1301.8 950.8 Z" fill="#868686"/><circle cx="1304.5" cy="956.0" r="3.0" fill="#fff"/><path d="M1302.7 972.4 L1302.9 970.4 L1306.1 970.4 L1306.3 972.4 L1307.2 972.8 L1308.7 971.5 L1311.0 973.8 L1309.7 975.3 L1310.1 976.2 L1312.1 976.4 L1312.1 979.6 L1310.1 979.8 L1309.7 980.7 L1311.0 982.2 L1308.7 984.5 L1307.2 983.2 L1306.3 983.6 L1306.1 985.6 L1302.9 985.6 L1302.7 983.6 L1301.8 983.2 L1300.3 984.5 L1298.0 982.2 L1299.3 980.7 L1298.9 979.8 L1296.9 979.6 L1296.9 976.4 L1298.9 976.2 L1299.3 975.3 L1298.0 973.8 L1300.3 971.5 L1301.8 972.8 Z" fill="#868686"/><circle cx="1304.5" cy="978.0" r="3.0" fill="#fff"/><path d="M1302.7 994.4 L1302.9 992.4 L1306.1 992.4 L1306.3 994.4 L1307.2 994.8 L1308.7 993.5 L1311.0 995.8 L1309.7 997.3 L1310.1 998.2 L1312.1 998.4 L1312.1 1001.6 L1310.1 1001.8 L1309.7 1002.7 L1311.0 1004.2 L1308.7 1006.5 L1307.2 1005.2 L1306.3 1005.6 L1306.1 1007.6 L1302.9 1007.6 L1302.7 1005.6 L1301.8 1005.2 L1300.3 1006.5 L1298.0 1004.2 L1299.3 1002.7 L1298.9 1001.8 L1296.9 1001.6 L1296.9 998.4 L1298.9 998.2 L1299.3 997.3 L1298.0 995.8 L1300.3 993.5 L1301.8 994.8 Z" fill="#868686"/><circle cx="1304.5" cy="1000.0" r="3.0" fill="#fff"/></svg><span class="t" style="left:1318.5px;top:332.9px;font-size:12px;line-height:17px;color:#333;letter-spacing:-0.230px;">N1</span><span class="t" style="left:1318.5px;top:354.9px;font-size:12px;line-height:17px;color:#333;letter-spacing:-0.230px;">N2</span><span class="t" style="left:1318.5px;top:376.9px;font-size:12px;line-height:17px;color:#333;letter-spacing:-0.230px;">N3</span><span class="t" style="left:1318.5px;top:398.9px;font-size:12px;line-height:17px;color:#333;letter-spacing:-0.230px;">N4</span><span class="t" style="left:1318.5px;top:420.9px;font-size:12px;line-height:17px;color:#333;letter-spacing:-0.230px;">N5</span><span class="t" style="left:1318.5px;top:442.9px;font-size:12px;line-height:17px;color:#333;letter-spacing:-0.230px;">N6</span><span class="t" style="left:1318.5px;top:464.9px;font-size:12px;line-height:17px;color:#333;letter-spacing:-0.230px;">N7</span><span class="t" style="left:1318.5px;top:486.9px;font-size:12px;line-height:17px;color:#333;letter-spacing:-0.230px;">N8</span><span class="t" style="left:1318.5px;top:508.9px;font-size:12px;line-height:17px;color:#333;letter-spacing:-0.230px;">N9</span><span class="t" style="left:1318.5px;top:530.9px;font-size:12px;line-height:17px;color:#333;letter-spacing:-0.220px;">N10</span><span class="t" style="left:1318.5px;top:552.9px;font-size:12px;line-height:17px;color:#333;letter-spacing:-0.211px;">N11</span><span class="t" style="left:1318.5px;top:574.9px;font-size:12px;line-height:17px;color:#333;letter-spacing:-0.220px;">N12</span><span class="t" style="left:1318.5px;top:596.9px;font-size:12px;line-height:17px;color:#333;letter-spacing:-0.215px;">N226</span><span class="t" style="left:1318.5px;top:618.9px;font-size:12px;line-height:17px;color:#333;letter-spacing:-0.220px;">N13</span><span class="t" style="left:1318.5px;top:640.9px;font-size:12px;line-height:17px;color:#333;letter-spacing:-0.220px;">N14</span><span class="t" style="left:1318.5px;top:662.9px;font-size:12px;line-height:17px;color:#333;letter-spacing:-0.220px;">N15</span><span class="t" style="left:1318.5px;top:684.9px;font-size:12px;line-height:17px;color:#333;letter-spacing:-0.220px;">N16</span><span class="t" style="left:1318.5px;top:706.9px;font-size:12px;line-height:17px;color:#333;letter-spacing:-0.220px;">N17</span><span class="t" style="left:1318.5px;top:728.9px;font-size:12px;line-height:17px;color:#333;letter-spacing:-0.220px;">N18</span><span class="t" style="left:1318.5px;top:750.9px;font-size:12px;line-height:17px;color:#333;letter-spacing:-0.220px;">N19</span><span class="t" style="left:1318.5px;top:772.9px;font-size:12px;line-height:17px;color:#333;letter-spacing:-0.220px;">N20</span><span class="t" style="left:1318.5px;top:794.9px;font-size:12px;line-height:17px;color:#333;letter-spacing:-0.220px;">N21</span><span class="t" style="left:1318.5px;top:816.9px;font-size:12px;line-height:17px;color:#333;letter-spacing:-0.220px;">N22</span><span class="t" style="left:1318.5px;top:838.9px;font-size:12px;line-height:17px;color:#333;letter-spacing:-0.220px;">N23</span><span class="t" style="left:1318.5px;top:860.9px;font-size:12px;line-height:17px;color:#333;letter-spacing:-0.220px;">N28</span><span class="t" style="left:1318.5px;top:882.9px;font-size:12px;line-height:17px;color:#333;letter-spacing:-0.220px;">N27</span><span class="t" style="left:1318.5px;top:904.9px;font-size:12px;line-height:17px;color:#333;letter-spacing:-0.220px;">N26</span><span class="t" style="left:1318.5px;top:926.9px;font-size:12px;line-height:17px;color:#333;letter-spacing:-0.220px;">N25</span><span class="t" style="left:1318.5px;top:948.9px;font-size:12px;line-height:17px;color:#333;letter-spacing:-0.220px;">N24</span><span class="t" style="left:1318.5px;top:970.9px;font-size:12px;line-height:17px;color:#333;letter-spacing:-0.220px;">N29</span><span class="t" style="left:1318.5px;top:992.9px;font-size:12px;line-height:17px;color:#333;letter-spacing:-0.220px;">N30</span></div></div>
<div class="a" style="left:1405.5px;top:158px;width:6.5px;height:846px;background:#c8c8c8;"></div>
<div class="a" style="left:1412px;top:158px;width:508px;height:845px;background:#fff;"></div>
<div class="a" style="left:1412px;top:158px;width:508px;height:25px;background:#ec7424;"></div>
<span class="t" style="left:1422.0px;top:162.5px;font-size:12px;line-height:17px;color:#fff;letter-spacing:0.329px;font-weight:bold;">N189</span>
<span class="t" style="left:1462.0px;top:162.5px;font-size:12px;line-height:17px;color:#fff;letter-spacing:0.219px;">[Connection]</span>
<span class="t" style="left:1731.0px;top:162.5px;font-size:12px;line-height:17px;color:#f6b27e;letter-spacing:-0.166px;font-weight:bold;">Open</span>
<span class="t" style="left:1781.5px;top:162.5px;font-size:12px;line-height:17px;color:#fff;letter-spacing:-0.348px;font-weight:bold;">Load update</span>
<span class="t" style="left:1869.6px;top:162.5px;font-size:12px;line-height:17px;color:#f6b27e;letter-spacing:-0.256px;font-weight:bold;">Reset</span>
<span class="t" style="left:1437.0px;top:193.2px;font-size:12px;line-height:17px;color:#222;letter-spacing:-0.098px;font-weight:bold;">General</span>
<span class="t" style="left:1437.0px;top:313.2px;font-size:12px;line-height:17px;color:#222;letter-spacing:-0.867px;font-weight:bold;">Loads</span>
<span class="t" style="left:1442.5px;top:220.9px;font-size:12px;line-height:17px;color:#222;letter-spacing:-0.002px;">Name</span>
<span class="t" style="left:1442.5px;top:243.9px;font-size:12px;line-height:17px;color:#222;letter-spacing:0.079px;">Node</span>
<span class="t" style="left:1442.5px;top:266.9px;font-size:12px;line-height:17px;color:#222;letter-spacing:-0.022px;">Connected members</span>
<span class="t" style="left:1442.5px;top:289.9px;font-size:12px;line-height:17px;color:#222;letter-spacing:0.251px;">Connection point [ft]</span>
<div class="a" style="left:1580px;top:218.5px;width:331px;height:19px;background:#efefef;border:1px solid #e2e2e2;box-sizing:border-box;"></div>
<div class="a" style="left:1580px;top:241.5px;width:331px;height:19px;background:#efefef;border:1px solid #e2e2e2;box-sizing:border-box;"></div>
<div class="a" style="left:1580px;top:287.5px;width:331px;height:19px;background:#efefef;border:1px solid #e2e2e2;box-sizing:border-box;"></div>
<span class="t" style="left:1585.0px;top:220.9px;font-size:12px;line-height:17px;color:#a9a9a9;letter-spacing:-0.421px;">N189</span>
<span class="t" style="left:1585.0px;top:243.9px;font-size:12px;line-height:17px;color:#a9a9a9;letter-spacing:-0.673px;">1814</span>
<span class="t" style="left:1584.0px;top:266.4px;font-size:12px;line-height:17px;color:#222;letter-spacing:-0.218px;">M211, M239, M278</span>
<span class="t" style="left:1585.0px;top:289.9px;font-size:12px;line-height:17px;color:#a9a9a9;letter-spacing:-0.390px;">[0.00; 110.70; 30.00]</span>
<span class="t" style="left:1442.5px;top:340.9px;font-size:12px;line-height:17px;color:#222;letter-spacing:-0.315px;">Result classes for checks</span>
<div class="a" style="left:1580px;top:338px;width:331px;height:20px;background:#fff;border:1px solid #dcdcdc;box-sizing:border-box;"></div>
<span class="t" style="left:1585.0px;top:340.9px;font-size:12px;line-height:17px;color:#111;letter-spacing:-0.308px;">All ULS Fund</span>
<span class="t" style="left:1492.0px;top:373.5px;font-size:12px;line-height:17px;color:#222;letter-spacing:-0.075px;">This result class has evaluation of critical effects activated. Only critical effects</span>
<span class="t" style="left:1492.0px;top:388.5px;font-size:12px;line-height:17px;color:#222;letter-spacing:0.033px;">will be transfered to the connection.</span>
<svg style="left:0;top:0" width="1920" height="1032" viewBox="0 0 1920 1032"><path d="M1422.5 196 H1431.5 L1427 202 Z" fill="#f5a21c"/><path d="M1422.5 316 H1431.5 L1427 322 Z" fill="#f5a21c"/><path d="M1896.5 346 L1901 350.5 L1905.5 346" fill="none" stroke="#333" stroke-width="1.2"/><path d="M1461.8 380.5 L1471.3 397 H1452.3 Z" fill="#e3dc3c" stroke="#d6cf55" stroke-width="1" stroke-linejoin="round"/><rect x="1461.1" y="385.5" width="1.5" height="6.5" fill="#222"/><rect x="1461.1" y="393.3" width="1.5" height="1.6" fill="#222"/><path d="M1897.5 267.5 V279.5 L1900.3 277 L1902.3 281.8 L1904 281 L1902 276.4 H1905.8 Z" fill="#fff" stroke="#111" stroke-width="1" stroke-linejoin="round"/></svg>
<div class="a brushed" style="left:0;top:1004px;width:1920px;height:28px;"></div>
<span class="t" style="left:13.0px;top:1011.5px;font-size:11.5px;line-height:16px;color:#8a8a8a;letter-spacing:-0.100px;font-weight:bold;">Design code:</span>
<span class="t" style="left:89.0px;top:1011.5px;font-size:11.5px;line-height:16px;color:#fff;letter-spacing:0.056px;font-weight:bold;">AISC 360-22 (LRFD)</span>
<svg style="left:0;top:0" width="1920" height="1032" viewBox="0 0 1920 1032"><g fill="#d8d8d8"><rect x="1875" y="1018.3" width="6" height="1.6"/><path d="M1880.5 1015.5 H1886.5 V1022.8 H1880.5 A3.6 3.6 0 0 1 1880.5 1015.5 Z"/><rect x="1886.5" y="1016.2" width="4" height="1.6"/><rect x="1886.5" y="1020.4" width="4" height="1.6"/><path d="M1895 1014.8 H1898 A4.3 4.3 0 0 1 1898 1023.4 H1895 Z"/><rect x="1900" y="1018.3" width="7" height="1.6"/></g></svg>
<div class="a" style="left:38.5px;top:62.5px;width:49.5px;height:65px;border:4px solid #ee4c4c;border-radius:9px;box-sizing:border-box;"></div>
<svg style="left:0;top:0" width="1920" height="1032" viewBox="0 0 1920 1032"><path d="M106 145.5 L196.4 221.5" stroke="#f04848" stroke-width="7" fill="none"/><path d="M88 128 L114 134 L108 141.5 L104.5 146.5 L98.6 151.5 Z" fill="#f04848"/></svg>
<div class="a" style="left:131px;top:220px;width:246px;height:95px;background:#f04848;border-radius:4px;"></div>
<span class="t" style="left:151.7px;top:243.5px;font-size:19px;line-height:27px;color:#fff;letter-spacing:0.011px;font-weight:bold;">open the SAF file from</span>
<span class="t" style="left:183.2px;top:265.0px;font-size:19px;line-height:27px;color:#fff;letter-spacing:0.143px;font-weight:bold;">saved location.</span>
</div></body></html>
